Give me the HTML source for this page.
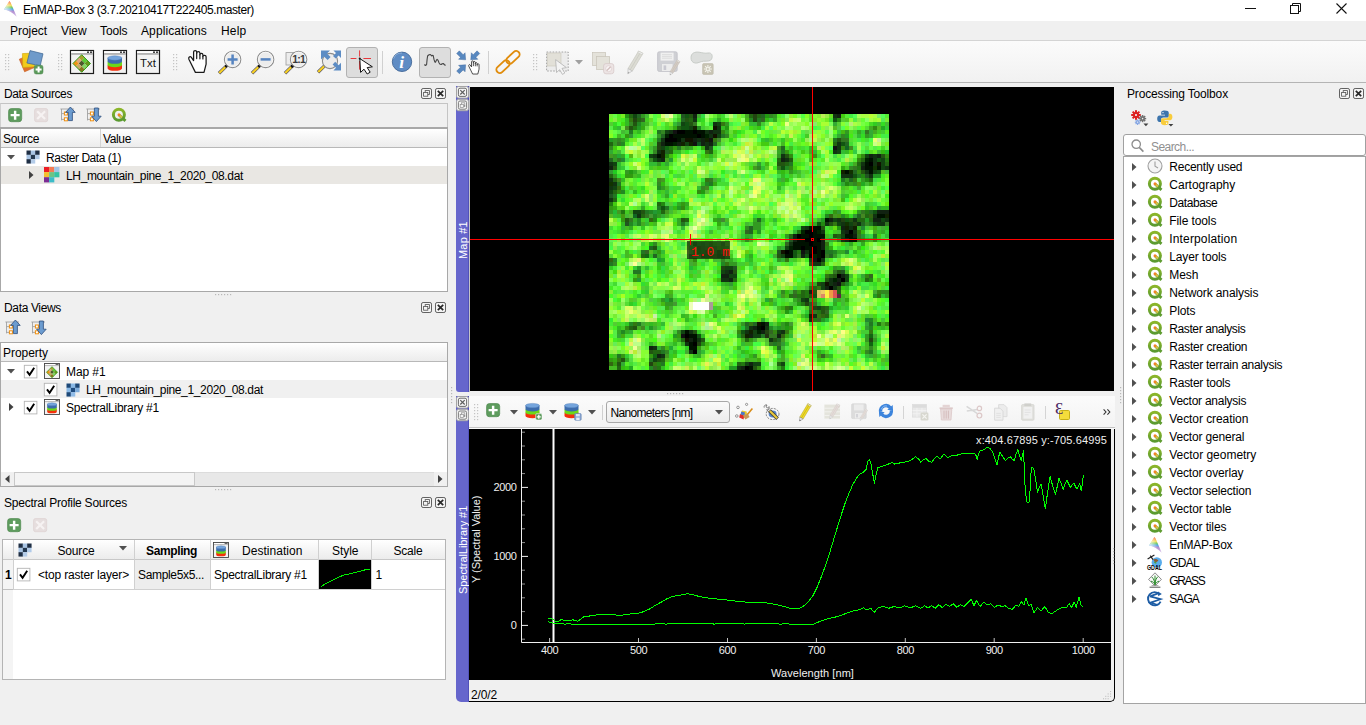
<!DOCTYPE html>
<html lang="en"><head><meta charset="utf-8"><title>EnMAP-Box 3</title><style>
html,body{margin:0;padding:0;}
body{width:1366px;height:725px;overflow:hidden;background:#f0f0f0;position:relative;font-family:"Liberation Sans",sans-serif;font-size:12px;color:#000;}
.t{position:absolute;white-space:nowrap;}
.r{position:absolute;box-sizing:border-box;}
svg{overflow:visible;}
svg text{font-family:"Liberation Sans",sans-serif;}
</style></head>
<body>
<div class="r" style="left:0px;top:0px;width:1366px;height:21px;background:#ffffff;"></div>
<svg class="r" style="left:0;top:0" width="0" height="0"><defs><linearGradient id="lg1" x1="0" y1="0" x2="0" y2="1"><stop offset="0" stop-color="#f02818"/><stop offset="0.16" stop-color="#f89018"/><stop offset="0.28" stop-color="#f4d838"/><stop offset="0.4" stop-color="#68c440"/><stop offset="0.52" stop-color="#48a8e4"/><stop offset="0.66" stop-color="#b08cd0"/><stop offset="1" stop-color="#dcc8ec"/></linearGradient><linearGradient id="lg2" x1="0" y1="0" x2="1" y2="0"><stop offset="0" stop-color="#fff" stop-opacity="0.85"/><stop offset="0.45" stop-color="#fff" stop-opacity="0.35"/><stop offset="0.7" stop-color="#fff" stop-opacity="0"/></linearGradient><linearGradient id="qg" x1="0" y1="0" x2="0" y2="1"><stop offset="0" stop-color="#8cb62a"/><stop offset="1" stop-color="#5a9a30"/></linearGradient></defs></svg>
<svg class="r" style="left:0px;top:0px;" width="18" height="18" viewBox="0 0 18 18"><path d="M9.4 0.9 L4.1 9.4 Q10.4 10.4 16.7 16.7 Q13.6 9.2 10.5 2.4 Z" fill="url(#lg1)"/><path d="M9.4 0.9 L4.1 9.4 Q10.4 10.4 16.7 16.7 Q13.6 9.2 10.5 2.4 Z" fill="url(#lg2)"/></svg>
<div class="t" style="left:23px;top:3.04px;font-size:12px;line-height:14px;letter-spacing:-0.413px;">EnMAP-Box 3 (3.7.20210417T222405.master)</div>
<svg class="r" style="left:1245px;top:8px;" width="12" height="2" viewBox="0 0 12 2"><path d="M0 0.5H11" stroke="#111" stroke-width="1"/></svg>
<svg class="r" style="left:1290px;top:3px;" width="12" height="12" viewBox="0 0 12 12"><rect x="0.5" y="2.5" width="8" height="8" fill="#fff" stroke="#111" stroke-width="1"/><path d="M2.5 2.5V0.5H10.5V8.5H8.5" fill="none" stroke="#111" stroke-width="1"/></svg>
<svg class="r" style="left:1336px;top:3px;" width="12" height="12" viewBox="0 0 12 12"><path d="M0.5 0.5L10.5 10.5M10.5 0.5L0.5 10.5" stroke="#111" stroke-width="1.1"/></svg>
<div class="r" style="left:0px;top:21px;width:1366px;height:20px;background:#f0f0f0;"></div>
<div class="r" style="left:0px;top:40px;width:1366px;height:1px;background:#d4d4d4;"></div>
<div class="t" style="left:10px;top:23.84px;font-size:12px;line-height:14px;letter-spacing:-0.051px;">Project</div>
<div class="t" style="left:61px;top:23.84px;font-size:12px;line-height:14px;letter-spacing:-0.075px;">View</div>
<div class="t" style="left:100px;top:23.84px;font-size:12px;line-height:14px;letter-spacing:-0.105px;">Tools</div>
<div class="t" style="left:141px;top:23.84px;font-size:12px;line-height:14px;letter-spacing:0.106px;">Applications</div>
<div class="t" style="left:221px;top:23.84px;font-size:12px;line-height:14px;letter-spacing:0.203px;">Help</div>
<div class="r" style="left:0px;top:41px;width:1366px;height:41px;background:linear-gradient(#fbfbfb,#f1f1f1);"></div>
<div class="r" style="left:0px;top:82px;width:1366px;height:1px;background:#b4b4b4;"></div>
<svg class="r" style="left:5px;top:54px;" width="5" height="18" viewBox="0 0 5 18"><rect x="0" y="0" width="1.2" height="1.2" fill="#c4c4c4"/><rect x="3" y="0" width="1.2" height="1.2" fill="#c4c4c4"/><rect x="0" y="3" width="1.2" height="1.2" fill="#c4c4c4"/><rect x="3" y="3" width="1.2" height="1.2" fill="#c4c4c4"/><rect x="0" y="6" width="1.2" height="1.2" fill="#c4c4c4"/><rect x="3" y="6" width="1.2" height="1.2" fill="#c4c4c4"/><rect x="0" y="9" width="1.2" height="1.2" fill="#c4c4c4"/><rect x="3" y="9" width="1.2" height="1.2" fill="#c4c4c4"/><rect x="0" y="12" width="1.2" height="1.2" fill="#c4c4c4"/><rect x="3" y="12" width="1.2" height="1.2" fill="#c4c4c4"/><rect x="0" y="15" width="1.2" height="1.2" fill="#c4c4c4"/><rect x="3" y="15" width="1.2" height="1.2" fill="#c4c4c4"/></svg>
<svg class="r" style="left:58px;top:54px;" width="5" height="18" viewBox="0 0 5 18"><rect x="0" y="0" width="1.2" height="1.2" fill="#c4c4c4"/><rect x="3" y="0" width="1.2" height="1.2" fill="#c4c4c4"/><rect x="0" y="3" width="1.2" height="1.2" fill="#c4c4c4"/><rect x="3" y="3" width="1.2" height="1.2" fill="#c4c4c4"/><rect x="0" y="6" width="1.2" height="1.2" fill="#c4c4c4"/><rect x="3" y="6" width="1.2" height="1.2" fill="#c4c4c4"/><rect x="0" y="9" width="1.2" height="1.2" fill="#c4c4c4"/><rect x="3" y="9" width="1.2" height="1.2" fill="#c4c4c4"/><rect x="0" y="12" width="1.2" height="1.2" fill="#c4c4c4"/><rect x="3" y="12" width="1.2" height="1.2" fill="#c4c4c4"/><rect x="0" y="15" width="1.2" height="1.2" fill="#c4c4c4"/><rect x="3" y="15" width="1.2" height="1.2" fill="#c4c4c4"/></svg>
<svg class="r" style="left:173px;top:54px;" width="5" height="18" viewBox="0 0 5 18"><rect x="0" y="0" width="1.2" height="1.2" fill="#c4c4c4"/><rect x="3" y="0" width="1.2" height="1.2" fill="#c4c4c4"/><rect x="0" y="3" width="1.2" height="1.2" fill="#c4c4c4"/><rect x="3" y="3" width="1.2" height="1.2" fill="#c4c4c4"/><rect x="0" y="6" width="1.2" height="1.2" fill="#c4c4c4"/><rect x="3" y="6" width="1.2" height="1.2" fill="#c4c4c4"/><rect x="0" y="9" width="1.2" height="1.2" fill="#c4c4c4"/><rect x="3" y="9" width="1.2" height="1.2" fill="#c4c4c4"/><rect x="0" y="12" width="1.2" height="1.2" fill="#c4c4c4"/><rect x="3" y="12" width="1.2" height="1.2" fill="#c4c4c4"/><rect x="0" y="15" width="1.2" height="1.2" fill="#c4c4c4"/><rect x="3" y="15" width="1.2" height="1.2" fill="#c4c4c4"/></svg>
<svg class="r" style="left:533px;top:54px;" width="5" height="18" viewBox="0 0 5 18"><rect x="0" y="0" width="1.2" height="1.2" fill="#c4c4c4"/><rect x="3" y="0" width="1.2" height="1.2" fill="#c4c4c4"/><rect x="0" y="3" width="1.2" height="1.2" fill="#c4c4c4"/><rect x="3" y="3" width="1.2" height="1.2" fill="#c4c4c4"/><rect x="0" y="6" width="1.2" height="1.2" fill="#c4c4c4"/><rect x="3" y="6" width="1.2" height="1.2" fill="#c4c4c4"/><rect x="0" y="9" width="1.2" height="1.2" fill="#c4c4c4"/><rect x="3" y="9" width="1.2" height="1.2" fill="#c4c4c4"/><rect x="0" y="12" width="1.2" height="1.2" fill="#c4c4c4"/><rect x="3" y="12" width="1.2" height="1.2" fill="#c4c4c4"/><rect x="0" y="15" width="1.2" height="1.2" fill="#c4c4c4"/><rect x="3" y="15" width="1.2" height="1.2" fill="#c4c4c4"/></svg>
<svg class="r" style="left:19px;top:50px;" width="24" height="24" viewBox="0 0 24 24"><polygon points="0.3,9.2 10.5,5 15.2,17.6 5.6,21.8" fill="#e0702c" stroke="#c25a1c" stroke-width="0.6"/><polygon points="3.4,3.6 15.2,3 15.6,16.8 3.8,17.4" fill="#f2cb1c" stroke="#cfa40c" stroke-width="0.6"/><polygon points="11,0.6 24,3.8 21.2,15.8 7.9,13" fill="#6e9aca" stroke="#3c6490" stroke-width="0.7"/><rect x="15.2" y="15.2" width="8.8" height="8.8" rx="2" fill="#5a9a5a" stroke="#478047" stroke-width="0.5"/><path d="M19.6 16.6v6M16.6 19.6h6" stroke="#fff" stroke-width="2"/></svg>
<svg class="r" style="left:70px;top:50px;" width="24" height="24" viewBox="0 0 24 24"><rect x="0.5" y="0.5" width="23" height="23" fill="#f2f2f2" stroke="#1c1c1c" stroke-width="1.2"/><rect x="1.2" y="1.2" width="21.6" height="2" fill="#fff"/><rect x="1.2" y="3.2" width="21.6" height="1.5" fill="#a4a4a4"/><rect x="17" y="1.4" width="2" height="1.6" fill="#444"/><rect x="20" y="1.4" width="2.2" height="1.6" fill="#444"/><g transform="translate(11.7 13.5) rotate(45) translate(-6.2 -6.2)"><rect x="0.00" y="0.00" width="4.2" height="4.2" fill="#a8a030"/><rect x="4.13" y="0.00" width="4.2" height="4.2" fill="#5ccc34"/><rect x="8.26" y="0.00" width="4.2" height="4.2" fill="#64981c"/><rect x="0.00" y="4.13" width="4.2" height="4.2" fill="#dca47c"/><rect x="4.13" y="4.13" width="4.2" height="4.2" fill="#4a5a2a"/><rect x="8.26" y="4.13" width="4.2" height="4.2" fill="#84d464"/><rect x="0.00" y="8.26" width="4.2" height="4.2" fill="#f09414"/><rect x="4.13" y="8.26" width="4.2" height="4.2" fill="#c8a864"/><rect x="8.26" y="8.26" width="4.2" height="4.2" fill="#8c7420"/><rect x="0" y="0" width="12.4" height="12.4" fill="none" stroke="#2c9c10" stroke-width="0.9"/></g></svg>
<svg class="r" style="left:103px;top:50px;" width="24" height="24" viewBox="0 0 24 24"><rect x="0.5" y="0.5" width="23" height="23" fill="#f2f2f2" stroke="#1c1c1c" stroke-width="1.2"/><rect x="1.2" y="1.2" width="21.6" height="2" fill="#fff"/><rect x="1.2" y="3.2" width="21.6" height="1.5" fill="#a4a4a4"/><rect x="17" y="1.4" width="2" height="1.6" fill="#444"/><rect x="20" y="1.4" width="2.2" height="1.6" fill="#444"/><path d="M4.6000000000000005 15.0V18.6A7.2 2.2 0 0 0 19.0 18.6V15.0Z" fill="#f4300c"/><path d="M4.6000000000000005 11.6V15.0A7.2 2.2 0 0 0 19.0 15.0V11.6Z" fill="#6cd818"/><path d="M4.6000000000000005 8.0V11.6A7.2 2.2 0 0 0 19.0 11.6V8.0Z" fill="#3c6cac"/><ellipse cx="11.8" cy="8.0" rx="7.2" ry="2.2" fill="#74a4dc" stroke="#4878b4" stroke-width="0.4"/></svg>
<svg class="r" style="left:136px;top:50px;" width="24" height="24" viewBox="0 0 24 24"><rect x="0.5" y="0.5" width="23" height="23" fill="#f2f2f2" stroke="#1c1c1c" stroke-width="1.2"/><rect x="1.2" y="1.2" width="21.6" height="2" fill="#fff"/><rect x="1.2" y="3.2" width="21.6" height="1.5" fill="#a4a4a4"/><rect x="17" y="1.4" width="2" height="1.6" fill="#444"/><rect x="20" y="1.4" width="2.2" height="1.6" fill="#444"/><text x="12" y="17.2" font-size="11.4" text-anchor="middle" fill="#111">Txt</text></svg>
<svg class="r" style="left:186.5px;top:50px;" width="24" height="24" viewBox="0 0 24 24"><path d="M8.4 22.4 L1.9 9.2 C1.1 7.4 3 5.8 4.2 7.2 L6.6 10.6 V2 C6.6 0 9.7 0 9.7 2 V3 C9.7 1 12.9 1 12.9 3 V4.8 C12.9 2.9 15.9 2.9 15.9 4.9 V6.6 C15.9 4.8 19.1 4.8 19.1 6.8 V14.2 L17 22.4 Z" fill="#fff" stroke="#1a1a1a" stroke-width="1.25" stroke-linejoin="round"/><path d="M9.7 3V8.6M12.9 4.8V8.8M15.9 6.6V9" fill="none" stroke="#1a1a1a" stroke-width="1.2" stroke-linecap="round"/></svg>
<svg class="r" style="left:218px;top:50.5px;" width="24" height="24" viewBox="0 0 24 24"><path d="M1 22.2 L8 15.4" stroke="#50506c" stroke-width="3.4" stroke-linecap="butt"/><path d="M1.2 22 L7.4 16" stroke="#f6cf22" stroke-width="2.3" stroke-linecap="butt"/><circle cx="8.3" cy="14.9" r="1.5" fill="#111"/><circle cx="14.6" cy="8.4" r="8.2" fill="#ececec" stroke="#8c8c8c" stroke-width="1.1"/><circle cx="14.6" cy="8.4" r="7.2" fill="none" stroke="#fafafa" stroke-width="0.8"/><path d="M14.6 3.4v10M9.6 8.4h10" stroke="#5684c0" stroke-width="2.5"/></svg>
<svg class="r" style="left:251px;top:50.5px;" width="24" height="24" viewBox="0 0 24 24"><path d="M1 22.2 L8 15.4" stroke="#50506c" stroke-width="3.4" stroke-linecap="butt"/><path d="M1.2 22 L7.4 16" stroke="#f6cf22" stroke-width="2.3" stroke-linecap="butt"/><circle cx="8.3" cy="14.9" r="1.5" fill="#111"/><circle cx="14.6" cy="8.4" r="8.2" fill="#ececec" stroke="#8c8c8c" stroke-width="1.1"/><circle cx="14.6" cy="8.4" r="7.2" fill="none" stroke="#fafafa" stroke-width="0.8"/><path d="M9.6 8.4h10" stroke="#5684c0" stroke-width="2.5"/></svg>
<svg class="r" style="left:284px;top:50.5px;" width="24" height="24" viewBox="0 0 24 24"><path d="M1 22.2 L8 15.4" stroke="#50506c" stroke-width="3.4" stroke-linecap="butt"/><path d="M1.2 22 L7.4 16" stroke="#f6cf22" stroke-width="2.3" stroke-linecap="butt"/><circle cx="8.3" cy="14.9" r="1.5" fill="#111"/><rect x="2" y="1.6" width="8" height="12.4" fill="#ececec" stroke="#9c9c9c" stroke-width="0.8"/><circle cx="8.3" cy="14.9" r="1.5" fill="#111"/><circle cx="14.6" cy="8.4" r="8.2" fill="#ececec" stroke="#8c8c8c" stroke-width="1.1"/><circle cx="14.6" cy="8.4" r="7.2" fill="none" stroke="#fafafa" stroke-width="0.8"/><text x="14.7" y="12.2" font-size="10.5" font-weight="bold" text-anchor="middle" fill="#3a3a3a" letter-spacing="-0.8">1:1</text></svg>
<svg class="r" style="left:317px;top:50px;" width="24" height="24" viewBox="0 0 24 24"><path d="M1 22.2 L8 15.4" stroke="#50506c" stroke-width="3.4" stroke-linecap="butt"/><path d="M1.2 22 L7.4 16" stroke="#f6cf22" stroke-width="2.3" stroke-linecap="butt"/><circle cx="8.3" cy="14.9" r="1.5" fill="#111"/><circle cx="13" cy="11" r="7.6" fill="#ececec" stroke="#8c8c8c" stroke-width="1.1"/><path d="M4 0.4h9l-3 3 3.6 3.6-3 3L7 6.4l-3 3Z" fill="#5c8cc4"/><path d="M24 0.4h-7.6l2.6 2.6-3 3 2.6 2.6 3-3 2.4 2.4Z" fill="#5c8cc4"/><path d="M24 20.4h-7.6l2.6-2.6-3.4-3.4 2.6-2.6 3.4 3.4 2.4-2.4Z" fill="#5c8cc4"/></svg>
<div class="r" style="left:346px;top:47px;width:32px;height:31px;background:#dddddd;border:1px solid #b2b2b2;border-radius:3px;"></div>
<svg class="r" style="left:350px;top:50px;" width="24" height="24" viewBox="0 0 24 24"><path d="M9.6 0.4V6.6M9.6 11V19.6M0.6 8.5H6.4M13.4 8.5H21" stroke="#e8383c" stroke-width="1"/><path d="M9.8 8.6 L10.6 22.4 L14 19.2 L17.2 24 L20.2 22.2 L17.2 17.6 L22.4 16.8 Z" fill="#fff" stroke="#111" stroke-width="1" stroke-linejoin="round"/><circle cx="9.7" cy="8.6" r="1" fill="#111"/></svg>
<div class="r" style="left:382px;top:51px;width:1px;height:23px;background:#d0d0d0;"></div>
<svg class="r" style="left:390px;top:50px;" width="24" height="24" viewBox="0 0 24 24"><circle cx="12" cy="11.8" r="9.7" fill="#5f8cc4" stroke="#3f6596" stroke-width="0.9"/><path d="M3.6 8.6 A8.6 8.6 0 0 1 12 3" fill="none" stroke="#9cbce0" stroke-width="0.9" opacity="0.8"/><text x="11.6" y="18.2" font-size="17.5" text-anchor="middle" fill="#fff" style="font-family:'Liberation Serif',serif;font-style:italic;font-weight:bold;">i</text></svg>
<div class="r" style="left:419px;top:47px;width:32px;height:31px;background:#dddddd;border:1px solid #b2b2b2;border-radius:3px;"></div>
<svg class="r" style="left:423px;top:50px;" width="24" height="24" viewBox="0 0 24 24"><path d="M1.3 15.3 L2 14.8 L2.8 15.5 L3.6 14.5 L4.1 9.4 L4.6 6 L5.6 5 L7.1 4.5 L7.9 5 L8.7 6 L9.5 5.3 L10.2 5.5 L11 9.4 L11.8 11.9 L12.5 12.2 L13.3 10.4 L14.1 9.4 L15.1 10.4 L16.1 13 L17.2 14.3 L18.2 14.5 L19.2 13.7 L20.2 13.5 L21.3 14.5 L22.5 15.5" fill="none" stroke="#444" stroke-width="1.1" stroke-linejoin="round"/></svg>
<svg class="r" style="left:457px;top:50.5px;" width="24" height="24" viewBox="0 0 24 24"><g transform="translate(1 1.2) rotate(45)"><path d="M0 -1.9H5.4V-4.6L10.8 0L5.4 4.6V1.9H0Z" fill="#5888c0" stroke="#3c6498" stroke-width="0.4"/></g><g transform="translate(21.4 1.2) rotate(135)"><path d="M0 -1.9H5.4V-4.6L10.8 0L5.4 4.6V1.9H0Z" fill="#5888c0" stroke="#3c6498" stroke-width="0.4"/></g><g transform="translate(1 21.4) rotate(-45)"><path d="M0 -1.9H5.4V-4.6L10.8 0L5.4 4.6V1.9H0Z" fill="#5888c0" stroke="#3c6498" stroke-width="0.4"/></g><g transform="translate(10.6 9.6) scale(0.6)"><path d="M8.4 22.4 L1.9 9.2 C1.1 7.4 3 5.8 4.2 7.2 L6.6 10.6 V2 C6.6 0 9.7 0 9.7 2 V3 C9.7 1 12.9 1 12.9 3 V4.8 C12.9 2.9 15.9 2.9 15.9 4.9 V6.6 C15.9 4.8 19.1 4.8 19.1 6.8 V14.2 L17 22.4 Z" fill="#fff" stroke="#1a1a1a" stroke-width="1.25" stroke-linejoin="round"/><path d="M9.7 3V8.6M12.9 4.8V8.8M15.9 6.6V9" fill="none" stroke="#1a1a1a" stroke-width="1.2" stroke-linecap="round"/></g></svg>
<div class="r" style="left:488px;top:51px;width:1px;height:23px;background:#d0d0d0;"></div>
<svg class="r" style="left:496px;top:50px;" width="24" height="24" viewBox="0 0 24 24"><g transform="rotate(-43 12 12)" fill="none" stroke="#e08c0c" stroke-width="1.9"><rect x="-2.6" y="8.6" width="15.6" height="6.8" rx="3.4"/><rect x="11" y="8.6" width="15.6" height="6.8" rx="3.4"/></g></svg>
<svg class="r" style="left:546px;top:50.5px;" width="24" height="24" viewBox="0 0 24 24"><rect x="0.6" y="1" width="21.6" height="19" fill="#ececec" stroke="#9c9c9c" stroke-width="0.9" stroke-dasharray="1.6 1.4"/><rect x="1.6" y="2" width="13.4" height="13" fill="#e2e0d8" stroke="#ccc8bc" stroke-width="0.6"/><path d="M9.6 8.6 L10.6 21.6 L13.6 18.6 L16.4 23.4 L18.8 22 L16 17.4 L20.4 16.6 Z" fill="#f4f4f4" stroke="#b8b8b8" stroke-width="0.9" stroke-linejoin="round"/></svg>
<svg class="r" style="left:575px;top:60px;" width="8" height="5" viewBox="0 0 8 5"><path d="M0 0 H8 L4 4.5Z" fill="#a0a0a0"/></svg>
<svg class="r" style="left:592px;top:52px;" width="24" height="24" viewBox="0 0 24 24"><rect x="0.6" y="0.6" width="13" height="13" fill="#e4e2da" stroke="#c8c4b8" stroke-width="0.7"/><rect x="4.6" y="4.6" width="13" height="13" fill="#e4e2da" stroke="#c8c4b8" stroke-width="0.7"/><rect x="11.6" y="11.6" width="10.2" height="10.2" rx="2.4" fill="#ece4e4" stroke="#d4c4c4" stroke-width="0.7"/><circle cx="16.7" cy="16.7" r="3" fill="#f8f4f4" stroke="#d8c8c8" stroke-width="0.6"/><path d="M14.8 18.6L18.6 14.8" stroke="#d0bcbc" stroke-width="1.3"/></svg>
<svg class="r" style="left:627px;top:50px;" width="24" height="24" viewBox="0 0 24 24"><path d="M11.6 1 L16 3.4 L5.4 21 L1 18.6 Z" fill="#dcdcd4" stroke="#c4c4bc" stroke-width="0.6"/><path d="M13.6 2.2 L3.2 19.8" stroke="#c4c4bc" stroke-width="0.6"/><path d="M1 18.6 L5.4 21 L0.8 23.8 Z" fill="#ececec" stroke="#b8b8b8" stroke-width="0.6"/><path d="M0.8 23.8 L1 21.8 L2.4 22.8Z" fill="#a0a0a0"/><path d="M11.6 1 L16 3.4 L15.2 4.8 L10.8 2.4Z" fill="#f0f0f0" stroke="#c4c4bc" stroke-width="0.5"/></svg>
<svg class="r" style="left:657px;top:51px;" width="24" height="24" viewBox="0 0 24 24"><rect x="0.6" y="0.8" width="19.6" height="19.6" rx="1.6" fill="#cfd0d4" stroke="#c0c0c6" stroke-width="0.8"/><rect x="3.6" y="1.6" width="13" height="8" fill="#f0f0f0"/><path d="M5 3.6h10M5 5.4h10M5 7.2h10" stroke="#d8d8d8" stroke-width="0.8"/><rect x="5" y="13" width="10.6" height="7" fill="#ececec"/><rect x="6.6" y="14.4" width="2.6" height="4.6" fill="#c8c8d0"/><g transform="translate(12.4 8.4) scale(0.66)"><path d="M11.6 1 L16 3.4 L5.4 21 L1 18.6 Z" fill="#d4ccc4" stroke="#bcb4ac" stroke-width="0.6"/><path d="M13.6 2.2 L3.2 19.8" stroke="#bcb4ac" stroke-width="0.6"/><path d="M1 18.6 L5.4 21 L0.8 23.8 Z" fill="#ececec" stroke="#b8b8b8" stroke-width="0.6"/><path d="M0.8 23.8 L1 21.8 L2.4 22.8Z" fill="#a0a0a0"/><path d="M11.6 1 L16 3.4 L15.2 4.8 L10.8 2.4Z" fill="#f0f0f0" stroke="#bcb4ac" stroke-width="0.5"/></g></svg>
<svg class="r" style="left:690px;top:51px;" width="24" height="24" viewBox="0 0 24 24"><path d="M1 6.6 C1 2 5 0.6 9 1.2 C13 1.8 15 2.6 18 2 C22 1.4 23 5 21.6 8 C20.4 10.6 17 10 13.6 10.2 C10 10.4 8 12.6 5 12 C2 11.4 1 9.4 1 6.6Z" fill="#dcdedc" stroke="#c4c8c4" stroke-width="0.9"/><rect x="12.6" y="12.6" width="10.6" height="10.8" rx="1.2" fill="#c8c4b4" stroke="#bcb8a8" stroke-width="0.6"/><path d="M17.9 14v8M13.9 18h8M15.1 15.2l5.6 5.6M20.7 15.2l-5.6 5.6" stroke="#f4f4ec" stroke-width="1.1"/><circle cx="17.9" cy="18" r="1.5" fill="#c8c4b4" stroke="#f4f4ec" stroke-width="0.8"/></svg>
<div class="t" style="left:4px;top:86.84px;font-size:12px;line-height:14px;letter-spacing:-0.393px;">Data Sources</div>
<svg class="r" style="left:421px;top:88px;" width="11" height="11" viewBox="0 0 11 11"><rect x="0.5" y="0.5" width="10" height="10" rx="1.6" fill="#f4f4f4" stroke="#505050" stroke-width="0.9"/><rect x="4.2" y="2.6" width="4.2" height="3.8" fill="#f4f4f4" stroke="#505050" stroke-width="0.8"/><rect x="2.6" y="4.4" width="4.2" height="3.8" fill="#f4f4f4" stroke="#505050" stroke-width="0.8"/></svg>
<svg class="r" style="left:435px;top:88px;" width="11" height="11" viewBox="0 0 11 11"><rect x="0.5" y="0.5" width="10" height="10" rx="1.6" fill="#f4f4f4" stroke="#505050" stroke-width="0.9"/><path d="M2.8 2.8l5.4 5.4M8.2 2.8l-5.4 5.4" stroke="#282828" stroke-width="1.7"/></svg>
<div class="r" style="left:0px;top:103px;width:448px;height:189px;background:#f0f0f0;border:1px solid #c4c4c4;border-left:1px solid #d0d0d0;"></div>
<svg class="r" style="left:8px;top:108px;" width="15" height="15" viewBox="0 0 16 16"><rect x="0.6" y="0.6" width="14" height="14" rx="3" fill="#5e9c5e" stroke="#4c864c" stroke-width="0.7"/><path d="M7.6 2.8v9.6M2.8 7.6h9.6" stroke="#fff" stroke-width="2.6"/></svg>
<svg class="r" style="left:34px;top:108px;" width="15" height="15" viewBox="0 0 16 16"><rect x="0.6" y="0.6" width="14" height="14" rx="2" fill="#e6dede" stroke="#dcd0d0" stroke-width="0.7"/><path d="M3.4 3.4l8.4 8.4M11.8 3.4l-8.4 8.4" stroke="#f6f2f2" stroke-width="2.4"/></svg>
<svg class="r" style="left:60px;top:107px;" width="16" height="16" viewBox="0 0 16 16"><path d="M0.4 2h13.6M1.5 2v11.4M1.5 6.6h3M1.5 12.4h3" stroke="#a0a0a0" stroke-width="0.9" fill="none"/><rect x="4.4" y="5" width="3" height="3" fill="#fff" stroke="#f09010" stroke-width="1"/><rect x="4.4" y="10.8" width="3" height="3" fill="#fff" stroke="#f09010" stroke-width="1"/><path d="M10.4 0 L15.2 5.4 H12.4 V13.6 H8.4 V5.4 H5.6Z" fill="#6c9cd0" stroke="#2c4c7c" stroke-width="0.8" stroke-linejoin="round"/></svg>
<svg class="r" style="left:86px;top:107px;" width="16" height="16" viewBox="0 0 16 16"><path d="M0.4 2h13.6M1.5 2v11.4M1.5 6.6h3M1.5 12.4h3" stroke="#a0a0a0" stroke-width="0.9" fill="none"/><rect x="4.4" y="5" width="3" height="3" fill="#fff" stroke="#f09010" stroke-width="1"/><rect x="4.4" y="10.8" width="3" height="3" fill="#fff" stroke="#f09010" stroke-width="1"/><path d="M10.4 14.6 L15.2 9.2 H12.4 V1 H8.4 V9.2 H5.6Z" fill="#6c9cd0" stroke="#2c4c7c" stroke-width="0.8" stroke-linejoin="round"/></svg>
<svg class="r" style="left:111px;top:107px;" width="16" height="16" viewBox="0 0 16 16"><circle cx="7.9" cy="7.7" r="5.5" fill="none" stroke="url(#qg)" stroke-width="3"/><path d="M9.4 9.2 L13.4 12.9" stroke="#5e9c30" stroke-width="2.9" stroke-linecap="square"/><path d="M8.4 8.2 L11 10.6" stroke="#d8c048" stroke-width="2.2"/><circle cx="8" cy="7.8" r="1.5" fill="#f08424"/></svg>
<div class="r" style="left:0px;top:127px;width:448px;height:165px;background:#ffffff;border:1px solid #a8a8a8;border-top:2px solid #a8a8a8;"></div>
<div class="r" style="left:1px;top:129px;width:446px;height:18px;background:linear-gradient(#ffffff 0%,#f6f6f6 45%,#ececec 100%);"></div>
<div class="r" style="left:1px;top:147px;width:446px;height:1px;background:#b8b8b8;"></div>
<div class="r" style="left:100px;top:129px;width:1px;height:18px;background:#d4d4d4;"></div>
<div class="t" style="left:3px;top:131.84px;font-size:12px;line-height:14px;letter-spacing:-0.338px;">Source</div>
<div class="t" style="left:103px;top:131.84px;font-size:12px;line-height:14px;letter-spacing:-0.362px;">Value</div>
<div class="r" style="left:1px;top:166px;width:446px;height:18px;background:#e9e7e3;"></div>
<svg class="r" style="left:7px;top:155px;" width="8" height="5" viewBox="0 0 8 5"><path d="M0 0 H8 L4 4.5Z" fill="#505050"/></svg>
<svg class="r" style="left:26px;top:150.3px;" width="14" height="14" viewBox="0 0 14 14"><rect x="0.50" y="0.50" width="4.4" height="4.4" fill="#1e2e44"/><rect x="4.84" y="0.50" width="4.4" height="4.4" fill="#a8c4e4"/><rect x="9.18" y="0.50" width="4.4" height="4.4" fill="#1e2e44"/><rect x="0.50" y="4.84" width="4.4" height="4.4" fill="#a8c4e4"/><rect x="4.84" y="4.84" width="4.4" height="4.4" fill="#24384f"/><rect x="9.18" y="4.84" width="4.4" height="4.4" fill="#b0cae8"/><rect x="0.50" y="9.18" width="4.4" height="4.4" fill="#1e2e44"/><rect x="4.84" y="9.18" width="4.4" height="4.4" fill="#b4cce8"/><rect x="9.18" y="9.18" width="4.4" height="4.4" fill="none"/></svg>
<div class="t" style="left:46px;top:151.24px;font-size:12px;line-height:14px;letter-spacing:-0.470px;">Raster Data (1)</div>
<svg class="r" style="left:29px;top:171px;" width="5" height="8" viewBox="0 0 5 8"><path d="M0 0 L4.5 4 L0 8Z" fill="#404040"/></svg>
<svg class="r" style="left:44px;top:167px;" width="16" height="16" viewBox="0 0 16 16"><rect x="0.00" y="0.00" width="5.2" height="5.2" fill="#ec1c24"/><rect x="5.10" y="0.00" width="5.2" height="5.2" fill="#f47c54"/><rect x="10.20" y="0.00" width="5.2" height="5.2" fill="#a4c4e4"/><rect x="0.00" y="5.10" width="5.2" height="5.2" fill="#f4c030"/><rect x="5.10" y="5.10" width="5.2" height="5.2" fill="#6cc484"/><rect x="10.20" y="5.10" width="5.2" height="5.2" fill="#34c4a4"/><rect x="0.00" y="10.20" width="5.2" height="5.2" fill="#7c2c94"/><rect x="5.10" y="10.20" width="5.2" height="5.2" fill="#3cbcc8"/><rect x="10.20" y="10.20" width="5.2" height="5.2" fill="none"/></svg>
<div class="t" style="left:66px;top:169.24px;font-size:12px;line-height:14px;letter-spacing:-0.352px;">LH_mountain_pine_1_2020_08.dat</div>
<svg class="r" style="left:215px;top:294px;" width="18" height="2" viewBox="0 0 18 2"><rect x="0" y="0" width="1.2" height="1.2" fill="#b8b8b8"/><rect x="3" y="0" width="1.2" height="1.2" fill="#b8b8b8"/><rect x="6" y="0" width="1.2" height="1.2" fill="#b8b8b8"/><rect x="9" y="0" width="1.2" height="1.2" fill="#b8b8b8"/><rect x="12" y="0" width="1.2" height="1.2" fill="#b8b8b8"/><rect x="15" y="0" width="1.2" height="1.2" fill="#b8b8b8"/></svg>
<div class="t" style="left:4px;top:300.84px;font-size:12px;line-height:14px;letter-spacing:-0.349px;">Data Views</div>
<svg class="r" style="left:421px;top:302px;" width="11" height="11" viewBox="0 0 11 11"><rect x="0.5" y="0.5" width="10" height="10" rx="1.6" fill="#f4f4f4" stroke="#505050" stroke-width="0.9"/><rect x="4.2" y="2.6" width="4.2" height="3.8" fill="#f4f4f4" stroke="#505050" stroke-width="0.8"/><rect x="2.6" y="4.4" width="4.2" height="3.8" fill="#f4f4f4" stroke="#505050" stroke-width="0.8"/></svg>
<svg class="r" style="left:435px;top:302px;" width="11" height="11" viewBox="0 0 11 11"><rect x="0.5" y="0.5" width="10" height="10" rx="1.6" fill="#f4f4f4" stroke="#505050" stroke-width="0.9"/><path d="M2.8 2.8l5.4 5.4M8.2 2.8l-5.4 5.4" stroke="#282828" stroke-width="1.7"/></svg>
<svg class="r" style="left:5px;top:320px;" width="16" height="16" viewBox="0 0 16 16"><path d="M0.4 2h13.6M1.5 2v11.4M1.5 6.6h3M1.5 12.4h3" stroke="#a0a0a0" stroke-width="0.9" fill="none"/><rect x="4.4" y="5" width="3" height="3" fill="#fff" stroke="#f09010" stroke-width="1"/><rect x="4.4" y="10.8" width="3" height="3" fill="#fff" stroke="#f09010" stroke-width="1"/><path d="M10.4 0 L15.2 5.4 H12.4 V13.6 H8.4 V5.4 H5.6Z" fill="#6c9cd0" stroke="#2c4c7c" stroke-width="0.8" stroke-linejoin="round"/></svg>
<svg class="r" style="left:31px;top:320px;" width="16" height="16" viewBox="0 0 16 16"><path d="M0.4 2h13.6M1.5 2v11.4M1.5 6.6h3M1.5 12.4h3" stroke="#a0a0a0" stroke-width="0.9" fill="none"/><rect x="4.4" y="5" width="3" height="3" fill="#fff" stroke="#f09010" stroke-width="1"/><rect x="4.4" y="10.8" width="3" height="3" fill="#fff" stroke="#f09010" stroke-width="1"/><path d="M10.4 14.6 L15.2 9.2 H12.4 V1 H8.4 V9.2 H5.6Z" fill="#6c9cd0" stroke="#2c4c7c" stroke-width="0.8" stroke-linejoin="round"/></svg>
<div class="r" style="left:0px;top:342px;width:448px;height:145px;background:#ffffff;border:1px solid #a8a8a8;"></div>
<div class="r" style="left:1px;top:343px;width:446px;height:18px;background:linear-gradient(#ffffff 0%,#f6f6f6 45%,#ececec 100%);"></div>
<div class="r" style="left:1px;top:361px;width:446px;height:1px;background:#b8b8b8;"></div>
<div class="t" style="left:3px;top:345.84px;font-size:12px;line-height:14px;letter-spacing:-0.045px;">Property</div>
<div class="r" style="left:1px;top:380px;width:446px;height:18px;background:#f0f0f0;"></div>
<svg class="r" style="left:7px;top:369px;" width="8" height="5" viewBox="0 0 8 5"><path d="M0 0 H8 L4 4.5Z" fill="#505050"/></svg>
<svg class="r" style="left:24px;top:364.5px;" width="13" height="13" viewBox="0 0 13 13"><rect x="0.3" y="0.3" width="12.6" height="12.6" fill="#fff" stroke="#b4b4b4" stroke-width="0.9"/><path d="M3 6.4 L5.6 9.8 L10.2 2.8" fill="none" stroke="#000" stroke-width="1.9"/></svg>
<svg class="r" style="left:44px;top:363px;" width="16" height="16" viewBox="0 0 16 16"><rect x="0.5" y="0.5" width="15" height="15" fill="#f4f4f4" stroke="#444" stroke-width="0.9"/><rect x="1" y="1" width="14" height="1.2" fill="#fff"/><rect x="1" y="2.2" width="14" height="0.9" fill="#b0b0b0"/><rect x="11.6" y="1" width="3" height="1" fill="#666"/><g transform="translate(8 9.2) rotate(45) translate(-3.9 -3.9)"><rect x="0.00" y="0.00" width="2.7" height="2.7" fill="#a8a030"/><rect x="2.60" y="0.00" width="2.7" height="2.7" fill="#5ccc34"/><rect x="5.20" y="0.00" width="2.7" height="2.7" fill="#64981c"/><rect x="0.00" y="2.60" width="2.7" height="2.7" fill="#dca47c"/><rect x="2.60" y="2.60" width="2.7" height="2.7" fill="#4a5a2a"/><rect x="5.20" y="2.60" width="2.7" height="2.7" fill="#84d464"/><rect x="0.00" y="5.20" width="2.7" height="2.7" fill="#f09414"/><rect x="2.60" y="5.20" width="2.7" height="2.7" fill="#c8a864"/><rect x="5.20" y="5.20" width="2.7" height="2.7" fill="#8c7420"/><rect x="0" y="0" width="7.8" height="7.8" fill="none" stroke="#2c9c10" stroke-width="0.7"/></g></svg>
<div class="t" style="left:66px;top:365.24px;font-size:12px;line-height:14px;letter-spacing:-0.089px;">Map #1</div>
<svg class="r" style="left:44px;top:382.5px;" width="13" height="13" viewBox="0 0 13 13"><rect x="0.3" y="0.3" width="12.6" height="12.6" fill="#fff" stroke="#b4b4b4" stroke-width="0.9"/><path d="M3 6.4 L5.6 9.8 L10.2 2.8" fill="none" stroke="#000" stroke-width="1.9"/></svg>
<svg class="r" style="left:66px;top:382.5px;" width="14" height="14" viewBox="0 0 14 14"><rect x="0.50" y="0.50" width="4.4" height="4.4" fill="#1c4878"/><rect x="4.84" y="0.50" width="4.4" height="4.4" fill="#88b8e6"/><rect x="9.18" y="0.50" width="4.4" height="4.4" fill="#1c4878"/><rect x="0.50" y="4.84" width="4.4" height="4.4" fill="#88b8e6"/><rect x="4.84" y="4.84" width="4.4" height="4.4" fill="#1e4c80"/><rect x="9.18" y="4.84" width="4.4" height="4.4" fill="#7cacdc"/><rect x="0.50" y="9.18" width="4.4" height="4.4" fill="#1c4878"/><rect x="4.84" y="9.18" width="4.4" height="4.4" fill="#90bce8"/><rect x="9.18" y="9.18" width="4.4" height="4.4" fill="none"/></svg>
<div class="t" style="left:86px;top:383.24px;font-size:12px;line-height:14px;letter-spacing:-0.352px;">LH_mountain_pine_1_2020_08.dat</div>
<svg class="r" style="left:9px;top:403px;" width="5" height="8" viewBox="0 0 5 8"><path d="M0 0 L4.5 4 L0 8Z" fill="#404040"/></svg>
<svg class="r" style="left:24px;top:400.5px;" width="13" height="13" viewBox="0 0 13 13"><rect x="0.3" y="0.3" width="12.6" height="12.6" fill="#fff" stroke="#b4b4b4" stroke-width="0.9"/><path d="M3 6.4 L5.6 9.8 L10.2 2.8" fill="none" stroke="#000" stroke-width="1.9"/></svg>
<svg class="r" style="left:44px;top:399px;" width="16" height="16" viewBox="0 0 16 16"><rect x="0.5" y="0.5" width="15" height="15" fill="#f4f4f4" stroke="#444" stroke-width="0.9"/><rect x="1" y="1" width="14" height="1.2" fill="#fff"/><rect x="1" y="2.2" width="14" height="0.9" fill="#b0b0b0"/><rect x="11.6" y="1" width="3" height="1" fill="#666"/><path d="M3.2 10.3V12.700000000000001A4.8 1.5 0 0 0 12.8 12.700000000000001V10.3Z" fill="#f4300c"/><path d="M3.2 7.9V10.3A4.8 1.5 0 0 0 12.8 10.3V7.9Z" fill="#6cd818"/><path d="M3.2 5.3V7.9A4.8 1.5 0 0 0 12.8 7.9V5.3Z" fill="#3c6cac"/><ellipse cx="8" cy="5.3" rx="4.8" ry="1.5" fill="#74a4dc" stroke="#4878b4" stroke-width="0.4"/></svg>
<div class="t" style="left:66px;top:401.24px;font-size:12px;line-height:14px;letter-spacing:-0.245px;">SpectralLibrary #1</div>
<div class="r" style="left:1px;top:472px;width:446px;height:14px;background:#e8e8e8;border-top:1px solid #dcdcdc;"></div>
<div class="r" style="left:14px;top:472px;width:181px;height:14px;background:#f4f4f4;border:1px solid #c8c8c8;"></div>
<div class="r" style="left:1px;top:472px;width:13px;height:14px;background:#f0f0f0;"></div>
<div class="r" style="left:434px;top:472px;width:13px;height:14px;background:#f0f0f0;"></div>
<svg class="r" style="left:5px;top:475px;" width="5" height="8" viewBox="0 0 5 8"><path d="M4.5 0 L0 4 L4.5 8Z" fill="#404040"/></svg>
<svg class="r" style="left:437.5px;top:475px;" width="5" height="8" viewBox="0 0 5 8"><path d="M0 0 L4.5 4 L0 8Z" fill="#404040"/></svg>
<svg class="r" style="left:215px;top:489px;" width="18" height="2" viewBox="0 0 18 2"><rect x="0" y="0" width="1.2" height="1.2" fill="#b8b8b8"/><rect x="3" y="0" width="1.2" height="1.2" fill="#b8b8b8"/><rect x="6" y="0" width="1.2" height="1.2" fill="#b8b8b8"/><rect x="9" y="0" width="1.2" height="1.2" fill="#b8b8b8"/><rect x="12" y="0" width="1.2" height="1.2" fill="#b8b8b8"/><rect x="15" y="0" width="1.2" height="1.2" fill="#b8b8b8"/></svg>
<div class="t" style="left:4px;top:495.84px;font-size:12px;line-height:14px;letter-spacing:-0.240px;">Spectral Profile Sources</div>
<svg class="r" style="left:421px;top:497px;" width="11" height="11" viewBox="0 0 11 11"><rect x="0.5" y="0.5" width="10" height="10" rx="1.6" fill="#f4f4f4" stroke="#505050" stroke-width="0.9"/><rect x="4.2" y="2.6" width="4.2" height="3.8" fill="#f4f4f4" stroke="#505050" stroke-width="0.8"/><rect x="2.6" y="4.4" width="4.2" height="3.8" fill="#f4f4f4" stroke="#505050" stroke-width="0.8"/></svg>
<svg class="r" style="left:435px;top:497px;" width="11" height="11" viewBox="0 0 11 11"><rect x="0.5" y="0.5" width="10" height="10" rx="1.6" fill="#f4f4f4" stroke="#505050" stroke-width="0.9"/><path d="M2.8 2.8l5.4 5.4M8.2 2.8l-5.4 5.4" stroke="#282828" stroke-width="1.7"/></svg>
<svg class="r" style="left:7px;top:518px;" width="15" height="15" viewBox="0 0 16 16"><rect x="0.6" y="0.6" width="14" height="14" rx="3" fill="#5e9c5e" stroke="#4c864c" stroke-width="0.7"/><path d="M7.6 2.8v9.6M2.8 7.6h9.6" stroke="#fff" stroke-width="2.6"/></svg>
<svg class="r" style="left:33px;top:518px;" width="15" height="15" viewBox="0 0 16 16"><rect x="0.6" y="0.6" width="14" height="14" rx="2" fill="#e6dede" stroke="#dcd0d0" stroke-width="0.7"/><path d="M3.4 3.4l8.4 8.4M11.8 3.4l-8.4 8.4" stroke="#f6f2f2" stroke-width="2.4"/></svg>
<div class="r" style="left:2px;top:539px;width:444px;height:141px;background:#ffffff;border:1px solid #b4b4b4;"></div>
<div class="r" style="left:3px;top:540px;width:442px;height:19px;background:linear-gradient(#ffffff 0%,#f6f6f6 45%,#ececec 100%);"></div>
<div class="r" style="left:3px;top:559px;width:442px;height:1px;background:#c8c8c8;"></div>
<div class="r" style="left:3px;top:560px;width:10px;height:119px;background:#f4f4f4;"></div>
<div class="r" style="left:13px;top:540px;width:1px;height:49px;background:#d0d0d0;"></div>
<div class="r" style="left:134px;top:540px;width:1px;height:49px;background:#d0d0d0;"></div>
<div class="r" style="left:210px;top:540px;width:1px;height:49px;background:#d0d0d0;"></div>
<div class="r" style="left:318px;top:540px;width:1px;height:49px;background:#d0d0d0;"></div>
<div class="r" style="left:371px;top:540px;width:1px;height:49px;background:#d0d0d0;"></div>
<div class="r" style="left:13px;top:589px;width:432px;height:1px;background:#d0d0d0;"></div>
<div class="r" style="left:3px;top:589px;width:10px;height:1px;background:#c0c0c0;"></div>
<div class="r" style="left:135px;top:560px;width:75px;height:29px;background:#ededed;"></div>
<svg class="r" style="left:18px;top:543px;" width="13" height="13" viewBox="0 0 13 13"><rect x="0.50" y="0.50" width="4.4" height="4.4" fill="#1e2e44"/><rect x="4.84" y="0.50" width="4.4" height="4.4" fill="#a8c4e4"/><rect x="9.18" y="0.50" width="4.4" height="4.4" fill="#1e2e44"/><rect x="0.50" y="4.84" width="4.4" height="4.4" fill="#a8c4e4"/><rect x="4.84" y="4.84" width="4.4" height="4.4" fill="#24384f"/><rect x="9.18" y="4.84" width="4.4" height="4.4" fill="#b0cae8"/><rect x="0.50" y="9.18" width="4.4" height="4.4" fill="#1e2e44"/><rect x="4.84" y="9.18" width="4.4" height="4.4" fill="#b4cce8"/><rect x="9.18" y="9.18" width="4.4" height="4.4" fill="none"/></svg>
<div class="t" style="left:57.5px;top:543.84px;font-size:12px;line-height:14px;letter-spacing:-0.171px;">Source</div>
<svg class="r" style="left:119px;top:546px;" width="8" height="5" viewBox="0 0 8 5"><path d="M0 0 H8 L4 4.5Z" fill="#505050"/></svg>
<div class="t" style="left:146px;top:543.84px;font-size:12px;line-height:14px;letter-spacing:-0.377px;font-weight:bold;">Sampling</div>
<svg class="r" style="left:213px;top:542px;" width="16" height="16" viewBox="0 0 16 16"><rect x="0.5" y="0.5" width="15" height="15" fill="#f4f4f4" stroke="#444" stroke-width="0.9"/><rect x="1" y="1" width="14" height="1.2" fill="#fff"/><rect x="1" y="2.2" width="14" height="0.9" fill="#b0b0b0"/><rect x="11.6" y="1" width="3" height="1" fill="#666"/><path d="M3.2 10.3V12.700000000000001A4.8 1.5 0 0 0 12.8 12.700000000000001V10.3Z" fill="#f4300c"/><path d="M3.2 7.9V10.3A4.8 1.5 0 0 0 12.8 10.3V7.9Z" fill="#6cd818"/><path d="M3.2 5.3V7.9A4.8 1.5 0 0 0 12.8 7.9V5.3Z" fill="#3c6cac"/><ellipse cx="8" cy="5.3" rx="4.8" ry="1.5" fill="#74a4dc" stroke="#4878b4" stroke-width="0.4"/></svg>
<div class="t" style="left:242px;top:543.84px;font-size:12px;line-height:14px;letter-spacing:0.040px;">Destination</div>
<div class="t" style="left:332px;top:543.84px;font-size:12px;line-height:14px;letter-spacing:-0.037px;">Style</div>
<div class="t" style="left:393.5px;top:543.84px;font-size:12px;line-height:14px;letter-spacing:-0.205px;">Scale</div>
<div class="t" style="left:5px;top:567.84px;font-size:12px;line-height:14px;font-weight:bold;">1</div>
<svg class="r" style="left:17px;top:567.5px;" width="13" height="13" viewBox="0 0 13 13"><rect x="0.3" y="0.3" width="12.6" height="12.6" fill="#fff" stroke="#b4b4b4" stroke-width="0.9"/><path d="M3 6.4 L5.6 9.8 L10.2 2.8" fill="none" stroke="#000" stroke-width="1.9"/></svg>
<div class="t" style="left:38px;top:567.84px;font-size:12px;line-height:14px;letter-spacing:-0.171px;">&lt;top raster layer&gt;</div>
<div class="t" style="left:138px;top:567.84px;font-size:12px;line-height:14px;letter-spacing:-0.338px;">Sample5x5...</div>
<div class="t" style="left:214px;top:567.84px;font-size:12px;line-height:14px;letter-spacing:-0.245px;">SpectralLibrary #1</div>
<div class="r" style="left:319px;top:560px;width:52px;height:29px;background:#000000;"></div>
<svg class="r" style="left:319px;top:560px;" width="52" height="29" viewBox="0 0 52 29"><path d="M2 26.5 L8 23 L14 20 L20 17 L26 14.6 L30 14 L36 12.4 L42 11 L47 9.6 L51 9.4" fill="none" stroke="#00f000" stroke-width="1" shape-rendering="crispEdges"/></svg>
<div class="t" style="left:375.5px;top:567.84px;font-size:12px;line-height:14px;">1</div>
<div class="r" style="left:456px;top:86px;width:13px;height:306px;background:#6666cc;border-radius:0 0 0 3px;"></div>
<div class="r" style="left:468px;top:86px;width:1px;height:306px;background:#5252ba;"></div>
<div class="r" style="left:469px;top:86px;width:1px;height:306px;background:#c4c4c8;"></div>
<div class="r" style="left:470px;top:87px;width:644px;height:304px;background:#000000;"></div>
<svg class="r" style="left:456px;top:86px;" width="13" height="25" viewBox="0 0 13 25"><rect x="0.5" y="0.5" width="12" height="11.6" rx="2" fill="#f2f2f2" stroke="#a4a4a4" stroke-width="1"/><rect x="2.4" y="2.2" width="8.2" height="8.2" rx="1.6" fill="#f4f4f4" stroke="#5c5c5c" stroke-width="0.9"/><path d="M4.3 4.1l4.4 4.4M8.7 4.1l-4.4 4.4" stroke="#5c5c5c" stroke-width="1.2"/><rect x="0.5" y="13.3" width="12" height="11.4" rx="2" fill="#f2f2f2" stroke="#a4a4a4" stroke-width="1"/><rect x="2.4" y="15" width="8.2" height="8.2" rx="1.6" fill="#f4f4f4" stroke="#707070" stroke-width="0.9"/><rect x="5.4" y="16.8" width="3.4" height="3.2" fill="#f4f4f4" stroke="#909090" stroke-width="0.7"/><rect x="4.2" y="18.4" width="3.4" height="3.2" fill="#f4f4f4" stroke="#909090" stroke-width="0.7"/><path d="M8 18.6v2.6l1.6-1.3Z" fill="#909090"/></svg>
<div class="t" style="left:457px;top:259px;width:13px;height:0;font-size:11px;color:#fff;"><div style="position:absolute;left:0;top:0;transform-origin:0 0;transform:rotate(-90deg);white-space:nowrap;line-height:13px;letter-spacing:0.2px;">Map #1</div></div>
<div class="r" style="left:609px;top:114px;width:280px;height:256px;background:#58d030;"></div>
<svg class="r" style="left:609px;top:114px" width="280" height="256" viewBox="0 0 70 64" shape-rendering="crispEdges"><path fill="#7e3" d="M0 0h1v1h-1zM69 1h1v1h-1zM53 6h1v1h-1zM29 10h1v1h-1zM48 10h1v1h-1zM21 13h1v1h-1zM34 13h1v1h-1zM21 14h1v1h-1zM9 15h1v1h-1zM12 15h1v1h-1zM4 16h1v1h-1zM54 16h1v1h-1zM19 18h1v1h-1zM28 19h1v1h-1zM63 20h1v1h-1zM56 21h1v1h-1zM65 21h1v1h-1zM19 24h1v1h-1zM13 27h1v1h-1zM10 28h1v1h-1zM23 29h1v1h-1zM18 31h1v1h-1zM35 32h1v1h-1zM15 34h1v1h-1zM57 36h1v1h-1zM57 37h1v1h-1zM26 42h1v1h-1zM37 42h1v1h-1zM1 47h1v1h-1zM10 48h1v1h-1zM28 48h2v1h-2zM1 50h1v1h-1zM22 50h1v1h-1zM46 50h1v1h-1zM58 50h1v1h-1zM46 52h1v1h-1zM63 56h1v1h-1zM2 57h1v1h-1zM28 57h1v1h-1zM45 57h1v1h-1z"/><path fill="#6f4" d="M1 0h1v1h-1zM1 4h1v1h-1zM5 7h1v1h-1zM9 7h1v1h-1zM65 8h1v1h-1zM55 11h1v1h-1zM16 12h1v1h-1zM17 13h1v1h-1zM26 14h1v1h-1zM19 15h1v1h-1zM11 16h1v1h-1zM22 16h1v1h-1zM41 16h1v1h-1zM55 16h1v1h-1zM18 19h1v1h-1zM23 21h1v1h-1zM30 22h1v1h-1zM50 23h1v1h-1zM1 31h1v1h-1zM41 31h1v1h-1zM36 32h1v1h-1zM41 32h1v1h-1zM3 34h1v1h-1zM67 34h1v1h-1zM23 40h1v1h-1zM36 40h1v1h-1zM68 41h1v1h-1zM25 42h1v1h-1zM1 43h1v1h-1zM28 47h1v1h-1zM18 48h1v1h-1zM38 48h1v1h-1zM36 49h1v1h-1zM67 49h1v1h-1zM25 50h1v1h-1zM15 51h1v1h-1zM30 52h1v1h-1zM54 52h1v1h-1zM26 54h1v1h-1zM14 55h1v1h-1zM31 55h1v1h-1zM28 58h1v1h-1zM56 59h1v1h-1zM45 63h1v1h-1z"/><path fill="#5e2" d="M2 0h1v1h-1zM42 0h1v1h-1zM2 1h1v1h-1zM25 1h1v1h-1zM50 1h1v1h-1zM11 3h1v1h-1zM69 4h1v1h-1zM40 5h1v1h-1zM67 5h1v1h-1zM41 6h1v1h-1zM45 6h1v1h-1zM4 7h1v1h-1zM52 9h1v1h-1zM51 11h1v1h-1zM53 11h1v1h-1zM9 12h1v1h-1zM22 12h1v1h-1zM58 12h1v1h-1zM18 14h1v1h-1zM37 14h1v1h-1zM26 15h1v1h-1zM68 16h1v1h-1zM44 17h1v1h-1zM60 18h1v1h-1zM61 19h1v1h-1zM18 20h1v1h-1zM48 21h2v1h-2zM4 22h1v1h-1zM49 22h1v1h-1zM9 23h1v1h-1zM26 23h1v1h-1zM29 23h1v1h-1zM66 23h1v1h-1zM32 24h1v1h-1zM58 24h1v1h-1zM50 25h1v1h-1zM39 26h1v1h-1zM33 27h1v1h-1zM16 28h1v1h-1zM44 28h1v1h-1zM26 29h1v1h-1zM24 30h1v1h-1zM30 30h1v1h-1zM3 31h1v1h-1zM24 31h1v1h-1zM8 33h1v1h-1zM1 34h1v1h-1zM14 35h1v1h-1zM64 35h1v1h-1zM4 36h1v1h-1zM37 36h1v1h-1zM55 36h1v1h-1zM3 37h1v1h-1zM43 37h1v1h-1zM19 38h1v1h-1zM23 38h1v1h-1zM65 39h1v1h-1zM12 40h1v1h-1zM35 40h1v1h-1zM8 41h1v1h-1zM66 41h1v1h-1zM47 42h2v1h-2zM67 42h1v1h-1zM10 45h1v1h-1zM10 47h1v1h-1zM30 48h1v1h-1zM29 49h1v1h-1zM24 50h1v1h-1zM27 50h1v1h-1zM36 50h1v1h-1zM48 51h1v1h-1zM62 51h1v1h-1zM67 51h1v1h-1zM69 51h1v1h-1zM52 52h1v1h-1zM63 53h1v1h-1zM7 54h1v1h-1zM10 56h1v1h-1zM27 56h1v1h-1zM32 56h1v1h-1zM32 57h1v1h-1zM55 58h1v1h-1zM37 59h1v1h-1zM44 60h1v1h-1zM68 60h1v1h-1zM18 61h1v1h-1zM67 61h1v1h-1zM4 62h1v1h-1z"/><path fill="#7e2" d="M3 0h1v1h-1zM43 1h1v1h-1zM54 1h1v1h-1zM15 2h1v1h-1zM34 2h1v1h-1zM33 5h1v1h-1zM6 6h1v1h-1zM49 7h1v1h-1zM69 7h1v1h-1zM28 11h1v1h-1zM33 12h1v1h-1zM29 15h1v1h-1zM50 15h1v1h-1zM34 18h1v1h-1zM51 22h1v1h-1zM18 24h1v1h-1zM27 24h1v1h-1zM49 24h1v1h-1zM31 25h1v1h-1zM1 26h1v1h-1zM44 29h1v1h-1zM3 30h1v1h-1zM18 30h1v1h-1zM43 31h1v1h-1zM13 32h1v1h-1zM40 36h1v1h-1zM26 37h1v1h-1zM64 38h1v1h-1zM38 39h1v1h-1zM0 40h1v1h-1zM29 45h1v1h-1zM39 45h1v1h-1zM28 46h1v1h-1zM30 46h1v1h-1zM26 47h1v1h-1zM19 48h1v1h-1zM30 49h1v1h-1zM18 51h1v1h-1zM50 58h1v1h-1zM25 59h1v1h-1zM17 61h1v1h-1zM23 61h1v1h-1zM61 62h1v1h-1zM28 63h1v1h-1z"/><path fill="#291" d="M4 0h1v1h-1zM39 0h1v1h-1zM29 3h1v1h-1zM5 14h1v1h-1zM23 19h1v1h-1zM57 28h1v1h-1zM47 47h1v1h-1zM44 49h1v1h-1zM44 53h1v1h-1z"/><path fill="#261" d="M5 0h1v1h-1zM35 0h1v1h-1zM37 0h1v1h-1zM7 1h1v1h-1zM20 1h1v1h-1zM17 3h1v1h-1zM0 7h1v1h-1zM56 7h1v1h-1zM15 9h1v1h-1zM25 9h1v1h-1zM42 11h1v1h-1zM63 11h1v1h-1zM44 12h1v1h-1zM62 12h1v1h-1zM69 12h1v1h-1zM0 15h1v1h-1zM1 16h1v1h-1zM65 16h1v1h-1zM1 19h1v1h-1zM1 21h1v1h-1zM12 22h1v1h-1zM13 24h1v1h-1zM8 25h1v1h-1zM64 25h1v1h-1zM19 26h1v1h-1zM62 26h2v1h-2zM65 26h1v1h-1zM45 30h1v1h-1zM57 30h1v1h-1zM8 35h1v1h-1zM53 37h1v1h-1zM55 40h1v1h-1zM31 41h1v1h-1zM64 41h1v1h-1zM58 42h1v1h-1zM51 43h1v1h-1zM48 44h1v1h-1zM57 44h1v1h-1zM48 45h1v1h-1zM54 48h1v1h-1zM50 49h1v1h-1zM54 50h1v1h-1zM5 53h1v1h-1zM33 55h1v1h-1zM18 56h1v1h-1zM34 56h1v1h-1zM11 59h2v1h-2zM13 61h1v1h-1zM32 62h1v1h-1zM42 62h1v1h-1zM2 63h1v1h-1z"/><path fill="#141" d="M6 0h1v1h-1zM18 2h1v1h-1zM27 2h1v1h-1zM20 3h1v1h-1zM14 4h1v1h-1zM27 5h1v1h-1zM19 7h1v1h-1zM13 8h1v1h-1zM57 9h1v1h-1zM10 10h1v1h-1zM64 10h1v1h-1zM68 11h1v1h-1zM1 12h1v1h-1zM68 12h1v1h-1zM68 13h1v1h-1zM66 14h1v1h-1zM1 18h1v1h-1zM0 19h1v1h-1zM6 24h2v1h-2zM56 26h1v1h-1zM68 26h1v1h-1zM57 27h1v1h-1zM60 27h1v1h-1zM66 27h1v1h-1zM48 28h1v1h-1zM58 30h1v1h-1zM44 33h1v1h-1zM43 35h1v1h-1zM50 36h1v1h-1zM29 38h2v1h-2zM28 39h1v1h-1zM30 40h2v1h-2zM59 40h1v1h-1zM59 41h1v1h-1zM53 42h1v1h-1zM53 43h1v1h-1zM48 46h1v1h-1zM52 48h1v1h-1zM18 54h1v1h-1zM36 54h1v1h-1zM42 54h1v1h-1zM36 55h2v1h-2zM11 61h1v1h-1zM34 62h1v1h-1zM36 62h2v1h-2zM43 62h1v1h-1z"/><path fill="#262" d="M7 0h1v1h-1zM38 0h1v1h-1zM18 1h1v1h-1zM13 5h1v1h-1zM26 7h1v1h-1zM59 7h1v1h-1zM43 8h1v1h-1zM14 9h1v1h-1zM0 11h1v1h-1zM61 14h1v1h-1zM60 16h1v1h-1zM65 24h1v1h-1zM62 25h1v1h-1zM37 26h1v1h-1zM63 27h1v1h-1zM35 28h1v1h-1zM35 29h1v1h-1zM10 33h1v1h-1zM11 35h1v1h-1zM55 35h1v1h-1zM50 47h1v1h-1zM34 52h1v1h-1zM36 52h1v1h-1zM42 56h1v1h-1zM42 58h1v1h-1z"/><path fill="#392" d="M8 0h1v1h-1zM41 0h1v1h-1zM29 2h1v1h-1zM59 4h1v1h-1zM12 5h1v1h-1zM64 5h1v1h-1zM1 6h1v1h-1zM3 6h1v1h-1zM1 7h1v1h-1zM11 8h1v1h-1zM19 8h1v1h-1zM1 10h1v1h-1zM42 10h1v1h-1zM1 11h1v1h-1zM12 12h1v1h-1zM4 14h1v1h-1zM45 14h1v1h-1zM1 15h1v1h-1zM59 16h1v1h-1zM63 16h1v1h-1zM60 17h1v1h-1zM13 18h1v1h-1zM0 24h1v1h-1zM62 24h1v1h-1zM12 25h1v1h-1zM27 26h1v1h-1zM36 27h2v1h-2zM36 28h2v1h-2zM44 30h1v1h-1zM42 33h1v1h-1zM25 35h1v1h-1zM56 35h1v1h-1zM42 36h1v1h-1zM30 37h2v1h-2zM56 38h1v1h-1zM69 45h1v1h-1zM13 46h1v1h-1zM50 46h1v1h-1zM14 47h2v1h-2zM33 52h1v1h-1zM43 52h1v1h-1zM43 53h1v1h-1zM64 55h1v1h-1zM64 56h1v1h-1zM66 56h1v1h-1zM36 60h1v1h-1z"/><path fill="#4b3" d="M9 0h1v1h-1zM67 2h1v1h-1zM69 2h1v1h-1zM3 4h1v1h-1zM10 8h1v1h-1zM2 9h1v1h-1zM67 9h1v1h-1zM47 14h1v1h-1zM69 14h1v1h-1zM64 17h1v1h-1zM58 20h1v1h-1zM15 24h1v1h-1zM4 25h1v1h-1zM34 27h1v1h-1zM67 28h1v1h-1zM25 29h1v1h-1zM57 29h1v1h-1zM28 32h1v1h-1zM24 33h1v1h-1zM26 33h1v1h-1zM29 35h1v1h-1zM26 36h2v1h-2zM13 37h1v1h-1zM60 40h1v1h-1zM30 43h1v1h-1zM49 43h1v1h-1zM45 44h1v1h-1zM16 46h1v1h-1zM58 46h1v1h-1zM46 47h1v1h-1zM58 47h1v1h-1zM43 58h1v1h-1zM66 59h1v1h-1zM69 61h1v1h-1z"/><path fill="#8f4" d="M10 0h1v1h-1zM25 0h1v1h-1zM12 1h1v1h-1zM49 1h1v1h-1zM41 2h1v1h-1zM10 3h1v1h-1zM46 3h2v1h-2zM51 4h1v1h-1zM53 4h1v1h-1zM20 12h2v1h-2zM26 12h1v1h-1zM57 13h1v1h-1zM49 16h1v1h-1zM10 17h1v1h-1zM32 17h1v1h-1zM55 17h1v1h-1zM11 18h1v1h-1zM20 18h1v1h-1zM41 18h1v1h-1zM19 19h1v1h-1zM46 19h1v1h-1zM64 19h1v1h-1zM33 20h1v1h-1zM40 20h1v1h-1zM56 22h3v1h-3zM52 24h1v1h-1zM34 25h1v1h-1zM48 25h1v1h-1zM19 28h1v1h-1zM15 32h1v1h-1zM36 33h1v1h-1zM47 37h1v1h-1zM64 37h1v1h-1zM2 41h1v1h-1zM34 41h1v1h-1zM20 42h1v1h-1zM12 43h2v1h-2zM37 44h1v1h-1zM31 46h1v1h-1zM36 47h1v1h-1zM66 47h1v1h-1zM37 49h1v1h-1zM0 50h1v1h-1zM17 50h1v1h-1zM61 50h1v1h-1zM30 53h1v1h-1zM50 53h1v1h-1zM59 53h1v1h-1zM68 56h1v1h-1zM29 57h1v1h-1zM49 57h1v1h-1zM27 58h1v1h-1zM9 60h1v1h-1zM6 61h1v1h-1zM63 61h1v1h-1zM62 63h1v1h-1z"/><path fill="#5f4" d="M11 0h1v1h-1zM48 0h1v1h-1zM11 1h1v1h-1zM13 2h1v1h-1zM31 2h1v1h-1zM52 3h1v1h-1zM62 3h1v1h-1zM54 4h1v1h-1zM63 8h1v1h-1zM20 9h1v1h-1zM41 11h1v1h-1zM36 14h1v1h-1zM38 15h1v1h-1zM56 15h1v1h-1zM29 16h1v1h-1zM15 17h1v1h-1zM69 18h1v1h-1zM65 19h1v1h-1zM17 21h1v1h-1zM25 21h1v1h-1zM26 22h1v1h-1zM52 22h1v1h-1zM67 22h1v1h-1zM49 23h1v1h-1zM24 28h1v1h-1zM1 30h1v1h-1zM5 31h1v1h-1zM33 36h1v1h-1zM39 36h1v1h-1zM46 39h1v1h-1zM52 39h1v1h-1zM11 40h1v1h-1zM41 41h1v1h-1zM7 44h1v1h-1zM31 44h1v1h-1zM13 45h1v1h-1zM35 50h1v1h-1zM21 53h1v1h-1zM30 55h1v1h-1zM25 58h1v1h-1zM29 59h1v1h-1z"/><path fill="#6f3" d="M12 0h1v1h-1zM63 1h1v1h-1zM42 2h1v1h-1zM64 2h1v1h-1zM11 4h1v1h-1zM47 5h1v1h-1zM29 7h1v1h-1zM65 7h1v1h-1zM39 8h1v1h-1zM6 11h1v1h-1zM40 12h1v1h-1zM3 14h1v1h-1zM45 17h1v1h-1zM18 18h1v1h-1zM21 19h1v1h-1zM32 20h1v1h-1zM5 21h1v1h-1zM27 21h1v1h-1zM54 21h1v1h-1zM68 21h1v1h-1zM41 22h1v1h-1zM27 23h1v1h-1zM20 25h1v1h-1zM33 26h1v1h-1zM48 27h1v1h-1zM39 28h1v1h-1zM7 29h1v1h-1zM22 31h1v1h-1zM16 34h1v1h-1zM67 36h1v1h-1zM11 38h1v1h-1zM49 38h1v1h-1zM66 38h1v1h-1zM11 39h1v1h-1zM37 39h1v1h-1zM48 39h1v1h-1zM19 41h1v1h-1zM32 42h1v1h-1zM4 44h1v1h-1zM4 45h1v1h-1zM68 49h1v1h-1zM13 50h1v1h-1zM62 52h1v1h-1zM54 53h1v1h-1zM58 53h1v1h-1zM25 54h1v1h-1zM11 55h1v1h-1zM46 59h1v1h-1zM57 60h1v1h-1zM64 62h1v1h-1zM7 63h1v1h-1z"/><path fill="#df7" d="M13 0h1v1h-1zM18 11h1v1h-1zM30 18h1v1h-1zM55 18h1v1h-1zM9 20h1v1h-1zM33 21h1v1h-1zM45 23h1v1h-1zM46 25h1v1h-1zM13 30h1v1h-1zM14 31h1v1h-1zM32 35h1v1h-1zM62 38h1v1h-1zM44 40h1v1h-1zM35 44h1v1h-1zM59 50h1v1h-1zM58 55h1v1h-1zM49 62h1v1h-1z"/><path fill="#cfa" d="M14 0h1v1h-1z"/><path fill="#ef9" d="M15 0h1v1h-1zM53 19h1v1h-1zM37 32h1v1h-1zM23 46h1v1h-1zM52 55h1v1h-1zM6 58h1v1h-1z"/><path fill="#7f5" d="M16 0h1v1h-1zM55 2h1v1h-1zM59 2h1v1h-1zM10 5h1v1h-1zM68 6h1v1h-1zM7 7h1v1h-1zM52 7h1v1h-1zM54 8h1v1h-1zM55 10h1v1h-1zM61 10h1v1h-1zM49 11h1v1h-1zM58 11h1v1h-1zM53 12h1v1h-1zM16 13h1v1h-1zM39 14h1v1h-1zM30 15h1v1h-1zM18 16h1v1h-1zM33 16h2v1h-2zM31 17h1v1h-1zM52 18h1v1h-1zM11 19h1v1h-1zM8 21h1v1h-1zM22 21h1v1h-1zM66 21h1v1h-1zM11 22h1v1h-1zM36 22h1v1h-1zM40 24h1v1h-1zM14 26h1v1h-1zM31 26h2v1h-2zM47 27h1v1h-1zM31 30h1v1h-1zM39 30h1v1h-1zM26 31h1v1h-1zM32 32h1v1h-1zM40 33h1v1h-1zM31 35h1v1h-1zM38 35h1v1h-1zM10 37h1v1h-1zM2 38h1v1h-1zM24 38h1v1h-1zM34 38h1v1h-1zM51 39h1v1h-1zM22 41h1v1h-1zM21 43h1v1h-1zM40 43h1v1h-1zM64 46h1v1h-1zM35 48h1v1h-1zM60 48h1v1h-1zM17 49h1v1h-1zM60 49h1v1h-1zM23 50h1v1h-1zM68 54h1v1h-1zM13 56h1v1h-1zM60 56h1v1h-1zM47 57h1v1h-1zM30 58h1v1h-1zM54 58h1v1h-1zM56 58h1v1h-1zM47 59h1v1h-1zM47 60h1v1h-1z"/><path fill="#5d3" d="M17 0h1v1h-1zM24 3h1v1h-1zM64 3h1v1h-1zM42 6h1v1h-1zM60 6h1v1h-1zM64 8h1v1h-1zM18 9h1v1h-1zM49 9h1v1h-1zM24 11h1v1h-1zM46 11h1v1h-1zM3 12h1v1h-1zM15 12h1v1h-1zM48 14h1v1h-1zM18 15h1v1h-1zM14 17h1v1h-1zM6 18h1v1h-1zM8 19h1v1h-1zM15 19h1v1h-1zM42 19h1v1h-1zM59 19h1v1h-1zM3 20h1v1h-1zM7 23h1v1h-1zM17 24h1v1h-1zM19 25h1v1h-1zM26 25h1v1h-1zM37 30h1v1h-1zM32 31h1v1h-1zM69 31h1v1h-1zM7 34h1v1h-1zM30 34h1v1h-1zM0 35h1v1h-1zM59 35h1v1h-1zM14 37h1v1h-1zM36 37h1v1h-1zM44 37h1v1h-1zM8 38h1v1h-1zM14 39h1v1h-1zM32 39h1v1h-1zM48 43h1v1h-1zM68 43h1v1h-1zM4 47h1v1h-1zM13 49h1v1h-1zM21 51h1v1h-1zM9 54h1v1h-1zM67 55h1v1h-1zM44 56h1v1h-1zM17 57h1v1h-1zM33 58h1v1h-1zM32 61h1v1h-1z"/><path fill="#252" d="M18 0h1v1h-1zM25 8h1v1h-1zM64 15h1v1h-1zM0 20h1v1h-1zM4 27h1v1h-1zM45 31h1v1h-1zM42 34h1v1h-1zM31 38h1v1h-1zM58 39h1v1h-1z"/><path fill="#151" d="M19 0h1v1h-1zM56 1h1v1h-1zM19 2h1v1h-1zM18 3h2v1h-2zM58 7h1v1h-1zM11 11h1v1h-1zM67 11h1v1h-1zM43 13h1v1h-1zM67 14h1v1h-1zM61 15h1v1h-1zM13 23h1v1h-1zM66 24h1v1h-1zM59 26h1v1h-1zM52 27h1v1h-1zM46 34h1v1h-1zM46 35h1v1h-1zM49 35h1v1h-1zM51 45h1v1h-1zM33 54h1v1h-1zM22 55h1v1h-1z"/><path fill="#251" d="M20 0h1v1h-1zM19 1h1v1h-1zM6 2h1v1h-1zM20 2h1v1h-1zM5 3h1v1h-1zM57 6h1v1h-1zM44 10h1v1h-1zM68 10h1v1h-1zM45 11h1v1h-1zM42 12h2v1h-2zM1 13h1v1h-1zM63 14h1v1h-1zM8 24h1v1h-1zM4 26h1v1h-1zM18 26h1v1h-1zM60 26h1v1h-1zM55 27h1v1h-1zM53 28h1v1h-1zM56 30h1v1h-1zM11 33h1v1h-1zM42 35h1v1h-1zM50 37h1v1h-1zM31 39h1v1h-1zM57 39h1v1h-1zM56 40h1v1h-1zM54 41h1v1h-1zM57 43h1v1h-1zM51 44h1v1h-1zM50 45h1v1h-1zM53 48h1v1h-1zM53 49h1v1h-1zM6 53h1v1h-1zM21 54h1v1h-1zM23 56h1v1h-1zM41 56h1v1h-1zM10 59h1v1h-1zM3 61h1v1h-1zM12 61h1v1h-1zM2 62h1v1h-1zM36 63h1v1h-1z"/><path fill="#121" d="M21 0h1v1h-1zM57 0h1v1h-1zM25 4h1v1h-1zM21 6h1v1h-1zM23 6h1v1h-1zM13 7h1v1h-1zM17 7h1v1h-1zM23 7h1v1h-1zM25 7h1v1h-1zM65 10h1v1h-1zM67 10h1v1h-1zM13 11h1v1h-1zM43 11h1v1h-1zM0 13h1v1h-1zM63 13h1v1h-1zM67 24h3v1h-3zM55 26h1v1h-1zM66 26h2v1h-2zM58 28h1v1h-1zM59 29h1v1h-1zM46 30h1v1h-1zM61 30h1v1h-1zM46 31h1v1h-1zM53 31h1v1h-1zM59 31h1v1h-1zM53 32h1v1h-1zM53 33h1v1h-1zM48 35h1v1h-1zM30 39h1v1h-1zM28 40h2v1h-2zM58 40h1v1h-1zM30 41h1v1h-1zM57 41h1v1h-1zM56 42h1v1h-1zM54 43h1v1h-1zM50 44h1v1h-1zM39 52h1v1h-1zM36 53h1v1h-1zM38 54h1v1h-1zM35 55h1v1h-1zM42 55h1v1h-1zM20 56h1v1h-1zM10 58h1v1h-1zM12 60h1v1h-1zM35 62h1v1h-1zM33 63h1v1h-1z"/><path fill="#4a3" d="M22 0h1v1h-1zM26 16h1v1h-1zM43 16h1v1h-1zM62 18h1v1h-1zM52 26h1v1h-1zM68 28h1v1h-1zM54 31h1v1h-1zM23 33h1v1h-1zM28 34h1v1h-1zM41 35h1v1h-1zM29 36h1v1h-1zM20 37h1v1h-1zM66 44h1v1h-1zM15 48h1v1h-1zM8 52h1v1h-1zM11 53h1v1h-1zM66 55h1v1h-1zM36 56h1v1h-1zM19 59h1v1h-1z"/><path fill="#3d4" d="M23 0h1v1h-1zM64 9h1v1h-1zM65 30h1v1h-1zM18 32h1v1h-1zM13 38h1v1h-1zM63 55h1v1h-1zM33 60h1v1h-1z"/><path fill="#af7" d="M24 0h1v1h-1zM44 3h1v1h-1zM34 6h1v1h-1zM24 27h1v1h-1zM14 29h1v1h-1zM66 33h1v1h-1zM37 45h1v1h-1zM25 46h1v1h-1zM37 47h1v1h-1zM62 49h1v1h-1zM16 52h1v1h-1zM23 53h1v1h-1z"/><path fill="#6e3" d="M26 0h1v1h-1zM33 0h1v1h-1zM42 1h1v1h-1zM40 4h1v1h-1zM8 5h1v1h-1zM44 5h1v1h-1zM29 6h1v1h-1zM47 6h1v1h-1zM46 7h1v1h-1zM57 10h1v1h-1zM52 13h1v1h-1zM49 15h1v1h-1zM10 16h1v1h-1zM56 16h1v1h-1zM4 20h1v1h-1zM48 20h1v1h-1zM67 20h1v1h-1zM69 21h1v1h-1zM3 22h1v1h-1zM28 25h1v1h-1zM40 28h1v1h-1zM32 29h1v1h-1zM25 30h1v1h-1zM20 32h1v1h-1zM68 32h1v1h-1zM13 33h1v1h-1zM61 33h1v1h-1zM61 35h1v1h-1zM14 36h1v1h-1zM62 36h1v1h-1zM65 36h1v1h-1zM66 37h1v1h-1zM39 38h1v1h-1zM0 39h1v1h-1zM19 39h1v1h-1zM35 39h1v1h-1zM48 40h1v1h-1zM51 41h1v1h-1zM41 42h1v1h-1zM22 45h2v1h-2zM7 46h1v1h-1zM9 46h1v1h-1zM19 46h1v1h-1zM29 46h1v1h-1zM2 47h1v1h-1zM9 47h1v1h-1zM15 50h1v1h-1zM25 51h1v1h-1zM45 51h1v1h-1zM19 52h1v1h-1zM0 53h1v1h-1zM6 54h1v1h-1zM67 54h1v1h-1zM14 56h1v1h-1zM45 58h1v1h-1zM2 59h1v1h-1zM24 59h1v1h-1zM7 62h1v1h-1z"/><path fill="#4c2" d="M27 0h1v1h-1zM9 1h1v1h-1zM17 1h1v1h-1zM36 3h1v1h-1zM6 4h1v1h-1zM67 4h1v1h-1zM49 5h1v1h-1zM11 6h1v1h-1zM40 6h1v1h-1zM1 9h1v1h-1zM26 9h1v1h-1zM10 13h1v1h-1zM13 13h2v1h-2zM59 13h1v1h-1zM44 14h1v1h-1zM45 15h1v1h-1zM47 15h1v1h-1zM58 18h1v1h-1zM13 19h1v1h-1zM4 24h1v1h-1zM8 26h1v1h-1zM27 28h1v1h-1zM55 28h1v1h-1zM56 29h1v1h-1zM21 34h1v1h-1zM13 35h1v1h-1zM30 35h1v1h-1zM24 36h1v1h-1zM46 36h1v1h-1zM27 39h1v1h-1zM40 39h1v1h-1zM6 40h1v1h-1zM62 41h1v1h-1zM29 43h1v1h-1zM39 43h1v1h-1zM42 44h1v1h-1zM12 46h1v1h-1zM18 46h1v1h-1zM59 47h1v1h-1zM55 50h1v1h-1zM12 52h1v1h-1zM32 52h1v1h-1zM3 53h1v1h-1zM69 53h1v1h-1zM15 61h1v1h-1zM53 61h1v1h-1zM66 61h1v1h-1z"/><path fill="#4d3" d="M28 0h1v1h-1zM26 1h1v1h-1zM55 1h1v1h-1zM61 4h1v1h-1zM3 5h1v1h-1zM6 5h1v1h-1zM56 5h1v1h-1zM64 6h1v1h-1zM60 7h1v1h-1zM48 8h1v1h-1zM52 10h1v1h-1zM35 12h1v1h-1zM38 12h1v1h-1zM17 15h1v1h-1zM27 17h3v1h-3zM16 18h2v1h-2zM61 18h1v1h-1zM8 22h1v1h-1zM65 22h1v1h-1zM38 25h1v1h-1zM53 25h1v1h-1zM16 26h1v1h-1zM41 27h1v1h-1zM0 28h1v1h-1zM38 28h1v1h-1zM54 28h1v1h-1zM2 29h1v1h-1zM17 29h1v1h-1zM8 32h1v1h-1zM55 32h1v1h-1zM20 33h1v1h-1zM29 33h1v1h-1zM57 33h1v1h-1zM22 35h1v1h-1zM62 35h1v1h-1zM67 39h1v1h-1zM38 40h1v1h-1zM62 40h1v1h-1zM21 41h1v1h-1zM1 42h1v1h-1zM65 42h1v1h-1zM66 43h1v1h-1zM28 44h1v1h-1zM11 46h1v1h-1zM43 46h1v1h-1zM11 47h1v1h-1zM17 47h2v1h-2zM27 49h1v1h-1zM14 50h1v1h-1zM3 52h1v1h-1zM19 53h1v1h-1zM66 54h1v1h-1zM4 55h2v1h-2zM3 56h1v1h-1zM32 59h1v1h-1zM5 62h1v1h-1zM44 62h1v1h-1z"/><path fill="#8f6" d="M29 0h1v1h-1zM44 0h1v1h-1zM64 1h1v1h-1zM32 6h1v1h-1zM62 9h1v1h-1zM59 10h1v1h-1zM29 13h1v1h-1zM38 16h1v1h-1zM64 18h1v1h-1zM26 20h1v1h-1zM31 21h1v1h-1zM52 21h1v1h-1zM21 25h1v1h-1zM5 30h1v1h-1zM23 30h1v1h-1zM2 32h1v1h-1zM40 32h1v1h-1zM66 32h1v1h-1zM69 32h1v1h-1zM16 39h2v1h-2zM69 39h1v1h-1zM43 41h1v1h-1zM60 44h1v1h-1zM11 45h1v1h-1zM37 46h1v1h-1zM31 47h1v1h-1zM5 51h1v1h-1zM16 53h1v1h-1zM48 55h1v1h-1zM68 55h1v1h-1zM62 56h1v1h-1zM31 57h1v1h-1zM69 57h1v1h-1zM57 58h1v1h-1zM25 61h1v1h-1zM17 62h1v1h-1zM40 63h1v1h-1z"/><path fill="#bf6" d="M30 0h1v1h-1zM8 7h1v1h-1zM36 11h1v1h-1zM19 12h1v1h-1zM53 17h1v1h-1zM38 18h1v1h-1zM56 18h1v1h-1zM10 22h1v1h-1zM59 23h1v1h-1zM21 26h1v1h-1zM24 26h1v1h-1zM14 28h1v1h-1zM22 28h1v1h-1zM6 30h1v1h-1zM20 30h1v1h-1zM69 34h1v1h-1zM61 36h1v1h-1zM58 37h1v1h-1zM45 39h1v1h-1zM14 42h1v1h-1zM34 42h1v1h-1zM4 43h1v1h-1zM34 43h1v1h-1zM25 44h1v1h-1zM32 46h1v1h-1zM7 48h1v1h-1zM7 49h1v1h-1zM8 50h1v1h-1zM29 51h1v1h-1zM17 52h1v1h-1zM26 55h1v1h-1zM52 56h1v1h-1zM56 57h1v1h-1zM58 57h1v1h-1zM68 57h1v1h-1zM21 63h1v1h-1z"/><path fill="#7f6" d="M31 0h1v1h-1zM27 18h1v1h-1zM21 21h1v1h-1zM25 26h1v1h-1zM22 29h1v1h-1zM2 42h2v1h-2zM30 54h1v1h-1zM13 55h1v1h-1zM4 56h1v1h-1zM19 61h1v1h-1z"/><path fill="#8e3" d="M32 0h1v1h-1zM52 0h1v1h-1zM51 1h1v1h-1zM33 2h1v1h-1zM55 6h1v1h-1zM7 10h1v1h-1zM51 12h1v1h-1zM6 13h1v1h-1zM39 15h1v1h-1zM32 19h1v1h-1zM69 19h1v1h-1zM57 21h1v1h-1zM41 24h1v1h-1zM32 27h1v1h-1zM48 36h1v1h-1zM56 37h1v1h-1zM16 38h1v1h-1zM24 40h1v1h-1zM46 40h1v1h-1zM6 42h1v1h-1zM46 42h1v1h-1zM0 44h1v1h-1zM10 44h1v1h-1zM27 44h1v1h-1zM30 50h1v1h-1zM55 52h1v1h-1zM58 52h1v1h-1zM27 55h1v1h-1zM0 57h1v1h-1zM13 57h1v1h-1zM20 63h1v1h-1z"/><path fill="#4a2" d="M34 0h1v1h-1zM65 3h1v1h-1zM66 4h1v1h-1zM18 8h1v1h-1zM50 9h1v1h-1zM14 11h1v1h-1zM61 12h1v1h-1zM5 24h1v1h-1zM8 27h1v1h-1zM66 29h1v1h-1zM35 31h1v1h-1zM56 31h1v1h-1zM65 31h1v1h-1zM20 36h1v1h-1zM21 37h1v1h-1zM15 45h1v1h-1zM57 46h1v1h-1zM26 50h1v1h-1zM68 52h1v1h-1zM7 53h1v1h-1zM33 56h1v1h-1zM43 60h1v1h-1zM54 60h1v1h-1zM66 60h1v1h-1zM34 61h1v1h-1zM43 61h1v1h-1z"/><path fill="#241" d="M36 0h1v1h-1zM6 1h1v1h-1zM36 1h1v1h-1zM12 7h1v1h-1zM12 8h1v1h-1zM58 26h1v1h-1zM61 27h1v1h-1zM28 38h1v1h-1zM52 42h1v1h-1zM49 47h1v1h-1zM51 48h1v1h-1zM39 54h1v1h-1zM65 56h1v1h-1zM22 57h1v1h-1zM10 62h1v1h-1z"/><path fill="#382" d="M40 0h1v1h-1zM5 2h1v1h-1zM37 2h1v1h-1zM13 4h1v1h-1zM29 5h1v1h-1zM58 5h1v1h-1zM2 6h1v1h-1zM0 8h1v1h-1zM11 9h1v1h-1zM10 11h1v1h-1zM37 13h1v1h-1zM60 13h1v1h-1zM12 17h1v1h-1zM61 17h1v1h-1zM23 18h1v1h-1zM64 27h1v1h-1zM34 28h1v1h-1zM34 31h1v1h-1zM11 32h1v1h-1zM27 34h1v1h-1zM23 35h1v1h-1zM28 36h1v1h-1zM1 37h1v1h-1zM43 44h1v1h-1zM68 44h2v1h-2zM47 46h1v1h-1zM17 54h1v1h-1zM13 58h1v1h-1zM65 58h1v1h-1zM14 59h1v1h-1zM64 59h1v1h-1z"/><path fill="#5e4" d="M43 0h1v1h-1zM16 1h1v1h-1zM61 1h1v1h-1zM0 3h1v1h-1zM34 3h1v1h-1zM2 4h1v1h-1zM48 4h1v1h-1zM37 5h1v1h-1zM66 8h1v1h-1zM3 9h1v1h-1zM63 9h1v1h-1zM17 10h1v1h-1zM29 14h1v1h-1zM21 16h1v1h-1zM66 17h1v1h-1zM46 18h1v1h-1zM5 19h1v1h-1zM56 23h1v1h-1zM49 25h1v1h-1zM2 26h1v1h-1zM11 28h1v1h-1zM26 28h1v1h-1zM28 28h1v1h-1zM16 29h1v1h-1zM18 29h1v1h-1zM27 29h1v1h-1zM0 30h1v1h-1zM4 30h1v1h-1zM0 32h1v1h-1zM17 32h1v1h-1zM33 32h1v1h-1zM2 33h1v1h-1zM11 36h1v1h-1zM68 36h1v1h-1zM24 37h1v1h-1zM41 37h2v1h-2zM52 38h2v1h-2zM33 39h1v1h-1zM5 41h1v1h-1zM33 41h1v1h-1zM49 41h2v1h-2zM0 42h1v1h-1zM60 43h1v1h-1zM2 44h2v1h-2zM5 44h1v1h-1zM39 44h1v1h-1zM16 45h1v1h-1zM12 48h1v1h-1zM47 48h1v1h-1zM68 48h2v1h-2zM28 49h1v1h-1zM48 49h1v1h-1zM68 50h1v1h-1zM55 51h1v1h-1zM20 52h1v1h-1zM63 52h1v1h-1zM1 54h1v1h-1zM10 54h1v1h-1zM1 55h1v1h-1zM26 58h1v1h-1zM44 58h1v1h-1zM5 60h1v1h-1zM30 60h1v1h-1zM6 62h1v1h-1zM38 62h1v1h-1zM8 63h1v1h-1zM67 63h1v1h-1z"/><path fill="#9e3" d="M45 0h1v1h-1zM32 3h1v1h-1zM7 9h1v1h-1zM50 12h1v1h-1zM24 14h1v1h-1zM53 16h1v1h-1zM21 17h1v1h-1zM50 19h1v1h-1zM35 21h1v1h-1zM12 31h1v1h-1zM62 37h1v1h-1zM18 41h1v1h-1zM40 42h1v1h-1zM61 45h1v1h-1zM54 46h1v1h-1zM39 48h1v1h-1zM10 49h1v1h-1zM41 51h1v1h-1z"/><path fill="#7f2" d="M46 0h1v1h-1zM59 3h1v1h-1zM38 4h1v1h-1zM35 5h1v1h-1zM37 11h1v1h-1zM16 17h1v1h-1zM9 18h1v1h-1zM60 21h1v1h-1zM63 23h1v1h-1zM36 24h1v1h-1zM35 25h1v1h-1zM45 28h1v1h-1zM10 29h1v1h-1zM2 30h1v1h-1zM31 31h1v1h-1zM56 32h1v1h-1zM25 36h1v1h-1zM65 38h1v1h-1zM4 39h1v1h-1zM10 40h1v1h-1zM61 40h1v1h-1zM1 41h1v1h-1zM7 42h1v1h-1zM19 42h1v1h-1zM2 45h1v1h-1zM30 45h1v1h-1zM41 45h1v1h-1zM46 49h1v1h-1zM65 49h1v1h-1zM12 57h1v1h-1zM3 58h1v1h-1zM45 60h1v1h-1zM49 60h1v1h-1zM59 61h1v1h-1zM52 62h1v1h-1z"/><path fill="#8f5" d="M47 0h1v1h-1zM24 1h1v1h-1zM42 3h1v1h-1zM60 3h1v1h-1zM43 5h1v1h-1zM53 7h1v1h-1zM29 8h1v1h-1zM37 9h1v1h-1zM40 11h1v1h-1zM54 12h1v1h-1zM34 14h1v1h-1zM32 16h1v1h-1zM52 17h1v1h-1zM44 18h1v1h-1zM50 18h1v1h-1zM65 18h1v1h-1zM45 19h1v1h-1zM68 20h1v1h-1zM55 21h1v1h-1zM28 22h1v1h-1zM54 22h1v1h-1zM63 22h1v1h-1zM41 23h1v1h-1zM44 27h1v1h-1zM23 28h1v1h-1zM31 28h1v1h-1zM42 29h1v1h-1zM28 30h1v1h-1zM37 31h2v1h-2zM5 33h1v1h-1zM38 34h1v1h-1zM19 35h1v1h-1zM25 39h1v1h-1zM0 41h1v1h-1zM14 43h1v1h-1zM25 45h1v1h-1zM61 46h1v1h-1zM38 49h1v1h-1zM2 50h1v1h-1zM44 50h1v1h-1zM57 51h1v1h-1zM29 53h1v1h-1zM31 53h1v1h-1zM60 53h1v1h-1zM14 54h1v1h-1zM69 54h1v1h-1zM28 55h2v1h-2zM2 58h1v1h-1zM58 59h1v1h-1zM69 59h1v1h-1zM21 62h1v1h-1zM56 62h1v1h-1z"/><path fill="#8f2" d="M49 0h1v1h-1zM12 2h1v1h-1zM43 2h1v1h-1zM49 2h1v1h-1zM41 3h1v1h-1zM0 5h1v1h-1zM36 5h1v1h-1zM53 5h1v1h-1zM55 7h1v1h-1zM8 11h1v1h-1zM39 11h1v1h-1zM8 12h1v1h-1zM28 13h1v1h-1zM40 14h2v1h-2zM29 22h1v1h-1zM30 23h1v1h-1zM58 23h1v1h-1zM51 24h1v1h-1zM19 29h1v1h-1zM5 32h1v1h-1zM6 35h1v1h-1zM5 38h1v1h-1zM7 43h1v1h-1zM62 43h1v1h-1zM60 45h1v1h-1zM66 49h1v1h-1zM29 52h1v1h-1zM0 56h1v1h-1zM4 59h1v1h-1zM58 61h1v1h-1z"/><path fill="#6d3" d="M50 0h1v1h-1zM8 4h1v1h-1zM30 4h1v1h-1zM28 6h1v1h-1zM34 12h1v1h-1zM59 12h1v1h-1zM32 30h1v1h-1zM38 46h1v1h-1zM37 56h2v1h-2zM23 60h1v1h-1z"/><path fill="#8f3" d="M51 0h1v1h-1zM53 1h1v1h-1zM58 2h1v1h-1zM50 3h1v1h-1zM53 3h1v1h-1zM46 5h1v1h-1zM36 7h1v1h-1zM28 10h1v1h-1zM40 10h1v1h-1zM19 13h1v1h-1zM24 13h1v1h-1zM27 13h1v1h-1zM9 16h1v1h-1zM20 17h1v1h-1zM40 17h1v1h-1zM51 17h1v1h-1zM10 18h1v1h-1zM57 19h1v1h-1zM31 20h1v1h-1zM47 21h1v1h-1zM37 22h1v1h-1zM54 23h1v1h-1zM29 24h1v1h-1zM38 24h1v1h-1zM30 27h1v1h-1zM43 27h1v1h-1zM46 27h1v1h-1zM15 30h1v1h-1zM19 30h1v1h-1zM20 31h1v1h-1zM65 32h1v1h-1zM4 33h1v1h-1zM16 33h1v1h-1zM36 34h1v1h-1zM39 34h1v1h-1zM1 35h1v1h-1zM69 35h1v1h-1zM46 38h2v1h-2zM43 39h1v1h-1zM24 41h1v1h-1zM37 41h1v1h-1zM36 42h1v1h-1zM44 43h1v1h-1zM26 44h1v1h-1zM65 44h1v1h-1zM65 45h1v1h-1zM36 48h1v1h-1zM9 49h1v1h-1zM41 49h1v1h-1zM58 51h1v1h-1zM14 52h1v1h-1zM22 52h1v1h-1zM60 52h1v1h-1zM50 54h1v1h-1zM24 55h1v1h-1zM30 56h1v1h-1zM46 58h1v1h-1zM8 59h2v1h-2zM28 59h1v1h-1zM8 60h1v1h-1zM30 61h1v1h-1zM66 63h1v1h-1z"/><path fill="#be5" d="M53 0h1v1h-1zM28 9h1v1h-1zM59 37h1v1h-1zM23 52h1v1h-1zM49 52h1v1h-1zM25 60h1v1h-1z"/><path fill="#9e4" d="M54 0h1v1h-1zM30 1h1v1h-1zM52 6h1v1h-1zM38 10h1v1h-1zM31 11h1v1h-1zM56 13h1v1h-1zM10 15h1v1h-1zM52 15h1v1h-1zM16 16h1v1h-1zM40 21h1v1h-1zM24 22h1v1h-1zM62 22h1v1h-1zM37 23h1v1h-1zM49 26h1v1h-1zM0 27h1v1h-1zM2 31h1v1h-1zM18 37h1v1h-1zM61 53h1v1h-1zM1 59h1v1h-1z"/><path fill="#6d2" d="M55 0h1v1h-1zM10 1h1v1h-1zM44 6h1v1h-1zM47 11h1v1h-1zM47 36h1v1h-1zM39 40h1v1h-1zM68 42h1v1h-1zM58 44h1v1h-1zM63 50h1v1h-1zM63 51h1v1h-1zM62 54h1v1h-1zM37 60h1v1h-1zM60 60h1v1h-1z"/><path fill="#131" d="M56 0h1v1h-1zM21 1h1v1h-1zM26 2h1v1h-1zM27 3h1v1h-1zM15 4h1v1h-1zM24 4h1v1h-1zM26 4h2v1h-2zM25 5h1v1h-1zM13 6h1v1h-1zM18 6h1v1h-1zM22 6h1v1h-1zM24 7h1v1h-1zM57 7h1v1h-1zM24 8h1v1h-1zM57 8h1v1h-1zM12 9h1v1h-1zM56 9h1v1h-1zM11 10h1v1h-1zM43 10h1v1h-1zM66 10h1v1h-1zM12 11h1v1h-1zM44 11h1v1h-1zM66 11h1v1h-1zM0 12h1v1h-1zM63 12h1v1h-1zM66 12h1v1h-1zM69 13h1v1h-1zM64 14h1v1h-1zM58 15h3v1h-3zM65 15h1v1h-1zM0 16h1v1h-1zM1 17h1v1h-1zM0 18h1v1h-1zM0 21h1v1h-1zM7 25h1v1h-1zM66 25h1v1h-1zM57 26h1v1h-1zM61 26h1v1h-1zM69 26h1v1h-1zM54 27h1v1h-1zM58 27h1v1h-1zM62 27h1v1h-1zM67 27h2v1h-2zM49 28h1v1h-1zM60 28h1v1h-1zM53 29h1v1h-1zM58 29h1v1h-1zM61 29h1v1h-1zM58 31h1v1h-1zM45 32h1v1h-1zM49 34h1v1h-1zM53 36h1v1h-1zM51 37h2v1h-2zM29 39h1v1h-1zM28 41h2v1h-2zM55 41h1v1h-1zM55 42h1v1h-1zM56 43h1v1h-1zM49 46h1v1h-1zM51 50h1v1h-1zM50 51h1v1h-1zM35 53h1v1h-1zM39 53h1v1h-1zM20 54h1v1h-1zM34 54h1v1h-1zM43 54h1v1h-1zM22 56h1v1h-1zM40 56h1v1h-1zM19 57h1v1h-1zM11 58h1v1h-1zM20 59h1v1h-1zM13 60h1v1h-1zM32 63h1v1h-1z"/><path fill="#4c1" d="M58 0h1v1h-1zM31 4h1v1h-1zM38 7h2v1h-2zM1 8h1v1h-1zM48 9h1v1h-1zM50 10h1v1h-1zM12 13h1v1h-1zM46 13h1v1h-1zM42 17h1v1h-1zM1 22h1v1h-1zM10 27h1v1h-1zM50 27h1v1h-1zM36 29h1v1h-1zM40 30h1v1h-1zM67 30h1v1h-1zM20 40h1v1h-1zM39 42h1v1h-1zM69 42h1v1h-1zM38 47h1v1h-1zM66 53h1v1h-1zM41 58h1v1h-1zM63 59h1v1h-1zM16 60h1v1h-1z"/><path fill="#5e3" d="M59 0h1v1h-1zM69 0h1v1h-1zM13 3h1v1h-1zM25 3h1v1h-1zM61 6h1v1h-1zM3 8h1v1h-1zM47 9h1v1h-1zM47 10h1v1h-1zM5 11h1v1h-1zM22 11h1v1h-1zM61 11h1v1h-1zM51 13h1v1h-1zM2 14h1v1h-1zM6 16h1v1h-1zM20 16h1v1h-1zM6 17h1v1h-1zM19 17h1v1h-1zM63 18h1v1h-1zM43 19h1v1h-1zM17 20h1v1h-1zM49 20h1v1h-1zM2 21h1v1h-1zM13 21h1v1h-1zM51 21h1v1h-1zM30 25h1v1h-1zM40 25h1v1h-1zM0 29h1v1h-1zM28 29h1v1h-1zM36 30h1v1h-1zM42 31h1v1h-1zM27 32h1v1h-1zM42 32h1v1h-1zM17 33h1v1h-1zM64 33h1v1h-1zM2 34h1v1h-1zM19 36h1v1h-1zM36 36h1v1h-1zM38 36h1v1h-1zM10 38h1v1h-1zM38 38h1v1h-1zM49 39h1v1h-1zM32 40h1v1h-1zM50 40h1v1h-1zM65 43h1v1h-1zM18 44h3v1h-3zM19 47h1v1h-1zM34 47h1v1h-1zM68 47h1v1h-1zM2 48h1v1h-1zM16 48h1v1h-1zM66 48h1v1h-1zM16 49h1v1h-1zM56 49h1v1h-1zM59 49h1v1h-1zM28 50h1v1h-1zM42 50h1v1h-1zM39 51h1v1h-1zM21 52h1v1h-1zM9 56h1v1h-1zM15 56h1v1h-1zM28 56h1v1h-1zM9 57h1v1h-1zM18 58h1v1h-1zM61 58h1v1h-1zM45 59h1v1h-1zM65 61h1v1h-1zM29 63h1v1h-1z"/><path fill="#4e4" d="M60 0h1v1h-1zM30 2h1v1h-1zM38 3h1v1h-1zM36 4h1v1h-1zM48 5h1v1h-1zM68 5h2v1h-2zM10 6h1v1h-1zM62 6h1v1h-1zM45 7h1v1h-1zM46 10h1v1h-1zM57 11h1v1h-1zM31 14h1v1h-1zM50 14h1v1h-1zM14 15h1v1h-1zM57 15h1v1h-1zM4 18h1v1h-1zM62 19h1v1h-1zM31 24h1v1h-1zM53 24h1v1h-1zM49 27h1v1h-1zM25 28h1v1h-1zM29 28h1v1h-1zM5 29h1v1h-1zM41 33h1v1h-1zM6 34h1v1h-1zM60 34h1v1h-1zM41 36h1v1h-1zM35 38h1v1h-1zM54 38h1v1h-1zM8 39h1v1h-1zM41 39h1v1h-1zM50 39h1v1h-1zM13 40h1v1h-1zM63 42h2v1h-2zM69 43h1v1h-1zM55 47h1v1h-1zM53 52h1v1h-1zM13 53h1v1h-1zM31 59h1v1h-1zM67 59h1v1h-1zM15 62h1v1h-1z"/><path fill="#5f5" d="M61 0h1v1h-1zM68 0h1v1h-1zM32 2h1v1h-1zM40 3h1v1h-1zM58 3h1v1h-1zM37 6h1v1h-1zM8 8h1v1h-1zM55 8h1v1h-1zM53 10h1v1h-1zM52 12h1v1h-1zM13 14h1v1h-1zM41 15h1v1h-1zM7 20h1v1h-1zM51 23h1v1h-1zM32 28h1v1h-1zM41 28h1v1h-1zM38 30h1v1h-1zM47 41h1v1h-1zM67 48h1v1h-1zM17 60h1v1h-1z"/><path fill="#af5" d="M62 0h1v1h-1zM62 8h1v1h-1zM6 9h1v1h-1zM8 9h1v1h-1zM29 9h1v1h-1zM39 9h1v1h-1zM19 11h1v1h-1zM30 13h1v1h-1zM31 16h1v1h-1zM18 17h1v1h-1zM31 18h1v1h-1zM51 20h1v1h-1zM20 22h1v1h-1zM43 24h1v1h-1zM44 26h1v1h-1zM13 28h1v1h-1zM69 33h1v1h-1zM5 36h1v1h-1zM66 36h1v1h-1zM17 38h1v1h-1zM69 38h1v1h-1zM18 39h1v1h-1zM13 42h1v1h-1zM5 43h1v1h-1zM24 43h1v1h-1zM63 49h1v1h-1zM5 50h1v1h-1zM30 51h1v1h-1zM47 52h1v1h-1zM59 56h1v1h-1zM48 58h1v1h-1zM40 59h1v1h-1zM41 60h1v1h-1zM51 62h1v1h-1zM18 63h1v1h-1zM55 63h1v1h-1z"/><path fill="#af4" d="M63 0h2v1h-2zM66 0h1v1h-1zM65 1h1v1h-1zM61 2h1v1h-1zM6 7h1v1h-1zM30 9h1v1h-1zM32 12h1v1h-1zM40 13h1v1h-1zM8 20h1v1h-1zM38 21h1v1h-1zM21 22h1v1h-1zM25 22h1v1h-1zM9 30h1v1h-1zM12 30h1v1h-1zM9 31h1v1h-1zM16 37h1v1h-1zM48 37h1v1h-1zM17 40h1v1h-1zM41 40h1v1h-1zM35 41h1v1h-1zM24 42h1v1h-1zM36 43h1v1h-1zM20 46h1v1h-1zM3 49h1v1h-1zM32 49h1v1h-1zM39 50h1v1h-1zM26 53h1v1h-1zM53 55h1v1h-1zM60 55h1v1h-1zM47 61h1v1h-1z"/><path fill="#bf3" d="M65 0h1v1h-1zM43 4h1v1h-1zM45 4h1v1h-1zM51 5h1v1h-1zM37 10h1v1h-1zM9 17h1v1h-1zM48 17h1v1h-1zM39 20h1v1h-1zM31 32h1v1h-1zM69 37h1v1h-1zM21 42h1v1h-1zM63 46h1v1h-1zM61 49h1v1h-1zM28 54h1v1h-1zM51 56h1v1h-1zM39 60h1v1h-1zM24 63h1v1h-1z"/><path fill="#7e6" d="M67 0h1v1h-1zM4 37h1v1h-1zM29 50h1v1h-1zM61 55h1v1h-1z"/><path fill="#6f2" d="M0 1h1v1h-1zM63 3h1v1h-1zM56 4h1v1h-1zM41 5h1v1h-1zM48 7h1v1h-1zM2 8h1v1h-1zM21 9h1v1h-1zM49 10h1v1h-1zM15 13h1v1h-1zM48 13h1v1h-1zM15 15h1v1h-1zM17 16h1v1h-1zM67 18h1v1h-1zM20 19h1v1h-1zM41 19h1v1h-1zM6 20h1v1h-1zM16 21h1v1h-1zM39 24h1v1h-1zM52 25h1v1h-1zM20 26h1v1h-1zM34 26h1v1h-1zM2 27h1v1h-1zM8 29h1v1h-1zM30 29h1v1h-1zM23 31h1v1h-1zM64 34h1v1h-1zM3 36h1v1h-1zM2 37h1v1h-1zM25 37h1v1h-1zM25 38h1v1h-1zM47 39h1v1h-1zM66 40h1v1h-1zM13 41h1v1h-1zM18 42h1v1h-1zM5 45h1v1h-1zM67 46h1v1h-1zM26 51h1v1h-1zM43 51h1v1h-1zM62 55h1v1h-1zM25 56h1v1h-1zM27 57h1v1h-1zM56 60h1v1h-1zM31 61h1v1h-1zM53 62h1v1h-1z"/><path fill="#8e4" d="M1 1h1v1h-1zM62 1h1v1h-1zM34 5h1v1h-1zM60 11h1v1h-1zM48 16h1v1h-1zM4 17h1v1h-1zM46 26h1v1h-1zM1 27h1v1h-1zM1 33h1v1h-1zM19 33h1v1h-1zM11 37h1v1h-1zM68 39h1v1h-1zM40 40h1v1h-1zM33 42h1v1h-1zM8 49h1v1h-1zM24 49h1v1h-1zM61 51h1v1h-1zM29 54h1v1h-1zM52 54h1v1h-1zM8 56h1v1h-1zM0 59h1v1h-1zM27 59h1v1h-1zM19 60h1v1h-1zM39 61h1v1h-1zM57 61h1v1h-1zM19 62h1v1h-1zM25 63h1v1h-1zM53 63h1v1h-1z"/><path fill="#4e2" d="M3 1h1v1h-1zM29 1h1v1h-1zM33 4h1v1h-1zM7 5h1v1h-1zM48 6h1v1h-1zM63 6h1v1h-1zM41 7h1v1h-1zM55 9h1v1h-1zM48 12h1v1h-1zM41 13h1v1h-1zM8 14h1v1h-1zM57 14h1v1h-1zM3 15h1v1h-1zM68 15h1v1h-1zM14 16h1v1h-1zM57 16h1v1h-1zM7 18h1v1h-1zM7 19h1v1h-1zM12 20h1v1h-1zM69 20h1v1h-1zM12 26h1v1h-1zM2 28h1v1h-1zM30 28h1v1h-1zM33 28h1v1h-1zM43 28h1v1h-1zM40 29h1v1h-1zM55 29h1v1h-1zM43 30h1v1h-1zM26 32h1v1h-1zM5 34h1v1h-1zM32 36h1v1h-1zM49 36h1v1h-1zM51 40h1v1h-1zM68 40h1v1h-1zM12 41h1v1h-1zM0 43h1v1h-1zM6 44h1v1h-1zM6 45h1v1h-1zM19 45h1v1h-1zM2 46h1v1h-1zM12 51h1v1h-1zM42 51h1v1h-1zM1 53h1v1h-1zM52 53h1v1h-1zM1 56h1v1h-1zM67 57h1v1h-1zM44 59h1v1h-1zM61 60h1v1h-1zM67 62h1v1h-1zM14 63h1v1h-1z"/><path fill="#3b2" d="M4 1h1v1h-1zM4 2h1v1h-1zM28 3h1v1h-1zM7 4h1v1h-1zM50 8h1v1h-1zM16 9h2v1h-2zM59 9h1v1h-1zM25 10h1v1h-1zM42 14h1v1h-1zM46 14h1v1h-1zM7 15h1v1h-1zM43 15h1v1h-1zM3 16h1v1h-1zM23 17h1v1h-1zM42 18h1v1h-1zM6 19h1v1h-1zM19 23h1v1h-1zM68 23h2v1h-2zM2 25h1v1h-1zM38 26h1v1h-1zM3 27h1v1h-1zM69 28h1v1h-1zM67 29h1v1h-1zM29 34h1v1h-1zM61 34h1v1h-1zM10 35h1v1h-1zM35 36h1v1h-1zM63 41h1v1h-1zM28 42h1v1h-1zM60 42h1v1h-1zM59 43h1v1h-1zM18 50h1v1h-1zM19 51h1v1h-1zM10 52h1v1h-1zM2 53h1v1h-1zM68 53h1v1h-1zM23 55h1v1h-1zM10 57h1v1h-1zM16 57h1v1h-1zM66 57h1v1h-1zM32 58h1v1h-1zM16 59h1v1h-1zM33 59h1v1h-1zM21 60h1v1h-1zM55 60h1v1h-1zM13 63h1v1h-1z"/><path fill="#371" d="M5 1h1v1h-1zM28 2h1v1h-1zM26 6h1v1h-1zM24 9h1v1h-1zM24 16h1v1h-1zM61 16h1v1h-1zM56 27h1v1h-1zM62 29h1v1h-1zM62 31h1v1h-1zM54 32h1v1h-1zM44 36h1v1h-1zM29 37h1v1h-1zM54 40h1v1h-1zM52 43h1v1h-1zM67 45h1v1h-1zM44 48h1v1h-1zM52 50h1v1h-1zM6 52h1v1h-1zM35 52h1v1h-1zM44 54h1v1h-1zM65 54h1v1h-1zM2 61h1v1h-1zM11 62h1v1h-1z"/><path fill="#362" d="M8 1h1v1h-1zM38 1h1v1h-1zM34 29h1v1h-1zM44 32h1v1h-1zM9 34h1v1h-1zM65 40h1v1h-1zM46 45h1v1h-1zM54 49h1v1h-1zM52 51h1v1h-1zM40 54h1v1h-1zM53 60h1v1h-1zM11 63h1v1h-1z"/><path fill="#ae4" d="M13 1h1v1h-1zM37 20h1v1h-1zM61 52h1v1h-1zM59 62h1v1h-1z"/><path fill="#cf6" d="M14 1h1v1h-1zM46 1h1v1h-1zM8 6h1v1h-1zM67 7h1v1h-1zM7 8h1v1h-1zM21 10h1v1h-1zM27 11h1v1h-1zM56 14h1v1h-1zM38 17h1v1h-1zM53 20h1v1h-1zM9 21h1v1h-1zM44 21h2v1h-2zM5 22h1v1h-1zM32 22h1v1h-1zM60 23h1v1h-1zM22 24h1v1h-1zM7 30h1v1h-1zM10 31h1v1h-1zM32 34h1v1h-1zM6 36h1v1h-1zM43 40h1v1h-1zM17 43h1v1h-1zM34 45h1v1h-1zM4 50h1v1h-1zM26 52h1v1h-1zM50 57h1v1h-1zM54 62h1v1h-1zM17 63h1v1h-1zM54 63h1v1h-1z"/><path fill="#9f5" d="M15 1h1v1h-1zM45 2h1v1h-1zM9 5h1v1h-1zM36 6h1v1h-1zM46 6h1v1h-1zM62 7h1v1h-1zM31 8h1v1h-1zM6 10h1v1h-1zM35 11h1v1h-1zM56 12h1v1h-1zM23 13h1v1h-1zM25 13h1v1h-1zM32 13h1v1h-1zM39 16h1v1h-1zM47 16h1v1h-1zM54 17h1v1h-1zM32 18h1v1h-1zM39 18h1v1h-1zM47 18h1v1h-1zM51 18h1v1h-1zM55 20h1v1h-1zM62 20h1v1h-1zM34 21h1v1h-1zM39 21h1v1h-1zM59 22h1v1h-1zM4 23h1v1h-1zM25 23h1v1h-1zM52 23h1v1h-1zM20 24h1v1h-1zM30 26h1v1h-1zM12 27h1v1h-1zM25 27h1v1h-1zM8 30h1v1h-1zM4 32h1v1h-1zM31 33h1v1h-1zM67 35h1v1h-1zM45 38h1v1h-1zM63 39h1v1h-1zM3 40h1v1h-1zM18 40h1v1h-1zM42 40h1v1h-1zM10 42h1v1h-1zM30 44h1v1h-1zM62 44h1v1h-1zM0 46h1v1h-1zM27 46h1v1h-1zM0 49h1v1h-1zM19 49h1v1h-1zM40 51h1v1h-1zM18 52h1v1h-1zM12 54h1v1h-1zM49 55h1v1h-1zM31 56h1v1h-1zM48 56h3v1h-3zM5 58h1v1h-1zM48 59h1v1h-1zM38 60h1v1h-1z"/><path fill="#3c2" d="M22 1h1v1h-1zM66 2h1v1h-1zM1 3h1v1h-1zM4 6h1v1h-1zM38 6h1v1h-1zM43 6h1v1h-1zM45 9h1v1h-1zM13 12h1v1h-1zM27 16h1v1h-1zM43 17h1v1h-1zM12 19h1v1h-1zM59 20h1v1h-1zM64 23h1v1h-1zM54 24h1v1h-1zM27 25h1v1h-1zM8 28h1v1h-1zM3 29h1v1h-1zM67 31h1v1h-1zM34 35h1v1h-1zM12 37h1v1h-1zM0 38h1v1h-1zM21 38h1v1h-1zM53 41h1v1h-1zM5 47h1v1h-1zM57 48h1v1h-1zM4 52h1v1h-1zM67 53h1v1h-1zM22 54h1v1h-1zM44 57h1v1h-1zM19 58h1v1h-1zM53 59h1v1h-1zM15 60h1v1h-1zM67 60h1v1h-1z"/><path fill="#3d2" d="M23 1h1v1h-1zM1 2h1v1h-1zM68 2h1v1h-1zM32 4h1v1h-1zM63 5h1v1h-1zM8 18h1v1h-1zM60 25h1v1h-1zM41 30h1v1h-1zM66 42h1v1h-1zM8 44h1v1h-1zM17 46h1v1h-1zM52 46h1v1h-1zM57 47h1v1h-1z"/><path fill="#3a2" d="M27 1h1v1h-1zM41 1h1v1h-1zM8 2h1v1h-1zM29 4h1v1h-1zM62 4h1v1h-1zM20 8h1v1h-1zM42 9h1v1h-1zM3 10h1v1h-1zM6 14h1v1h-1zM14 20h1v1h-1zM17 22h1v1h-1zM19 22h1v1h-1zM8 23h1v1h-1zM6 26h1v1h-1zM17 26h1v1h-1zM36 26h1v1h-1zM17 27h1v1h-1zM51 27h1v1h-1zM5 28h1v1h-1zM62 28h1v1h-1zM68 29h1v1h-1zM34 30h1v1h-1zM64 31h1v1h-1zM60 32h1v1h-1zM63 32h1v1h-1zM11 34h1v1h-1zM57 34h2v1h-2zM12 35h1v1h-1zM35 35h1v1h-1zM30 36h1v1h-1zM57 38h1v1h-1zM29 42h1v1h-1zM50 42h2v1h-2zM14 45h1v1h-1zM46 46h1v1h-1zM56 47h1v1h-1zM2 54h1v1h-1zM4 54h1v1h-1zM17 56h1v1h-1zM18 57h1v1h-1zM52 59h1v1h-1zM22 60h1v1h-1zM4 61h1v1h-1zM42 63h1v1h-1z"/><path fill="#4d2" d="M28 1h1v1h-1zM23 2h1v1h-1zM65 2h1v1h-1zM14 3h1v1h-1zM44 8h1v1h-1zM47 8h1v1h-1zM51 8h1v1h-1zM68 8h1v1h-1zM23 11h1v1h-1zM47 12h1v1h-1zM38 14h1v1h-1zM4 19h1v1h-1zM16 19h1v1h-1zM14 21h1v1h-1zM18 25h1v1h-1zM37 25h1v1h-1zM40 26h1v1h-1zM51 26h1v1h-1zM4 29h1v1h-1zM54 29h1v1h-1zM43 32h1v1h-1zM35 34h1v1h-1zM62 34h1v1h-1zM63 35h1v1h-1zM14 38h1v1h-1zM12 39h1v1h-1zM22 40h1v1h-1zM38 41h2v1h-2zM60 41h1v1h-1zM9 42h1v1h-1zM49 42h1v1h-1zM29 44h1v1h-1zM53 46h1v1h-1zM43 47h1v1h-1zM46 48h1v1h-1zM14 49h1v1h-1zM42 49h1v1h-1zM20 51h1v1h-1zM2 52h1v1h-1zM2 56h1v1h-1zM14 57h1v1h-1zM35 59h1v1h-1zM55 61h1v1h-1z"/><path fill="#7f4" d="M31 1h1v1h-1zM63 2h1v1h-1zM43 3h1v1h-1zM27 10h1v1h-1zM4 12h1v1h-1zM41 12h1v1h-1zM9 13h1v1h-1zM20 13h1v1h-1zM53 13h1v1h-1zM51 15h1v1h-1zM50 16h1v1h-1zM8 17h1v1h-1zM40 18h1v1h-1zM38 19h1v1h-1zM43 21h1v1h-1zM64 21h1v1h-1zM22 23h1v1h-1zM62 23h1v1h-1zM33 24h1v1h-1zM48 24h1v1h-1zM50 24h1v1h-1zM39 25h1v1h-1zM20 27h1v1h-1zM31 27h1v1h-1zM9 28h1v1h-1zM65 29h1v1h-1zM7 31h1v1h-1zM3 32h1v1h-1zM7 33h1v1h-1zM34 33h1v1h-1zM31 34h1v1h-1zM9 36h1v1h-1zM49 37h1v1h-1zM55 37h1v1h-1zM67 38h1v1h-1zM3 39h1v1h-1zM8 40h1v1h-1zM34 40h1v1h-1zM4 41h1v1h-1zM23 41h1v1h-1zM15 42h1v1h-1zM26 43h1v1h-1zM42 43h1v1h-1zM23 44h1v1h-1zM17 45h1v1h-1zM65 46h1v1h-1zM8 48h1v1h-1zM40 48h1v1h-1zM11 49h1v1h-1zM39 49h1v1h-1zM45 50h1v1h-1zM6 51h1v1h-1zM14 51h1v1h-1zM46 51h1v1h-1zM22 53h1v1h-1zM46 53h1v1h-1zM69 56h1v1h-1zM60 57h1v1h-1zM8 58h1v1h-1zM40 58h1v1h-1zM67 58h1v1h-1zM30 59h1v1h-1zM62 60h1v1h-1zM29 62h1v1h-1zM6 63h1v1h-1zM39 63h1v1h-1zM61 63h1v1h-1z"/><path fill="#7f3" d="M32 1h1v1h-1zM48 1h1v1h-1zM52 2h1v1h-1zM31 3h1v1h-1zM0 4h1v1h-1zM9 4h1v1h-1zM34 4h2v1h-2zM38 5h1v1h-1zM30 8h1v1h-1zM9 11h1v1h-1zM5 13h1v1h-1zM27 14h1v1h-1zM5 16h1v1h-1zM19 16h1v1h-1zM51 16h2v1h-2zM69 16h1v1h-1zM7 17h1v1h-1zM41 17h1v1h-1zM69 17h1v1h-1zM17 19h1v1h-1zM26 19h1v1h-1zM19 20h1v1h-1zM24 20h1v1h-1zM38 20h1v1h-1zM65 20h1v1h-1zM24 21h1v1h-1zM29 21h1v1h-1zM38 22h1v1h-1zM48 22h1v1h-1zM68 22h1v1h-1zM34 24h1v1h-1zM60 24h1v1h-1zM42 27h1v1h-1zM45 27h1v1h-1zM4 31h1v1h-1zM16 32h1v1h-1zM29 32h1v1h-1zM67 32h1v1h-1zM14 33h1v1h-1zM17 34h1v1h-1zM9 37h1v1h-1zM39 37h1v1h-1zM67 37h1v1h-1zM18 38h1v1h-1zM16 40h1v1h-1zM33 40h1v1h-1zM11 41h1v1h-1zM25 41h1v1h-1zM18 43h1v1h-1zM32 43h1v1h-1zM31 45h1v1h-1zM60 47h2v1h-2zM1 48h1v1h-1zM34 48h1v1h-1zM16 50h1v1h-1zM1 51h1v1h-1zM32 51h1v1h-1zM28 52h1v1h-1zM9 55h1v1h-1zM38 57h1v1h-1zM46 57h1v1h-1zM59 57h1v1h-1zM29 58h1v1h-1zM60 59h1v1h-1zM29 60h1v1h-1zM59 60h1v1h-1zM9 61h1v1h-1zM50 61h1v1h-1zM8 62h1v1h-1zM16 62h1v1h-1zM22 62h1v1h-1zM58 62h1v1h-1z"/><path fill="#9f6" d="M33 1h1v1h-1zM50 2h1v1h-1zM55 5h1v1h-1zM7 6h1v1h-1zM54 6h1v1h-1zM18 13h1v1h-1zM17 17h1v1h-1zM53 18h1v1h-1zM49 19h1v1h-1zM41 20h2v1h-2zM46 20h1v1h-1zM32 23h2v1h-2zM38 23h1v1h-1zM13 31h1v1h-1zM6 32h1v1h-1zM63 37h1v1h-1zM25 43h1v1h-1zM26 45h1v1h-1zM3 46h1v1h-1zM62 46h1v1h-1zM8 47h1v1h-1zM3 48h1v1h-1zM31 49h1v1h-1zM8 51h1v1h-1zM28 51h1v1h-1zM49 54h1v1h-1zM63 62h1v1h-1zM23 63h1v1h-1z"/><path fill="#4b1" d="M34 1h1v1h-1zM58 4h1v1h-1zM15 10h1v1h-1zM24 10h1v1h-1zM62 10h1v1h-1zM39 12h1v1h-1zM58 21h1v1h-1zM40 38h1v1h-1zM27 41h1v1h-1zM31 43h1v1h-1zM15 44h1v1h-1zM44 45h1v1h-1zM13 47h1v1h-1zM40 47h1v1h-1zM32 53h1v1h-1zM16 56h1v1h-1zM24 57h1v1h-1zM14 58h1v1h-1z"/><path fill="#282" d="M35 1h1v1h-1zM7 2h1v1h-1zM22 3h1v1h-1zM3 7h1v1h-1zM44 13h1v1h-1zM24 17h1v1h-1zM12 18h1v1h-1zM3 19h1v1h-1zM10 24h1v1h-1zM11 25h1v1h-1zM54 25h1v1h-1zM58 25h1v1h-1zM7 26h1v1h-1zM5 27h1v1h-1zM7 27h1v1h-1zM57 31h1v1h-1zM56 34h1v1h-1zM27 35h2v1h-2zM1 36h1v1h-1zM28 37h1v1h-1zM59 42h1v1h-1zM15 46h1v1h-1zM65 51h1v1h-1zM5 52h1v1h-1zM40 53h1v1h-1zM65 53h1v1h-1zM3 54h1v1h-1zM10 63h1v1h-1z"/><path fill="#272" d="M37 1h1v1h-1zM5 4h1v1h-1zM12 4h1v1h-1zM28 5h1v1h-1zM12 6h1v1h-1zM56 6h1v1h-1zM17 8h1v1h-1zM43 9h1v1h-1zM45 12h1v1h-1zM62 15h1v1h-1zM58 16h1v1h-1zM2 17h1v1h-1zM25 17h1v1h-1zM1 20h1v1h-1zM12 23h1v1h-1zM14 23h1v1h-1zM9 24h1v1h-1zM18 27h1v1h-1zM65 27h1v1h-1zM66 30h1v1h-1zM8 34h1v1h-1zM54 34h2v1h-2zM0 37h1v1h-1zM6 39h2v1h-2zM50 48h1v1h-1zM7 52h1v1h-1zM65 52h1v1h-1zM34 53h1v1h-1zM38 55h1v1h-1zM41 57h1v1h-1zM13 59h1v1h-1zM65 59h1v1h-1zM2 60h1v1h-1zM10 61h1v1h-1zM13 62h1v1h-1z"/><path fill="#3b1" d="M39 1h1v1h-1zM68 9h1v1h-1zM43 14h1v1h-1zM44 16h1v1h-1zM13 17h1v1h-1zM3 18h1v1h-1zM16 23h1v1h-1zM63 29h1v1h-1zM44 44h1v1h-1zM42 52h1v1h-1zM35 60h1v1h-1zM3 63h1v1h-1z"/><path fill="#3c3" d="M40 1h1v1h-1zM69 3h1v1h-1zM57 4h1v1h-1zM63 4h1v1h-1zM60 12h1v1h-1zM3 13h1v1h-1zM55 24h1v1h-1zM9 26h1v1h-1zM47 28h1v1h-1zM69 29h1v1h-1zM33 30h1v1h-1zM55 30h1v1h-1zM22 32h1v1h-1zM59 32h1v1h-1zM34 36h1v1h-1zM35 37h1v1h-1zM6 38h1v1h-1zM9 44h1v1h-1zM7 45h1v1h-1zM29 47h1v1h-1zM56 48h1v1h-1zM59 48h1v1h-1zM49 49h1v1h-1zM40 52h1v1h-1zM9 53h1v1h-1zM15 59h1v1h-1zM4 60h1v1h-1z"/><path fill="#8e5" d="M44 1h1v1h-1zM54 3h1v1h-1zM41 10h1v1h-1zM17 11h1v1h-1zM13 15h1v1h-1zM66 18h1v1h-1zM24 24h1v1h-1zM31 29h1v1h-1zM33 33h1v1h-1zM65 33h1v1h-1zM18 35h1v1h-1zM23 39h1v1h-1zM16 41h1v1h-1zM33 43h1v1h-1zM34 46h1v1h-1zM55 46h1v1h-1zM3 47h1v1h-1zM47 49h1v1h-1zM60 50h1v1h-1zM23 51h1v1h-1zM15 54h1v1h-1zM25 55h1v1h-1zM12 56h1v1h-1zM26 56h1v1h-1zM46 61h1v1h-1zM65 63h1v1h-1z"/><path fill="#cf4" d="M45 1h1v1h-1zM41 8h1v1h-1zM31 12h1v1h-1zM54 19h1v1h-1zM47 20h1v1h-1zM14 27h1v1h-1zM17 41h1v1h-1zM56 52h1v1h-1z"/><path fill="#cf7" d="M47 1h1v1h-1zM4 8h1v1h-1zM32 10h1v1h-1zM6 12h1v1h-1zM7 13h1v1h-1zM53 15h1v1h-1zM36 17h1v1h-1zM62 21h1v1h-1zM43 22h1v1h-1zM11 30h1v1h-1zM44 39h1v1h-1zM23 43h1v1h-1zM36 45h1v1h-1zM4 49h1v1h-1zM9 51h1v1h-1zM16 63h1v1h-1zM50 63h1v1h-1z"/><path fill="#9f3" d="M52 1h1v1h-1zM60 1h1v1h-1zM66 1h1v1h-1zM39 3h1v1h-1zM44 4h1v1h-1zM47 4h1v1h-1zM52 4h1v1h-1zM42 5h1v1h-1zM50 7h1v1h-1zM54 7h1v1h-1zM32 8h1v1h-1zM37 8h1v1h-1zM38 9h1v1h-1zM54 10h1v1h-1zM60 10h1v1h-1zM27 12h1v1h-1zM8 13h1v1h-1zM26 13h1v1h-1zM33 13h1v1h-1zM22 15h1v1h-1zM36 15h1v1h-1zM35 16h1v1h-1zM49 17h1v1h-1zM21 18h1v1h-1zM29 19h1v1h-1zM39 19h1v1h-1zM43 20h1v1h-1zM52 20h1v1h-1zM11 21h1v1h-1zM36 21h1v1h-1zM42 21h1v1h-1zM2 22h1v1h-1zM35 22h1v1h-1zM39 22h1v1h-1zM16 36h1v1h-1zM3 41h1v1h-1zM15 41h1v1h-1zM27 43h1v1h-1zM8 46h1v1h-1zM0 48h1v1h-1zM69 49h1v1h-1zM56 50h1v1h-1zM56 51h1v1h-1zM14 53h1v1h-1zM28 53h1v1h-1zM56 53h1v1h-1zM0 54h1v1h-1zM46 54h1v1h-1zM7 55h1v1h-1zM50 55h1v1h-1zM56 55h1v1h-1zM30 57h1v1h-1zM62 57h1v1h-1zM24 60h1v1h-1zM7 61h1v1h-1zM55 62h1v1h-1z"/><path fill="#281" d="M57 1h1v1h-1zM14 10h1v1h-1zM63 15h1v1h-1zM64 16h1v1h-1zM59 17h1v1h-1zM13 22h1v1h-1zM11 26h1v1h-1zM53 27h1v1h-1zM54 33h1v1h-1zM65 41h1v1h-1zM44 52h1v1h-1zM23 57h1v1h-1zM12 62h1v1h-1z"/><path fill="#5c3" d="M58 1h1v1h-1zM0 2h1v1h-1zM57 2h1v1h-1zM36 12h1v1h-1zM7 14h1v1h-1zM58 19h1v1h-1zM15 22h1v1h-1zM68 31h1v1h-1zM60 33h1v1h-1zM41 38h1v1h-1zM22 39h1v1h-1zM21 40h1v1h-1zM8 43h1v1h-1zM28 43h1v1h-1zM9 45h1v1h-1zM6 46h1v1h-1zM12 47h1v1h-1zM15 49h1v1h-1zM65 50h1v1h-1zM1 52h1v1h-1zM41 52h1v1h-1zM11 57h1v1h-1zM25 57h1v1h-1zM39 57h1v1h-1zM23 58h1v1h-1zM63 58h1v1h-1z"/><path fill="#5c2" d="M59 1h1v1h-1zM15 3h1v1h-1zM10 7h1v1h-1zM26 10h1v1h-1zM11 13h1v1h-1zM39 13h1v1h-1zM5 18h1v1h-1zM59 18h1v1h-1zM65 23h1v1h-1zM16 24h1v1h-1zM65 28h1v1h-1zM12 32h1v1h-1zM28 33h1v1h-1zM40 34h1v1h-1zM34 37h1v1h-1zM32 38h1v1h-1zM36 38h1v1h-1zM55 39h1v1h-1zM14 44h1v1h-1zM59 45h1v1h-1zM5 46h1v1h-1zM27 48h1v1h-1zM49 48h1v1h-1zM43 49h1v1h-1zM49 51h1v1h-1zM30 62h1v1h-1z"/><path fill="#af3" d="M67 1h1v1h-1zM53 2h2v1h-2zM53 8h1v1h-1zM54 9h1v1h-1zM31 13h1v1h-1zM53 14h1v1h-1zM37 15h1v1h-1zM55 15h1v1h-1zM30 16h1v1h-1zM66 19h1v1h-1zM56 20h1v1h-1zM30 21h1v1h-1zM37 21h1v1h-1zM24 25h1v1h-1zM32 33h1v1h-1zM38 33h2v1h-2zM33 34h1v1h-1zM58 36h1v1h-1zM38 37h1v1h-1zM4 42h1v1h-1zM22 42h1v1h-1zM19 43h1v1h-1zM22 43h1v1h-1zM37 43h1v1h-1zM24 44h1v1h-1zM62 47h1v1h-1zM2 49h1v1h-1zM40 49h1v1h-1zM10 50h1v1h-1zM3 51h1v1h-1zM47 51h1v1h-1zM51 53h1v1h-1zM4 58h1v1h-1zM59 59h1v1h-1zM27 60h1v1h-1zM62 62h1v1h-1z"/><path fill="#5e5" d="M68 1h1v1h-1zM64 7h1v1h-1zM27 8h1v1h-1zM58 10h1v1h-1zM21 15h1v1h-1zM33 15h1v1h-1zM35 15h1v1h-1zM29 25h1v1h-1zM13 26h1v1h-1zM18 33h1v1h-1zM63 36h1v1h-1zM65 37h1v1h-1zM37 40h1v1h-1zM9 41h1v1h-1zM13 48h1v1h-1zM62 50h1v1h-1zM31 52h1v1h-1zM28 60h1v1h-1z"/><path fill="#4f3" d="M2 2h1v1h-1zM50 13h1v1h-1zM7 16h1v1h-1zM15 36h1v1h-1zM64 39h1v1h-1zM19 40h1v1h-1zM1 46h1v1h-1zM69 46h1v1h-1zM67 50h1v1h-1zM61 59h1v1h-1z"/><path fill="#4d1" d="M3 2h1v1h-1zM35 3h1v1h-1zM23 10h1v1h-1zM46 12h1v1h-1zM35 13h1v1h-1zM15 14h1v1h-1zM26 24h1v1h-1zM27 38h1v1h-1zM33 38h1v1h-1zM1 39h1v1h-1zM59 44h1v1h-1zM39 47h1v1h-1zM66 50h1v1h-1zM69 62h1v1h-1z"/><path fill="#4b2" d="M9 2h1v1h-1zM2 5h1v1h-1zM27 7h1v1h-1zM43 7h1v1h-1zM45 8h1v1h-1zM50 11h1v1h-1zM6 15h1v1h-1zM14 18h1v1h-1zM14 25h1v1h-1zM29 26h1v1h-1zM11 27h1v1h-1zM4 28h1v1h-1zM54 30h1v1h-1zM33 31h1v1h-1zM25 32h1v1h-1zM25 33h1v1h-1zM62 33h1v1h-1zM4 34h1v1h-1zM4 35h1v1h-1zM59 39h1v1h-1zM58 45h1v1h-1zM42 48h1v1h-1zM19 50h1v1h-1zM48 50h1v1h-1zM66 51h1v1h-1zM9 52h1v1h-1zM11 52h1v1h-1zM45 54h1v1h-1zM34 57h2v1h-2zM64 57h1v1h-1zM64 58h1v1h-1zM66 58h1v1h-1zM1 60h1v1h-1zM35 61h2v1h-2zM42 61h1v1h-1zM0 63h2v1h-2z"/><path fill="#6d4" d="M10 2h1v1h-1zM9 3h1v1h-1zM49 4h1v1h-1zM20 34h1v1h-1zM26 39h1v1h-1zM23 54h1v1h-1zM69 63h1v1h-1z"/><path fill="#4e3" d="M11 2h1v1h-1zM31 7h1v1h-1zM22 8h1v1h-1zM26 8h1v1h-1zM46 8h1v1h-1zM49 8h1v1h-1zM23 9h1v1h-1zM9 14h1v1h-1zM31 15h1v1h-1zM45 16h1v1h-1zM67 16h1v1h-1zM68 18h1v1h-1zM22 20h1v1h-1zM12 21h1v1h-1zM30 24h1v1h-1zM1 29h1v1h-1zM24 29h1v1h-1zM60 35h1v1h-1zM22 36h1v1h-1zM64 36h1v1h-1zM15 37h1v1h-1zM1 38h1v1h-1zM4 38h1v1h-1zM22 38h1v1h-1zM26 38h1v1h-1zM66 39h1v1h-1zM5 40h1v1h-1zM67 40h1v1h-1zM20 41h1v1h-1zM69 41h1v1h-1zM27 42h1v1h-1zM61 43h1v1h-1zM1 44h1v1h-1zM42 46h1v1h-1zM30 47h1v1h-1zM42 47h1v1h-1zM12 49h1v1h-1zM43 50h1v1h-1zM69 50h1v1h-1zM0 52h1v1h-1zM63 57h1v1h-1zM36 59h1v1h-1zM21 61h1v1h-1zM29 61h1v1h-1zM61 61h1v1h-1zM31 62h1v1h-1zM38 63h1v1h-1z"/><path fill="#5d2" d="M14 2h1v1h-1zM60 4h1v1h-1zM30 5h1v1h-1zM66 5h1v1h-1zM21 8h1v1h-1zM65 9h1v1h-1zM49 14h1v1h-1zM3 17h1v1h-1zM25 19h1v1h-1zM60 19h1v1h-1zM2 23h1v1h-1zM15 25h1v1h-1zM41 29h1v1h-1zM61 32h1v1h-1zM21 33h1v1h-1zM27 33h1v1h-1zM41 34h1v1h-1zM7 35h1v1h-1zM22 37h1v1h-1zM40 37h1v1h-1zM9 39h1v1h-1zM14 40h1v1h-1zM32 41h1v1h-1zM48 41h1v1h-1zM38 42h1v1h-1zM47 43h1v1h-1zM44 47h1v1h-1zM53 47h1v1h-1zM25 49h1v1h-1zM20 53h1v1h-1zM10 55h1v1h-1zM26 57h1v1h-1zM51 59h1v1h-1zM54 59h1v1h-1zM20 60h1v1h-1zM33 61h1v1h-1z"/><path fill="#3b3" d="M16 2h1v1h-1zM35 2h2v1h-2zM2 3h1v1h-1zM62 5h1v1h-1zM39 6h1v1h-1zM51 9h1v1h-1zM58 9h1v1h-1zM2 12h1v1h-1zM10 12h2v1h-2zM2 13h1v1h-1zM38 13h1v1h-1zM42 16h1v1h-1zM22 18h1v1h-1zM14 19h1v1h-1zM15 23h1v1h-1zM1 25h1v1h-1zM41 26h1v1h-1zM9 27h1v1h-1zM29 27h1v1h-1zM3 28h1v1h-1zM18 28h1v1h-1zM46 29h1v1h-1zM69 30h1v1h-1zM44 31h1v1h-1zM23 32h1v1h-1zM12 33h1v1h-1zM13 34h1v1h-1zM23 34h1v1h-1zM26 34h1v1h-1zM9 38h1v1h-1zM42 45h1v1h-1zM68 45h1v1h-1zM41 47h1v1h-1zM52 47h1v1h-1zM45 49h1v1h-1zM13 52h1v1h-1zM66 52h1v1h-1zM45 55h1v1h-1zM33 57h1v1h-1zM62 58h1v1h-1zM23 59h1v1h-1zM64 60h1v1h-1z"/><path fill="#393" d="M17 2h1v1h-1zM5 5h1v1h-1zM37 12h1v1h-1zM0 14h1v1h-1zM57 24h1v1h-1zM61 25h1v1h-1zM58 38h1v1h-1zM30 42h1v1h-1zM64 53h1v1h-1zM43 57h1v1h-1zM22 59h1v1h-1z"/><path fill="#372" d="M21 2h1v1h-1zM64 4h1v1h-1zM58 6h2v1h-2zM2 7h1v1h-1zM2 11h1v1h-1zM42 13h1v1h-1zM61 13h1v1h-1zM25 16h1v1h-1zM63 24h1v1h-1zM9 25h1v1h-1zM5 26h1v1h-1zM69 27h1v1h-1zM62 30h1v1h-1zM47 35h1v1h-1zM54 35h1v1h-1zM56 39h1v1h-1zM46 44h1v1h-1zM51 47h1v1h-1zM51 49h1v1h-1zM40 55h2v1h-2zM40 57h1v1h-1zM42 57h1v1h-1z"/><path fill="#6e4" d="M22 2h1v1h-1zM39 2h1v1h-1zM12 3h1v1h-1zM41 4h1v1h-1zM30 7h1v1h-1zM42 7h1v1h-1zM61 7h1v1h-1zM63 7h1v1h-1zM69 8h1v1h-1zM22 9h1v1h-1zM27 9h1v1h-1zM38 11h1v1h-1zM56 11h1v1h-1zM49 12h1v1h-1zM11 14h1v1h-1zM17 14h1v1h-1zM30 14h1v1h-1zM8 15h1v1h-1zM11 15h1v1h-1zM11 17h1v1h-1zM49 18h1v1h-1zM57 20h1v1h-1zM61 20h1v1h-1zM9 22h1v1h-1zM11 23h1v1h-1zM55 23h1v1h-1zM40 27h1v1h-1zM7 28h1v1h-1zM17 28h1v1h-1zM38 29h1v1h-1zM45 29h1v1h-1zM42 30h1v1h-1zM21 31h1v1h-1zM27 31h1v1h-1zM19 32h1v1h-1zM65 34h1v1h-1zM58 35h1v1h-1zM2 36h1v1h-1zM18 36h1v1h-1zM46 37h1v1h-1zM5 39h1v1h-1zM15 40h1v1h-1zM25 40h1v1h-1zM12 44h2v1h-2zM16 44h2v1h-2zM41 44h1v1h-1zM1 45h1v1h-1zM4 46h1v1h-1zM45 46h1v1h-1zM9 48h1v1h-1zM17 48h1v1h-1zM31 48h1v1h-1zM48 48h1v1h-1zM57 49h2v1h-2zM20 50h1v1h-1zM34 50h1v1h-1zM22 51h1v1h-1zM24 51h1v1h-1zM59 51h1v1h-1zM18 53h1v1h-1zM8 54h1v1h-1zM11 54h1v1h-1zM24 56h1v1h-1zM45 56h1v1h-1zM9 58h1v1h-1zM53 58h1v1h-1zM58 60h1v1h-1zM56 61h1v1h-1zM41 63h1v1h-1z"/><path fill="#6f5" d="M24 2h1v1h-1zM9 6h1v1h-1zM32 7h1v1h-1zM7 11h1v1h-1zM23 12h1v1h-1zM35 14h1v1h-1zM68 17h1v1h-1zM28 18h1v1h-1zM34 19h1v1h-1zM21 23h1v1h-1zM6 29h1v1h-1zM17 35h1v1h-1zM56 36h1v1h-1zM17 37h1v1h-1zM37 37h1v1h-1zM68 38h1v1h-1zM11 44h1v1h-1zM12 45h1v1h-1zM21 45h1v1h-1zM69 47h1v1h-1zM12 50h1v1h-1zM33 51h1v1h-1zM61 57h1v1h-1zM46 60h1v1h-1zM18 62h1v1h-1z"/><path fill="#3d3" d="M25 2h1v1h-1zM2 15h1v1h-1zM44 15h1v1h-1zM23 16h1v1h-1zM57 17h1v1h-1zM25 18h1v1h-1zM23 20h1v1h-1zM3 21h1v1h-1zM16 22h1v1h-1zM36 25h1v1h-1zM46 28h1v1h-1zM40 31h1v1h-1zM23 37h1v1h-1zM27 37h1v1h-1zM59 38h1v1h-1zM13 39h1v1h-1zM21 39h1v1h-1zM53 40h1v1h-1zM8 42h1v1h-1zM62 42h1v1h-1zM6 47h1v1h-1zM67 56h1v1h-1zM64 61h1v1h-1z"/><path fill="#4c3" d="M38 2h1v1h-1zM23 3h1v1h-1zM4 4h1v1h-1zM68 4h1v1h-1zM31 5h1v1h-1zM11 7h1v1h-1zM10 9h1v1h-1zM25 11h1v1h-1zM62 16h1v1h-1zM13 20h1v1h-1zM64 22h1v1h-1zM28 27h1v1h-1zM35 27h1v1h-1zM38 27h1v1h-1zM64 28h1v1h-1zM33 29h1v1h-1zM24 32h1v1h-1zM59 33h1v1h-1zM21 35h1v1h-1zM57 35h1v1h-1zM31 36h1v1h-1zM45 36h1v1h-1zM54 36h1v1h-1zM32 37h2v1h-2zM51 38h1v1h-1zM20 39h1v1h-1zM9 43h1v1h-1zM41 46h1v1h-1zM45 47h1v1h-1zM26 48h1v1h-1zM58 48h1v1h-1zM26 49h1v1h-1zM64 50h1v1h-1zM68 51h1v1h-1zM12 53h1v1h-1zM16 54h1v1h-1zM63 54h2v1h-2zM15 57h1v1h-1zM32 60h1v1h-1zM34 60h1v1h-1zM69 60h1v1h-1zM68 62h1v1h-1z"/><path fill="#bf4" d="M40 2h1v1h-1zM35 8h1v1h-1zM40 8h1v1h-1zM27 20h1v1h-1zM61 21h1v1h-1zM31 22h1v1h-1zM47 22h1v1h-1zM44 38h1v1h-1zM2 40h1v1h-1zM36 46h1v1h-1zM34 49h1v1h-1zM31 51h1v1h-1zM47 53h1v1h-1zM51 54h1v1h-1zM69 55h1v1h-1zM5 56h1v1h-1zM39 58h1v1h-1zM23 62h1v1h-1zM65 62h1v1h-1z"/><path fill="#ef8" d="M44 2h1v1h-1zM33 11h1v1h-1zM36 20h1v1h-1zM22 27h1v1h-1zM35 43h1v1h-1zM35 45h1v1h-1zM25 52h1v1h-1zM48 62h1v1h-1z"/><path fill="#af6" d="M46 2h1v1h-1zM45 3h1v1h-1zM49 3h1v1h-1zM55 3h1v1h-1zM37 4h1v1h-1zM53 9h1v1h-1zM20 10h1v1h-1zM54 11h1v1h-1zM28 12h1v1h-1zM32 14h1v1h-1zM33 17h1v1h-1zM35 19h1v1h-1zM40 19h1v1h-1zM6 21h1v1h-1zM41 21h1v1h-1zM46 21h1v1h-1zM61 23h1v1h-1zM47 24h1v1h-1zM23 25h1v1h-1zM33 25h1v1h-1zM21 27h1v1h-1zM15 28h1v1h-1zM15 31h1v1h-1zM19 31h1v1h-1zM7 32h1v1h-1zM30 32h1v1h-1zM6 33h1v1h-1zM66 35h1v1h-1zM61 37h1v1h-1zM34 39h1v1h-1zM5 42h1v1h-1zM35 42h1v1h-1zM3 43h1v1h-1zM64 47h1v1h-1zM1 49h1v1h-1zM64 49h1v1h-1zM6 50h1v1h-1zM41 50h1v1h-1zM7 51h1v1h-1zM16 51h1v1h-1zM27 54h1v1h-1zM47 54h1v1h-1zM54 54h1v1h-1zM47 58h1v1h-1zM69 58h1v1h-1zM6 60h1v1h-1zM40 61h1v1h-1zM57 62h1v1h-1zM27 63h1v1h-1zM48 63h1v1h-1zM52 63h1v1h-1zM64 63h1v1h-1z"/><path fill="#9f4" d="M47 2h2v1h-2zM62 2h1v1h-1zM52 5h1v1h-1zM33 7h1v1h-1zM9 9h1v1h-1zM30 10h1v1h-1zM36 10h1v1h-1zM17 12h1v1h-1zM55 12h1v1h-1zM57 12h1v1h-1zM40 16h1v1h-1zM39 17h1v1h-1zM50 17h1v1h-1zM11 20h1v1h-1zM29 20h1v1h-1zM50 21h1v1h-1zM67 21h1v1h-1zM7 22h1v1h-1zM27 22h1v1h-1zM33 22h1v1h-1zM61 22h1v1h-1zM28 23h1v1h-1zM15 26h1v1h-1zM12 28h1v1h-1zM16 30h1v1h-1zM11 31h1v1h-1zM28 31h1v1h-1zM1 32h1v1h-1zM68 33h1v1h-1zM0 34h1v1h-1zM18 34h1v1h-1zM3 38h1v1h-1zM63 38h1v1h-1zM60 39h1v1h-1zM36 41h1v1h-1zM42 42h1v1h-1zM11 43h1v1h-1zM15 43h1v1h-1zM20 43h1v1h-1zM41 43h1v1h-1zM64 44h1v1h-1zM40 45h1v1h-1zM66 46h1v1h-1zM33 47h1v1h-1zM64 48h1v1h-1zM3 50h1v1h-1zM57 53h1v1h-1zM60 54h1v1h-1zM0 58h1v1h-1zM37 58h1v1h-1zM49 59h1v1h-1zM16 61h1v1h-1zM24 61h1v1h-1z"/><path fill="#8e6" d="M51 2h1v1h-1zM52 14h1v1h-1zM10 20h1v1h-1zM10 21h1v1h-1zM45 26h1v1h-1zM6 31h1v1h-1zM15 35h1v1h-1zM68 37h1v1h-1zM17 53h1v1h-1zM62 61h1v1h-1z"/><path fill="#3a3" d="M56 2h1v1h-1zM65 4h1v1h-1zM57 5h1v1h-1zM65 5h1v1h-1zM0 9h1v1h-1zM14 12h1v1h-1zM58 17h1v1h-1zM67 23h1v1h-1zM13 25h1v1h-1zM6 27h1v1h-1zM19 27h1v1h-1zM35 30h1v1h-1zM55 31h1v1h-1zM43 33h1v1h-1zM20 35h1v1h-1zM43 36h1v1h-1zM63 40h1v1h-1zM56 46h1v1h-1zM38 51h1v1h-1zM64 52h1v1h-1zM41 53h1v1h-1zM5 54h1v1h-1zM2 55h1v1h-1zM12 58h1v1h-1zM65 60h1v1h-1zM3 62h1v1h-1z"/><path fill="#be7" d="M60 2h1v1h-1zM45 25h1v1h-1zM45 42h1v1h-1zM21 46h1v1h-1zM7 59h1v1h-1z"/><path fill="#7e4" d="M3 3h1v1h-1zM30 3h1v1h-1zM61 3h1v1h-1zM42 4h1v1h-1zM54 5h1v1h-1zM51 7h1v1h-1zM68 7h1v1h-1zM38 8h1v1h-1zM46 9h1v1h-1zM24 12h1v1h-1zM54 13h1v1h-1zM12 14h1v1h-1zM24 15h1v1h-1zM27 15h1v1h-1zM32 15h1v1h-1zM8 16h1v1h-1zM22 17h1v1h-1zM67 17h1v1h-1zM67 19h1v1h-1zM20 20h2v1h-2zM40 23h1v1h-1zM25 25h1v1h-1zM42 25h1v1h-1zM11 29h2v1h-2zM29 29h1v1h-1zM43 29h1v1h-1zM17 36h1v1h-1zM15 38h1v1h-1zM48 38h1v1h-1zM60 38h1v1h-1zM16 42h1v1h-1zM61 42h1v1h-1zM10 43h1v1h-1zM28 45h1v1h-1zM60 46h1v1h-1zM51 52h1v1h-1zM55 53h1v1h-1zM53 54h1v1h-1zM3 59h1v1h-1zM28 61h1v1h-1zM51 61h1v1h-1zM20 62h1v1h-1zM15 63h1v1h-1z"/><path fill="#482" d="M4 3h1v1h-1zM60 8h1v1h-1zM2 16h1v1h-1zM12 16h1v1h-1zM24 18h1v1h-1zM63 25h1v1h-1zM8 53h1v1h-1z"/><path fill="#271" d="M6 3h1v1h-1zM15 8h1v1h-1zM69 11h1v1h-1zM62 13h1v1h-1zM0 22h1v1h-1zM3 24h1v1h-1zM64 24h1v1h-1zM47 29h1v1h-1zM47 34h1v1h-1zM50 43h1v1h-1zM49 44h1v1h-1zM45 45h1v1h-1zM47 45h1v1h-1zM49 45h1v1h-1zM48 47h1v1h-1zM45 48h1v1h-1zM52 49h1v1h-1zM51 51h1v1h-1zM67 52h1v1h-1zM33 62h1v1h-1zM12 63h1v1h-1zM43 63h1v1h-1z"/><path fill="#292" d="M7 3h1v1h-1zM59 5h1v1h-1zM0 6h1v1h-1zM66 15h2v1h-2zM17 23h1v1h-1zM12 24h1v1h-1zM53 26h1v1h-1zM64 26h1v1h-1zM37 29h1v1h-1zM7 38h1v1h-1zM66 45h1v1h-1zM53 51h1v1h-1zM10 53h1v1h-1zM42 53h1v1h-1zM16 55h1v1h-1zM32 55h1v1h-1zM30 63h2v1h-2z"/><path fill="#3a1" d="M8 3h1v1h-1zM16 3h1v1h-1zM23 8h1v1h-1zM58 13h1v1h-1zM26 17h1v1h-1zM65 17h1v1h-1zM1 23h1v1h-1zM59 25h1v1h-1zM26 26h1v1h-1zM27 27h1v1h-1zM55 33h1v1h-1zM25 34h1v1h-1zM59 46h1v1h-1zM14 48h1v1h-1zM43 48h1v1h-1zM44 55h1v1h-1zM43 59h1v1h-1zM1 61h1v1h-1z"/><path fill="#120" d="M21 3h1v1h-1zM24 6h1v1h-1zM18 7h1v1h-1zM20 7h1v1h-1zM13 9h1v1h-1zM13 10h1v1h-1zM58 14h1v1h-1zM69 25h1v1h-1zM59 28h1v1h-1zM61 28h1v1h-1zM50 50h1v1h-1zM35 54h1v1h-1zM34 55h1v1h-1z"/><path fill="#110" d="M26 3h1v1h-1zM26 5h1v1h-1zM19 6h2v1h-2zM67 12h1v1h-1zM43 34h1v1h-1zM54 42h1v1h-1zM37 52h1v1h-1zM19 56h1v1h-1z"/><path fill="#6e2" d="M33 3h1v1h-1zM5 6h1v1h-1zM31 6h1v1h-1zM37 7h1v1h-1zM47 7h1v1h-1zM9 8h1v1h-1zM66 9h1v1h-1zM16 11h1v1h-1zM48 11h1v1h-1zM20 15h1v1h-1zM69 15h1v1h-1zM5 17h1v1h-1zM29 18h1v1h-1zM63 19h1v1h-1zM15 21h1v1h-1zM53 22h1v1h-1zM6 23h1v1h-1zM20 23h1v1h-1zM31 23h1v1h-1zM48 23h1v1h-1zM57 23h1v1h-1zM25 24h1v1h-1zM28 24h1v1h-1zM16 25h2v1h-2zM35 26h1v1h-1zM6 28h1v1h-1zM39 29h1v1h-1zM17 30h1v1h-1zM26 30h2v1h-2zM16 31h1v1h-1zM25 31h1v1h-1zM36 31h1v1h-1zM9 32h1v1h-1zM57 32h1v1h-1zM64 32h1v1h-1zM35 33h1v1h-1zM2 35h1v1h-1zM50 38h1v1h-1zM47 40h1v1h-1zM49 40h1v1h-1zM61 41h1v1h-1zM67 43h1v1h-1zM7 47h1v1h-1zM54 47h1v1h-1zM11 48h1v1h-1zM37 50h2v1h-2zM47 50h1v1h-1zM44 51h1v1h-1zM27 52h1v1h-1zM24 54h1v1h-1zM29 56h1v1h-1zM31 58h1v1h-1zM52 58h1v1h-1zM50 59h1v1h-1zM8 61h1v1h-1zM9 62h1v1h-1z"/><path fill="#3c1" d="M37 3h1v1h-1zM12 38h1v1h-1zM31 42h1v1h-1zM58 43h1v1h-1zM34 59h1v1h-1zM0 60h1v1h-1zM52 61h1v1h-1zM4 63h1v1h-1z"/><path fill="#bf7" d="M48 3h1v1h-1zM33 6h1v1h-1zM44 23h1v1h-1zM42 24h1v1h-1zM47 25h1v1h-1zM39 32h1v1h-1zM62 45h1v1h-1zM63 47h1v1h-1zM57 54h1v1h-1zM53 56h1v1h-1zM7 60h1v1h-1z"/><path fill="#4f4" d="M51 3h1v1h-1zM65 6h1v1h-1zM4 10h1v1h-1zM9 10h1v1h-1zM20 14h1v1h-1zM28 15h1v1h-1zM59 21h1v1h-1zM0 33h1v1h-1zM65 35h1v1h-1zM39 39h1v1h-1zM35 51h1v1h-1zM36 57h2v1h-2zM55 59h1v1h-1zM63 60h1v1h-1z"/><path fill="#5b2" d="M56 3h1v1h-1zM67 3h1v1h-1zM68 14h1v1h-1zM0 25h1v1h-1zM10 34h1v1h-1zM5 35h1v1h-1zM67 41h1v1h-1zM14 61h1v1h-1zM68 61h1v1h-1z"/><path fill="#5c4" d="M57 3h1v1h-1zM10 46h1v1h-1zM44 61h1v1h-1z"/><path fill="#381" d="M66 3h1v1h-1zM28 4h1v1h-1zM58 8h1v1h-1zM45 10h1v1h-1zM63 10h1v1h-1zM69 10h1v1h-1zM62 11h1v1h-1zM45 13h1v1h-1zM62 14h1v1h-1zM2 19h1v1h-1zM22 19h1v1h-1zM18 23h1v1h-1zM63 31h1v1h-1zM66 31h1v1h-1zM21 36h1v1h-1zM64 40h1v1h-1zM67 44h1v1h-1zM69 52h1v1h-1zM4 53h1v1h-1zM32 54h1v1h-1zM41 54h1v1h-1zM37 63h1v1h-1z"/><path fill="#2a2" d="M68 3h1v1h-1zM63 17h1v1h-1zM21 32h1v1h-1zM24 35h1v1h-1zM13 36h1v1h-1zM55 48h1v1h-1zM49 50h1v1h-1zM42 59h1v1h-1zM5 63h1v1h-1z"/><path fill="#ae5" d="M10 4h1v1h-1zM10 19h1v1h-1zM33 19h1v1h-1zM52 19h1v1h-1zM32 25h1v1h-1zM16 35h1v1h-1zM44 42h1v1h-1zM43 43h1v1h-1zM15 53h1v1h-1zM46 55h1v1h-1zM50 62h1v1h-1z"/><path fill="#111" d="M16 4h1v1h-1zM25 6h1v1h-1zM21 7h1v1h-1zM56 8h1v1h-1zM48 34h1v1h-1zM51 36h1v1h-1zM57 42h1v1h-1zM18 55h1v1h-1z"/><path fill="#000" d="M17 4h2v1h-2zM21 4h1v1h-1zM15 5h1v1h-1zM22 5h1v1h-1zM14 6h3v1h-3zM65 12h1v1h-1zM49 29h2v1h-2zM60 29h1v1h-1zM47 30h1v1h-1zM50 30h1v1h-1zM49 31h2v1h-2zM52 31h1v1h-1zM50 32h1v1h-1zM48 33h1v1h-1zM51 33h1v1h-1zM44 34h1v1h-1zM51 34h1v1h-1zM53 34h1v1h-1zM50 35h1v1h-1zM53 35h1v1h-1zM52 36h1v1h-1zM57 40h1v1h-1zM58 41h1v1h-1zM55 43h1v1h-1zM38 53h1v1h-1zM19 55h1v1h-1zM21 57h1v1h-1zM21 59h1v1h-1zM34 63h1v1h-1z"/><path fill="#010" d="M19 4h2v1h-2zM22 4h2v1h-2zM16 5h6v1h-6zM23 5h1v1h-1zM17 6h1v1h-1zM14 7h2v1h-2zM12 10h1v1h-1zM65 11h1v1h-1zM64 12h1v1h-1zM64 13h2v1h-2zM67 13h1v1h-1zM59 14h1v1h-1zM65 14h1v1h-1zM67 25h2v1h-2zM54 26h1v1h-1zM50 28h3v1h-3zM51 29h1v1h-1zM48 30h2v1h-2zM51 30h3v1h-3zM59 30h2v1h-2zM47 31h2v1h-2zM51 31h1v1h-1zM60 31h2v1h-2zM46 32h4v1h-4zM51 32h2v1h-2zM46 33h2v1h-2zM49 33h2v1h-2zM52 33h1v1h-1zM45 34h1v1h-1zM50 34h1v1h-1zM52 34h1v1h-1zM44 35h2v1h-2zM52 35h1v1h-1zM38 52h1v1h-1zM37 53h1v1h-1zM19 54h1v1h-1zM20 55h2v1h-2zM21 56h1v1h-1zM20 57h1v1h-1zM20 58h2v1h-2zM35 63h1v1h-1z"/><path fill="#5f3" d="M39 4h1v1h-1zM1 5h1v1h-1zM39 5h1v1h-1zM67 8h1v1h-1zM52 11h1v1h-1zM46 17h1v1h-1zM56 17h1v1h-1zM5 23h1v1h-1zM43 26h1v1h-1zM26 27h1v1h-1zM1 28h1v1h-1zM34 32h1v1h-1zM3 33h1v1h-1zM56 33h1v1h-1zM68 34h1v1h-1zM39 35h1v1h-1zM53 39h1v1h-1zM10 41h1v1h-1zM14 41h1v1h-1zM2 43h1v1h-1zM22 44h1v1h-1zM35 49h1v1h-1zM8 55h1v1h-1zM18 60h1v1h-1zM51 60h1v1h-1zM38 61h1v1h-1zM41 61h1v1h-1zM28 62h1v1h-1zM39 62h1v1h-1zM45 62h1v1h-1z"/><path fill="#ae3" d="M46 4h1v1h-1zM26 21h1v1h-1zM2 39h1v1h-1zM35 47h1v1h-1z"/><path fill="#7e5" d="M50 4h1v1h-1zM69 6h1v1h-1zM18 12h1v1h-1zM19 14h1v1h-1zM26 18h1v1h-1zM45 18h1v1h-1zM53 21h1v1h-1zM21 24h1v1h-1zM51 25h1v1h-1zM37 35h1v1h-1zM42 39h1v1h-1zM69 40h1v1h-1zM11 42h1v1h-1zM63 44h1v1h-1zM27 47h1v1h-1zM2 51h1v1h-1zM13 51h1v1h-1zM31 54h1v1h-1zM46 56h1v1h-1zM8 57h1v1h-1zM36 58h1v1h-1zM41 62h1v1h-1zM66 62h1v1h-1z"/><path fill="#9f7" d="M55 4h1v1h-1zM50 6h1v1h-1zM25 12h1v1h-1zM46 16h1v1h-1zM30 17h1v1h-1zM24 23h1v1h-1zM62 39h1v1h-1zM63 45h1v1h-1zM63 48h1v1h-1zM58 56h1v1h-1zM26 60h1v1h-1zM46 63h1v1h-1zM59 63h1v1h-1z"/><path fill="#391" d="M4 5h1v1h-1zM16 8h1v1h-1zM44 9h1v1h-1zM51 10h1v1h-1zM4 15h2v1h-2zM18 22h1v1h-1zM0 23h1v1h-1zM56 24h1v1h-1zM3 26h1v1h-1zM12 34h1v1h-1zM6 41h1v1h-1zM47 44h1v1h-1zM51 46h1v1h-1zM45 53h1v1h-1zM17 55h1v1h-1zM35 56h1v1h-1zM22 58h1v1h-1zM3 60h1v1h-1zM10 60h1v1h-1zM0 61h1v1h-1zM1 62h1v1h-1z"/><path fill="#6e5" d="M11 5h1v1h-1zM26 11h1v1h-1zM49 13h1v1h-1zM14 14h1v1h-1zM25 14h1v1h-1zM40 15h1v1h-1zM35 18h1v1h-1zM25 20h1v1h-1zM64 29h1v1h-1zM0 31h1v1h-1zM17 31h1v1h-1zM14 32h1v1h-1zM15 33h1v1h-1zM37 34h1v1h-1zM69 36h1v1h-1zM1 40h1v1h-1zM18 45h1v1h-1zM38 45h1v1h-1zM41 48h1v1h-1zM18 49h1v1h-1zM60 51h1v1h-1zM1 57h1v1h-1zM49 58h1v1h-1zM51 58h1v1h-1zM60 61h1v1h-1z"/><path fill="#020" d="M14 5h1v1h-1zM24 5h1v1h-1zM16 7h1v1h-1zM64 11h1v1h-1zM48 29h1v1h-1zM52 29h1v1h-1zM45 33h1v1h-1zM51 35h1v1h-1zM56 41h1v1h-1zM37 54h1v1h-1z"/><path fill="#4f2" d="M32 5h1v1h-1zM9 33h1v1h-1zM36 35h1v1h-1zM10 36h1v1h-1zM0 45h1v1h-1zM26 59h1v1h-1zM31 60h1v1h-1zM20 61h1v1h-1z"/><path fill="#ce5" d="M45 5h1v1h-1zM35 7h1v1h-1zM42 22h1v1h-1zM42 41h1v1h-1zM33 48h1v1h-1zM9 50h1v1h-1zM19 63h1v1h-1z"/><path fill="#ae6" d="M50 5h1v1h-1zM48 18h1v1h-1zM48 19h1v1h-1zM34 23h1v1h-1zM29 30h1v1h-1zM37 48h1v1h-1zM7 58h1v1h-1zM59 58h1v1h-1zM68 59h1v1h-1z"/><path fill="#4e1" d="M60 5h1v1h-1zM16 10h1v1h-1zM37 24h1v1h-1zM9 40h1v1h-1zM52 40h1v1h-1z"/><path fill="#5d4" d="M61 5h1v1h-1zM28 7h1v1h-1zM40 7h1v1h-1zM46 15h1v1h-1zM48 15h1v1h-1zM43 18h1v1h-1zM28 20h1v1h-1zM63 34h1v1h-1zM23 36h1v1h-1zM38 43h1v1h-1zM38 44h1v1h-1zM8 45h1v1h-1zM44 46h1v1h-1zM27 51h1v1h-1zM16 58h1v1h-1zM5 61h1v1h-1z"/><path fill="#483" d="M27 6h1v1h-1zM28 26h1v1h-1z"/><path fill="#3d1" d="M30 6h1v1h-1zM55 38h1v1h-1zM52 41h1v1h-1zM21 50h1v1h-1z"/><path fill="#bf5" d="M35 6h1v1h-1zM51 6h1v1h-1zM4 9h1v1h-1zM8 10h1v1h-1zM54 18h1v1h-1zM31 19h1v1h-1zM44 19h1v1h-1zM56 19h1v1h-1zM7 21h1v1h-1zM32 21h1v1h-1zM22 22h1v1h-1zM60 22h1v1h-1zM36 23h1v1h-1zM35 24h1v1h-1zM45 24h1v1h-1zM0 26h1v1h-1zM47 26h1v1h-1zM30 33h1v1h-1zM19 34h1v1h-1zM43 38h1v1h-1zM17 42h1v1h-1zM40 44h1v1h-1zM35 46h1v1h-1zM61 48h1v1h-1zM21 49h1v1h-1zM48 53h2v1h-2zM48 54h1v1h-1zM61 54h1v1h-1zM59 55h1v1h-1zM48 57h1v1h-1zM25 62h1v1h-1z"/><path fill="#9e5" d="M49 6h1v1h-1zM36 9h1v1h-1zM29 11h2v1h-2zM23 15h1v1h-1zM57 18h1v1h-1zM55 19h1v1h-1zM34 20h1v1h-1zM63 21h1v1h-1zM34 22h1v1h-1zM39 23h1v1h-1zM53 23h1v1h-1zM37 33h1v1h-1zM27 45h1v1h-1zM26 46h1v1h-1zM0 47h1v1h-1zM6 48h1v1h-1zM40 50h1v1h-1zM6 55h1v1h-1zM1 58h1v1h-1zM40 60h1v1h-1zM26 62h1v1h-1zM26 63h1v1h-1z"/><path fill="#ef7" d="M66 6h1v1h-1zM33 10h1v1h-1zM37 16h1v1h-1zM14 30h1v1h-1zM45 40h1v1h-1zM5 49h1v1h-1zM32 50h1v1h-1zM56 54h1v1h-1zM7 56h1v1h-1zM38 58h1v1h-1z"/><path fill="#ce9" d="M67 6h1v1h-1z"/><path fill="#152" d="M22 7h1v1h-1z"/><path fill="#ce3" d="M34 7h1v1h-1zM20 21h1v1h-1zM23 42h1v1h-1zM31 50h1v1h-1zM68 58h1v1h-1zM27 62h1v1h-1z"/><path fill="#6f1" d="M44 7h1v1h-1z"/><path fill="#cf8" d="M66 7h1v1h-1zM20 11h1v1h-1zM23 14h1v1h-1zM42 23h1v1h-1zM47 23h1v1h-1zM53 57h1v1h-1zM51 63h1v1h-1zM58 63h1v1h-1z"/><path fill="#bfa" d="M5 8h1v1h-1zM36 44h1v1h-1z"/><path fill="#bf9" d="M6 8h1v1h-1zM30 19h1v1h-1zM44 20h1v1h-1zM43 23h1v1h-1zM22 26h1v1h-1zM48 26h1v1h-1zM55 55h1v1h-1zM49 63h1v1h-1z"/><path fill="#161" d="M14 8h1v1h-1zM9 35h1v1h-1zM65 55h1v1h-1zM65 57h1v1h-1zM11 60h1v1h-1z"/><path fill="#9e7" d="M28 8h1v1h-1z"/><path fill="#ce4" d="M33 8h1v1h-1zM35 9h1v1h-1zM47 63h1v1h-1z"/><path fill="#cf9" d="M34 8h1v1h-1zM37 17h1v1h-1zM35 20h1v1h-1zM23 24h1v1h-1zM44 24h1v1h-1zM46 24h1v1h-1zM38 32h1v1h-1zM5 37h1v1h-1zM44 41h1v1h-1zM22 49h1v1h-1zM54 55h1v1h-1zM6 56h1v1h-1zM52 57h1v1h-1z"/><path fill="#8e2" d="M36 8h1v1h-1zM33 18h1v1h-1zM5 20h1v1h-1zM66 20h1v1h-1zM23 22h1v1h-1zM50 22h1v1h-1zM41 25h1v1h-1zM39 31h1v1h-1zM14 34h1v1h-1zM33 35h1v1h-1zM8 36h1v1h-1zM37 38h1v1h-1zM10 39h1v1h-1zM4 40h1v1h-1zM45 43h1v1h-1zM65 48h1v1h-1zM60 58h1v1h-1zM45 61h1v1h-1zM46 62h1v1h-1z"/><path fill="#492" d="M42 8h1v1h-1zM0 10h1v1h-1zM36 13h1v1h-1zM13 16h1v1h-1zM2 24h1v1h-1zM14 24h1v1h-1zM56 25h1v1h-1zM22 33h1v1h-1zM24 34h1v1h-1zM26 35h1v1h-1zM43 45h1v1h-1zM40 46h1v1h-1zM43 56h1v1h-1zM14 60h1v1h-1z"/><path fill="#be6" d="M52 8h1v1h-1zM45 20h1v1h-1zM67 33h1v1h-1zM42 38h1v1h-1zM61 39h1v1h-1zM40 41h1v1h-1zM11 51h1v1h-1zM55 56h1v1h-1zM58 58h1v1h-1z"/><path fill="#162" d="M59 8h1v1h-1zM6 25h1v1h-1z"/><path fill="#4d4" d="M61 8h1v1h-1zM22 10h1v1h-1zM56 10h1v1h-1zM4 11h1v1h-1zM16 15h1v1h-1zM25 15h1v1h-1zM42 15h1v1h-1zM28 16h1v1h-1zM66 16h1v1h-1zM15 18h1v1h-1zM18 21h1v1h-1zM66 22h1v1h-1zM50 26h1v1h-1zM68 30h1v1h-1zM62 32h1v1h-1zM3 35h1v1h-1zM36 39h1v1h-1zM46 43h1v1h-1zM63 43h2v1h-2zM42 60h1v1h-1z"/><path fill="#cf3" d="M5 9h1v1h-1zM21 11h1v1h-1zM7 12h1v1h-1zM60 63h1v1h-1zM63 63h1v1h-1z"/><path fill="#3e2" d="M19 9h1v1h-1zM28 14h1v1h-1zM50 52h1v1h-1z"/><path fill="#bf8" d="M31 9h1v1h-1zM40 9h1v1h-1zM35 10h1v1h-1zM30 12h1v1h-1zM54 15h1v1h-1zM20 28h1v1h-1zM33 49h1v1h-1zM6 57h2v1h-2zM56 63h1v1h-1z"/><path fill="#df5" d="M32 9h1v1h-1zM31 10h1v1h-1zM60 37h1v1h-1zM33 46h1v1h-1zM20 49h1v1h-1zM59 54h1v1h-1zM27 61h1v1h-1z"/><path fill="#cf5" d="M33 9h1v1h-1zM22 13h1v1h-1zM55 14h1v1h-1zM35 17h1v1h-1zM47 19h1v1h-1zM46 23h1v1h-1zM44 25h1v1h-1zM15 27h1v1h-1zM59 36h1v1h-1zM12 42h1v1h-1zM43 42h1v1h-1zM61 44h1v1h-1zM32 47h1v1h-1zM6 49h1v1h-1zM7 50h1v1h-1z"/><path fill="#af8" d="M34 9h1v1h-1zM51 19h1v1h-1zM30 20h1v1h-1zM23 23h1v1h-1zM13 29h1v1h-1zM7 37h1v1h-1z"/><path fill="#ae7" d="M41 9h1v1h-1zM33 44h1v1h-1zM48 61h1v1h-1z"/><path fill="#5d1" d="M60 9h1v1h-1zM3 23h1v1h-1zM16 27h1v1h-1zM26 41h1v1h-1z"/><path fill="#3c4" d="M61 9h1v1h-1zM64 30h1v1h-1z"/><path fill="#2b2" d="M69 9h1v1h-1zM22 34h1v1h-1z"/><path fill="#2a3" d="M2 10h1v1h-1zM14 46h1v1h-1zM39 46h1v1h-1zM15 58h1v1h-1z"/><path fill="#5b1" d="M5 10h1v1h-1z"/><path fill="#df4" d="M18 10h1v1h-1zM29 12h1v1h-1zM61 38h1v1h-1zM33 50h1v1h-1zM47 56h1v1h-1zM54 57h1v1h-1zM39 59h1v1h-1zM26 61h1v1h-1z"/><path fill="#be4" d="M19 10h1v1h-1zM39 10h1v1h-1zM59 11h1v1h-1zM43 25h1v1h-1zM22 30h1v1h-1zM8 31h1v1h-1zM30 31h1v1h-1zM6 43h1v1h-1z"/><path fill="#ce6" d="M34 10h1v1h-1zM4 51h1v1h-1zM10 51h1v1h-1z"/><path fill="#283" d="M3 11h1v1h-1zM63 28h1v1h-1zM59 34h1v1h-1zM64 51h1v1h-1z"/><path fill="#293" d="M15 11h1v1h-1zM11 24h1v1h-1zM63 30h1v1h-1zM12 36h1v1h-1zM7 41h1v1h-1z"/><path fill="#df9" d="M32 11h1v1h-1zM62 48h1v1h-1zM57 63h1v1h-1z"/><path fill="#ef6" d="M34 11h1v1h-1zM37 18h1v1h-1zM45 41h1v1h-1zM34 44h1v1h-1zM54 56h1v1h-1z"/><path fill="#9f2" d="M5 12h1v1h-1zM55 13h1v1h-1zM10 14h1v1h-1zM27 19h1v1h-1zM55 22h1v1h-1zM9 29h1v1h-1zM59 52h1v1h-1zM50 60h1v1h-1z"/><path fill="#6f6" d="M4 13h1v1h-1zM68 19h1v1h-1zM20 45h1v1h-1zM22 63h1v1h-1z"/><path fill="#6e1" d="M47 13h1v1h-1zM69 22h1v1h-1z"/><path fill="#130" d="M66 13h1v1h-1zM60 14h1v1h-1zM0 17h1v1h-1zM59 27h1v1h-1z"/><path fill="#2c2" d="M1 14h1v1h-1z"/><path fill="#5f2" d="M16 14h1v1h-1zM34 15h1v1h-1zM15 16h1v1h-1zM34 17h1v1h-1zM9 19h1v1h-1zM60 20h1v1h-1zM64 20h1v1h-1zM4 21h1v1h-1zM19 21h1v1h-1zM28 21h1v1h-1zM10 23h1v1h-1zM59 24h1v1h-1zM42 28h1v1h-1zM29 31h1v1h-1zM66 34h1v1h-1zM19 37h1v1h-1zM26 40h1v1h-1zM46 41h1v1h-1zM21 44h1v1h-1zM68 46h1v1h-1zM67 47h1v1h-1zM17 51h1v1h-1zM34 51h1v1h-1zM36 51h1v1h-1zM53 53h1v1h-1zM0 55h1v1h-1zM15 55h1v1h-1zM3 57h1v1h-1zM17 58h1v1h-1zM41 59h1v1h-1zM22 61h1v1h-1zM60 62h1v1h-1zM9 63h1v1h-1z"/><path fill="#df8" d="M22 14h1v1h-1zM33 14h1v1h-1zM44 22h1v1h-1zM35 23h1v1h-1zM60 36h1v1h-1zM32 45h1v1h-1zM57 57h1v1h-1zM49 61h1v1h-1z"/><path fill="#4f5" d="M51 14h1v1h-1zM40 22h1v1h-1z"/><path fill="#de6" d="M54 14h1v1h-1zM48 60h1v1h-1z"/><path fill="#fe8" d="M36 16h1v1h-1zM51 57h1v1h-1z"/><path fill="#de7" d="M47 17h1v1h-1zM5 59h1v1h-1z"/><path fill="#491" d="M62 17h1v1h-1zM3 25h1v1h-1zM57 25h1v1h-1zM7 40h1v1h-1zM52 60h1v1h-1z"/><path fill="#361" d="M2 18h1v1h-1zM55 25h1v1h-1zM65 25h1v1h-1zM10 26h1v1h-1zM0 36h1v1h-1zM53 50h1v1h-1zM43 55h1v1h-1zM0 62h1v1h-1z"/><path fill="#df6" d="M36 18h1v1h-1zM37 19h1v1h-1zM45 22h1v1h-1zM20 29h1v1h-1zM10 30h1v1h-1zM16 43h1v1h-1zM64 45h1v1h-1zM4 48h2v1h-2zM32 48h1v1h-1zM48 52h1v1h-1zM57 52h1v1h-1zM27 53h1v1h-1zM55 54h1v1h-1zM55 57h1v1h-1z"/><path fill="#5b3" d="M24 19h1v1h-1zM5 25h1v1h-1zM39 56h1v1h-1z"/><path fill="#ff6" d="M36 19h1v1h-1z"/><path fill="#3e3" d="M2 20h1v1h-1zM58 33h1v1h-1zM40 35h1v1h-1zM45 37h1v1h-1zM27 40h1v1h-1zM0 51h1v1h-1zM17 59h2v1h-2zM44 63h1v1h-1z"/><path fill="#3e4" d="M15 20h1v1h-1zM34 58h1v1h-1zM68 63h1v1h-1z"/><path fill="#9e2" d="M16 20h1v1h-1zM24 39h1v1h-1zM13 54h1v1h-1z"/><path fill="#9e6" d="M50 20h1v1h-1zM54 20h1v1h-1zM8 37h1v1h-1zM65 47h1v1h-1zM57 50h1v1h-1zM15 52h1v1h-1zM61 56h1v1h-1zM57 59h1v1h-1z"/><path fill="#af9" d="M6 22h1v1h-1zM24 52h1v1h-1zM47 55h1v1h-1zM40 62h1v1h-1z"/><path fill="#4c4" d="M14 22h1v1h-1zM55 49h1v1h-1zM62 59h1v1h-1z"/><path fill="#be8" d="M46 22h1v1h-1zM21 29h1v1h-1zM25 53h1v1h-1zM12 55h1v1h-1z"/><path fill="#2b3" d="M1 24h1v1h-1zM20 38h1v1h-1zM54 51h1v1h-1zM33 53h1v1h-1z"/><path fill="#5e1" d="M61 24h1v1h-1zM42 26h1v1h-1zM39 27h1v1h-1zM35 58h1v1h-1zM54 61h1v1h-1zM14 62h1v1h-1z"/><path fill="#493" d="M10 25h1v1h-1zM16 47h1v1h-1zM45 52h1v1h-1z"/><path fill="#ef5" d="M22 25h1v1h-1zM56 56h1v1h-1zM38 59h1v1h-1z"/><path fill="#efa" d="M23 26h1v1h-1zM21 28h1v1h-1z"/><path fill="#ce7" d="M23 27h1v1h-1z"/><path fill="#6d1" d="M56 28h1v1h-1zM54 37h1v1h-1zM15 39h1v1h-1z"/><path fill="#4a1" d="M66 28h1v1h-1zM3 55h1v1h-1zM37 61h1v1h-1z"/><path fill="#ce8" d="M15 29h1v1h-1zM24 46h1v1h-1z"/><path fill="#ee7" d="M21 30h1v1h-1zM7 36h1v1h-1zM57 55h1v1h-1z"/><path fill="#2b1" d="M10 32h1v1h-1z"/><path fill="#5c1" d="M58 32h1v1h-1zM54 39h1v1h-1zM24 58h1v1h-1z"/><path fill="#3e1" d="M63 33h1v1h-1z"/><path fill="#6c1" d="M34 34h1v1h-1z"/><path fill="#be3" d="M68 35h1v1h-1zM32 44h1v1h-1zM51 55h1v1h-1zM6 59h1v1h-1z"/><path fill="#ff9" d="M6 37h1v1h-1zM33 45h1v1h-1z"/><path fill="#db6" d="M52 44h1v1h-1zM52 45h1v1h-1z"/><path fill="#ec6" d="M53 44h1v1h-1z"/><path fill="#fe4" d="M54 44h1v1h-1zM54 45h1v1h-1z"/><path fill="#e94" d="M55 44h1v1h-1zM55 45h1v1h-1z"/><path fill="#d55" d="M56 44h1v1h-1zM56 45h1v1h-1z"/><path fill="#af2" d="M3 45h1v1h-1z"/><path fill="#de8" d="M24 45h1v1h-1z"/><path fill="#d86" d="M53 45h1v1h-1z"/><path fill="#624" d="M57 45h1v1h-1z"/><path fill="#9f8" d="M22 46h1v1h-1z"/><path fill="#efb" d="M20 47h1v1h-1zM20 48h1v1h-1z"/><path fill="#fff" d="M21 47h4v1h-4zM21 48h4v1h-4z"/><path fill="#a99" d="M25 47h1v1h-1zM25 48h1v1h-1z"/><path fill="#dfa" d="M23 49h1v1h-1z"/><path fill="#cea" d="M11 50h1v1h-1zM57 56h1v1h-1zM47 62h1v1h-1z"/><path fill="#7d2" d="M37 51h1v1h-1z"/><path fill="#ae9" d="M24 53h1v1h-1z"/><path fill="#6e6" d="M62 53h1v1h-1z"/><path fill="#ff8" d="M58 54h1v1h-1z"/><path fill="#231" d="M39 55h1v1h-1z"/><path fill="#4f1" d="M11 56h1v1h-1z"/><path fill="#8f7" d="M4 57h1v1h-1z"/><path fill="#ee6" d="M5 57h1v1h-1z"/><path fill="#ee5" d="M24 62h1v1h-1z"/></svg>
<div class="r" style="left:470px;top:239px;width:335px;height:1px;background:#ff0000;"></div>
<div class="r" style="left:820px;top:239px;width:294px;height:1px;background:#ff0000;"></div>
<div class="r" style="left:812px;top:87px;width:1px;height:145px;background:#ff0000;"></div>
<div class="r" style="left:812px;top:247px;width:1px;height:144px;background:#ff0000;"></div>
<div class="r" style="left:811px;top:238px;width:3px;height:3px;border:1px solid #ff0000;background:#000;"></div>
<div class="r" style="left:690px;top:234px;width:1px;height:11px;background:#ff0000;"></div>
<div class="r" style="left:687px;top:241px;width:43px;height:18px;background:rgba(16,32,8,0.72);"></div>
<div class="r" style="left:690px;top:234px;width:1px;height:11px;background:#ff0000;"></div>
<div class="t" style="left:691px;top:244.5px;font-family:'Liberation Mono',monospace;font-size:13px;line-height:15px;color:#ff1010;">1.0 m</div>
<svg class="r" style="left:451px;top:387px;" width="2" height="18" viewBox="0 0 2 18"><rect x="0" y="0" width="1.2" height="1.2" fill="#b8b8b8"/><rect x="0" y="3" width="1.2" height="1.2" fill="#b8b8b8"/><rect x="0" y="6" width="1.2" height="1.2" fill="#b8b8b8"/><rect x="0" y="9" width="1.2" height="1.2" fill="#b8b8b8"/><rect x="0" y="12" width="1.2" height="1.2" fill="#b8b8b8"/><rect x="0" y="15" width="1.2" height="1.2" fill="#b8b8b8"/></svg>
<svg class="r" style="left:1119.6px;top:387px;" width="2" height="18" viewBox="0 0 2 18"><rect x="0" y="0" width="1.2" height="1.2" fill="#b8b8b8"/><rect x="0" y="3" width="1.2" height="1.2" fill="#b8b8b8"/><rect x="0" y="6" width="1.2" height="1.2" fill="#b8b8b8"/><rect x="0" y="9" width="1.2" height="1.2" fill="#b8b8b8"/><rect x="0" y="12" width="1.2" height="1.2" fill="#b8b8b8"/><rect x="0" y="15" width="1.2" height="1.2" fill="#b8b8b8"/></svg>
<div class="r" style="left:456px;top:396px;width:13px;height:306px;background:#6666cc;border-radius:0 0 0 5px;"></div>
<div class="r" style="left:468px;top:396px;width:1px;height:306px;background:#5252ba;"></div>
<div class="r" style="left:469px;top:428px;width:646px;height:274px;background:#f0f0f0;border-right:1px solid #000;border-bottom:1px solid #000;border-radius:0 0 5px 0;"></div>
<div class="r" style="left:469px;top:396px;width:646px;height:32px;background:linear-gradient(#fbfbfb,#f3f3f3);"></div>
<div class="r" style="left:469px;top:427px;width:646px;height:1px;background:#c4c4c4;"></div>
<div class="r" style="left:469px;top:428px;width:646px;height:1px;background:#fafafa;"></div>
<svg class="r" style="left:456px;top:396px;" width="13" height="25" viewBox="0 0 13 25"><rect x="0.5" y="0.5" width="12" height="11.6" rx="2" fill="#f2f2f2" stroke="#a4a4a4" stroke-width="1"/><rect x="2.4" y="2.2" width="8.2" height="8.2" rx="1.6" fill="#f4f4f4" stroke="#5c5c5c" stroke-width="0.9"/><path d="M4.3 4.1l4.4 4.4M8.7 4.1l-4.4 4.4" stroke="#5c5c5c" stroke-width="1.2"/><rect x="0.5" y="13.3" width="12" height="11.4" rx="2" fill="#f2f2f2" stroke="#a4a4a4" stroke-width="1"/><rect x="2.4" y="15" width="8.2" height="8.2" rx="1.6" fill="#f4f4f4" stroke="#707070" stroke-width="0.9"/><rect x="5.4" y="16.8" width="3.4" height="3.2" fill="#f4f4f4" stroke="#909090" stroke-width="0.7"/><rect x="4.2" y="18.4" width="3.4" height="3.2" fill="#f4f4f4" stroke="#909090" stroke-width="0.7"/><path d="M8 18.6v2.6l1.6-1.3Z" fill="#909090"/></svg>
<div class="t" style="left:457px;top:594px;width:13px;height:0;font-size:11px;color:#fff;"><div style="position:absolute;left:0;top:0;transform-origin:0 0;transform:rotate(-90deg);white-space:nowrap;line-height:13px;letter-spacing:-0.06px;">SpectralLibrary #1</div></div>
<svg class="r" style="left:474px;top:404px;" width="5" height="18" viewBox="0 0 5 18"><rect x="0" y="0" width="1.2" height="1.2" fill="#c4c4c4"/><rect x="3" y="0" width="1.2" height="1.2" fill="#c4c4c4"/><rect x="0" y="3" width="1.2" height="1.2" fill="#c4c4c4"/><rect x="3" y="3" width="1.2" height="1.2" fill="#c4c4c4"/><rect x="0" y="6" width="1.2" height="1.2" fill="#c4c4c4"/><rect x="3" y="6" width="1.2" height="1.2" fill="#c4c4c4"/><rect x="0" y="9" width="1.2" height="1.2" fill="#c4c4c4"/><rect x="3" y="9" width="1.2" height="1.2" fill="#c4c4c4"/><rect x="0" y="12" width="1.2" height="1.2" fill="#c4c4c4"/><rect x="3" y="12" width="1.2" height="1.2" fill="#c4c4c4"/><rect x="0" y="15" width="1.2" height="1.2" fill="#c4c4c4"/><rect x="3" y="15" width="1.2" height="1.2" fill="#c4c4c4"/></svg>
<svg class="r" style="left:486px;top:403px;" width="15" height="15" viewBox="0 0 16 16"><rect x="0.6" y="0.6" width="14" height="14" rx="3" fill="#5e9c5e" stroke="#4c864c" stroke-width="0.7"/><path d="M7.6 2.8v9.6M2.8 7.6h9.6" stroke="#fff" stroke-width="2.6"/></svg>
<svg class="r" style="left:510px;top:410px;" width="8" height="5" viewBox="0 0 8 5"><path d="M0 0 H8 L4 4.5Z" fill="#505050"/></svg>
<svg class="r" style="left:525px;top:403px;" width="18" height="18" viewBox="0 0 18 18"><path d="M0.5 9.4V13.0A7.0 2.2 0 0 0 14.5 13.0V9.4Z" fill="#f4300c"/><path d="M0.5 6.2V9.4A7.0 2.2 0 0 0 14.5 9.4V6.2Z" fill="#6cd818"/><path d="M0.5 2.6V6.2A7.0 2.2 0 0 0 14.5 6.2V2.6Z" fill="#3c6cac"/><ellipse cx="7.5" cy="2.6" rx="7.0" ry="2.2" fill="#74a4dc" stroke="#4878b4" stroke-width="0.4"/><rect x="10.6" y="10.6" width="6.4" height="6.4" rx="1.4" fill="#5e9c5e" stroke="#fff" stroke-width="0.5"/><path d="M13.8 11.8v4M11.8 13.8h4" stroke="#fff" stroke-width="1.3"/></svg>
<svg class="r" style="left:549px;top:410px;" width="8" height="5" viewBox="0 0 8 5"><path d="M0 0 H8 L4 4.5Z" fill="#505050"/></svg>
<svg class="r" style="left:564px;top:403px;" width="18" height="18" viewBox="0 0 18 18"><path d="M0.5 9.4V13.0A7.0 2.2 0 0 0 14.5 13.0V9.4Z" fill="#f4300c"/><path d="M0.5 6.2V9.4A7.0 2.2 0 0 0 14.5 9.4V6.2Z" fill="#6cd818"/><path d="M0.5 2.6V6.2A7.0 2.2 0 0 0 14.5 6.2V2.6Z" fill="#3c6cac"/><ellipse cx="7.5" cy="2.6" rx="7.0" ry="2.2" fill="#74a4dc" stroke="#4878b4" stroke-width="0.4"/><rect x="10.6" y="10.6" width="6.6" height="6.6" rx="0.8" fill="#88a4d0" stroke="#6484b4" stroke-width="0.6"/><rect x="12" y="11" width="3.8" height="2.4" fill="#d8e4f4"/><rect x="12.2" y="14.6" width="3.4" height="2.4" fill="#e8eef8"/></svg>
<svg class="r" style="left:588px;top:410px;" width="8" height="5" viewBox="0 0 8 5"><path d="M0 0 H8 L4 4.5Z" fill="#505050"/></svg>
<div class="r" style="left:602px;top:405px;width:1px;height:15px;background:#d0d0d0;"></div>
<div class="r" style="left:606px;top:401px;width:124px;height:22px;background:linear-gradient(#fafafa,#ececec);border:1px solid #a8a8a8;border-radius:3px;"></div>
<div class="t" style="left:610.5px;top:406.14px;font-size:12px;line-height:14px;letter-spacing:-0.670px;">Nanometers [nm]</div>
<svg class="r" style="left:714.5px;top:410px;" width="8" height="5" viewBox="0 0 8 5"><path d="M0 0 H8 L4 4.5Z" fill="#505050"/></svg>
<svg class="r" style="left:735px;top:403px;" width="18" height="18" viewBox="0 0 18 18"><circle cx="3" cy="4.4" r="1.3" fill="none" stroke="#707070" stroke-width="0.7"/><circle cx="11.6" cy="1.4" r="1.1" fill="none" stroke="#707070" stroke-width="0.7"/><circle cx="1.8" cy="13" r="1.3" fill="none" stroke="#707070" stroke-width="0.7"/><path d="M7 7.4 L11.6 8.6 L12.4 13.4 L7.6 15.8 L5.4 12Z" fill="#e8c828"/><path d="M5 11 L9 12.6 L8.6 16.4 L4.2 14.4Z" fill="#e02c2c"/><path d="M6.2 8.6 L10 9.4 L9.4 12.6 L5.6 11.6Z" fill="#4c78c8"/><path d="M8 12.4 L12.6 10.4 L14.6 14 L10.4 16.6Z" fill="#c89858"/><path d="M12.4 11.4 L17.4 5.6" stroke="#d88c18" stroke-width="1.6"/></svg>
<svg class="r" style="left:763px;top:404px;" width="17" height="17" viewBox="0 0 17 17"><ellipse cx="9.6" cy="10" rx="6.4" ry="5.6" fill="#f8f8f8" stroke="#606060" stroke-width="0.8" stroke-dasharray="2 1.2"/><ellipse cx="9.6" cy="10" rx="4" ry="3.4" fill="#5c88c8"/><path d="M6.4 6.6 L14.6 14.6" stroke="#3c3c3c" stroke-width="3.6"/><path d="M6.8 7 L14.2 14.2" stroke="#e8c83c" stroke-width="2.2"/><path d="M1.2 3.6 C0.6 1.8 2.4 0.4 4 1 L3 2.8 L4.6 4 L6 2.6 C6.8 4.4 5.4 6.2 3.6 5.8 L6.4 8.4" fill="#f4f4f4" stroke="#606060" stroke-width="0.8"/></svg>
<svg class="r" style="left:799px;top:403px;" width="13" height="18" viewBox="0 0 13 18"><g transform="scale(0.76)"><path d="M11.6 1 L16 3.4 L5.4 21 L1 18.6 Z" fill="#f0dc28" stroke="#a89410" stroke-width="0.6"/><path d="M13.6 2.2 L3.2 19.8" stroke="#a89410" stroke-width="0.6"/><path d="M1 18.6 L5.4 21 L0.8 23.8 Z" fill="#ececec" stroke="#808080" stroke-width="0.6"/><path d="M0.8 23.8 L1 21.8 L2.4 22.8Z" fill="#303030"/><path d="M11.6 1 L16 3.4 L15.2 4.8 L10.8 2.4Z" fill="#f0f0f0" stroke="#a89410" stroke-width="0.5"/></g></svg>
<svg class="r" style="left:824px;top:403px;" width="17" height="17" viewBox="0 0 17 17"><rect x="0.4" y="1.6" width="15.6" height="14" fill="#e4e4dc"/><path d="M0.4 5.2h15.6M0.4 8.8h15.6M0.4 12.4h15.6" stroke="#f4f4f0" stroke-width="0.9"/><g transform="translate(5.2 0.2) scale(0.66)"><path d="M11.6 1 L16 3.4 L5.4 21 L1 18.6 Z" fill="#e4dcd8" stroke="#d0c8c4" stroke-width="0.6"/><path d="M13.6 2.2 L3.2 19.8" stroke="#d0c8c4" stroke-width="0.6"/><path d="M1 18.6 L5.4 21 L0.8 23.8 Z" fill="#ececec" stroke="#c8c8c8" stroke-width="0.6"/><path d="M0.8 23.8 L1 21.8 L2.4 22.8Z" fill="#c0c0c0"/><path d="M11.6 1 L16 3.4 L15.2 4.8 L10.8 2.4Z" fill="#f0f0f0" stroke="#d0c8c4" stroke-width="0.5"/></g></svg>
<svg class="r" style="left:851px;top:403px;" width="17" height="17" viewBox="0 0 17 17"><rect x="0.6" y="0.8" width="14.6" height="14.8" rx="1.2" fill="#dcdcdc" stroke="#d4d4d4" stroke-width="0.6"/><rect x="3" y="1.4" width="9.6" height="6" fill="#ececec"/><rect x="4" y="10" width="8" height="5.4" fill="#ececec"/><rect x="5" y="11" width="2" height="3.4" fill="#d4d4d8"/><g transform="translate(8.6 5.6) scale(0.5)"><path d="M11.6 1 L16 3.4 L5.4 21 L1 18.6 Z" fill="#e4dcd8" stroke="#d0c8c4" stroke-width="0.6"/><path d="M13.6 2.2 L3.2 19.8" stroke="#d0c8c4" stroke-width="0.6"/><path d="M1 18.6 L5.4 21 L0.8 23.8 Z" fill="#ececec" stroke="#c8c8c8" stroke-width="0.6"/><path d="M0.8 23.8 L1 21.8 L2.4 22.8Z" fill="#c0c0c0"/><path d="M11.6 1 L16 3.4 L15.2 4.8 L10.8 2.4Z" fill="#f0f0f0" stroke="#d0c8c4" stroke-width="0.5"/></g></svg>
<svg class="r" style="left:878px;top:403px;" width="17" height="17" viewBox="0 0 17 17"><path d="M2.65 8.75A5.4 5.4 0 0 1 12.26 4.68" fill="none" stroke="#3c84dc" stroke-width="3.3"/><path d="M14.69 1.98L9.34 6.80L15.09 7.81Z" fill="#3c84dc"/><path d="M13.35 7.25A5.4 5.4 0 0 1 3.74 11.32" fill="none" stroke="#3c84dc" stroke-width="3.3"/><path d="M1.31 14.02L6.66 9.20L0.91 8.19Z" fill="#3c84dc"/><path d="M3.4 6.4A4.9 4.9 0 0 1 9 3" fill="none" stroke="#8cbcf4" stroke-width="1"/></svg>
<div class="r" style="left:903px;top:406px;width:1px;height:13px;background:#d4d4d4;"></div>
<svg class="r" style="left:912px;top:404px;" width="17" height="17" viewBox="0 0 17 17"><rect x="0.5" y="0.5" width="14" height="12.6" fill="#e8e8e8" stroke="#dcdcdc" stroke-width="0.7"/><rect x="0.8" y="0.8" width="13.4" height="3" fill="#dcdcdc"/><path d="M0.5 6.6h14M0.5 9.8h14M5 3.8v9M10 3.8v9" stroke="#f4f4f4" stroke-width="0.8"/><rect x="8.6" y="8.6" width="7.8" height="7.8" rx="1.2" fill="#d8d8d0"/><path d="M10.4 10.4l4.2 4.2M14.6 10.4l-4.2 4.2" stroke="#f4f4f0" stroke-width="1.3"/></svg>
<svg class="r" style="left:939px;top:404px;" width="15" height="17" viewBox="0 0 15 17"><path d="M0.6 3.4h13.2v1.6H0.6Z" fill="#dcc8c8"/><path d="M3.6 0.8h7.2v2.6H3.6Z" fill="#e4d4d4"/><path d="M1.6 5h11.2l-0.8 11H2.4Z" fill="#e8dcdc" stroke="#dcc8c8" stroke-width="0.8"/><path d="M5 6.6v8M7.2 6.6v8M9.4 6.6v8" stroke="#d4bcbc" stroke-width="1"/></svg>
<svg class="r" style="left:966px;top:405px;" width="17" height="15" viewBox="0 0 17 15"><path d="M0.6 1.4 L11.4 8.6M0.8 6 L11.6 4.4" stroke="#d8d8d8" stroke-width="1.5"/><circle cx="13.4" cy="3.4" r="2.2" fill="none" stroke="#dcc8c8" stroke-width="1.2"/><circle cx="13.4" cy="10.6" r="2.4" fill="none" stroke="#dcc8c8" stroke-width="1.2"/></svg>
<svg class="r" style="left:994px;top:404px;" width="14" height="17" viewBox="0 0 14 17"><path d="M4.6 0.6h5.4l3 3v9H4.6Z" fill="#ececec" stroke="#d8d8d8" stroke-width="0.8"/><path d="M0.6 4.2h5.4l3 3v9H0.6Z" fill="#f0f0f0" stroke="#d4d4d4" stroke-width="0.8"/><path d="M2.2 9.4h4.6M2.2 11.4h4.6M2.2 13.4h4.6" stroke="#dcdcdc" stroke-width="0.7"/></svg>
<svg class="r" style="left:1021px;top:403px;" width="14" height="18" viewBox="0 0 14 18"><rect x="0.6" y="1.6" width="12.4" height="15.6" rx="1" fill="#e0e0dc" stroke="#d4d4d0" stroke-width="0.8"/><rect x="3.4" y="0.4" width="6.8" height="2.6" fill="#d0d0cc"/><rect x="2.4" y="4" width="8.8" height="11.6" fill="#f0f0f0"/><path d="M3.6 7h6M3.6 9.4h6M3.6 11.8h4" stroke="#dcdcdc" stroke-width="0.7"/></svg>
<div class="r" style="left:1045px;top:406px;width:1px;height:13px;background:#d4d4d4;"></div>
<div class="r" style="left:1059px;top:409.5px;width:11px;height:10.5px;background:#f4dc3c;border:1px solid #c8b018;border-radius:1.5px;"></div>
<div class="t" style="left:1055px;top:400px;font-family:'Liberation Serif',serif;font-size:16.5px;line-height:18px;color:#4a2864;">Ɛ</div>
<svg class="r" style="left:1103px;top:409px;" width="8" height="6" viewBox="0 0 8 6"><path d="M0.6 0.4 L3 3 L0.6 5.6M4.4 0.4 L6.8 3 L4.4 5.6" fill="none" stroke="#303030" stroke-width="1.1"/></svg>
<div class="r" style="left:469px;top:429px;width:642px;height:251px;background:#000000;"></div>
<svg class="r" style="left:0;top:0" width="1366" height="725" viewBox="0 0 1366 725"><path d="M521.5 429V642.5H1111" fill="none" stroke="#f0f0f0" stroke-width="1"/><path d="M522 639.2h3" stroke="#909090" stroke-width="1"/><path d="M522 625.4h6" stroke="#f0f0f0" stroke-width="1"/><path d="M522 611.6h3" stroke="#909090" stroke-width="1"/><path d="M522 597.8h3" stroke="#909090" stroke-width="1"/><path d="M522 584.0h3" stroke="#909090" stroke-width="1"/><path d="M522 570.2h3" stroke="#909090" stroke-width="1"/><path d="M522 556.4h6" stroke="#f0f0f0" stroke-width="1"/><path d="M522 542.6h3" stroke="#909090" stroke-width="1"/><path d="M522 528.8h3" stroke="#909090" stroke-width="1"/><path d="M522 515.0h3" stroke="#909090" stroke-width="1"/><path d="M522 501.2h3" stroke="#909090" stroke-width="1"/><path d="M522 487.4h6" stroke="#f0f0f0" stroke-width="1"/><path d="M522 473.6h3" stroke="#909090" stroke-width="1"/><path d="M522 459.8h3" stroke="#909090" stroke-width="1"/><path d="M522 446.0h3" stroke="#909090" stroke-width="1"/><path d="M522 432.2h3" stroke="#909090" stroke-width="1"/><path d="M549.6 642v-4" stroke="#c0c0c0" stroke-width="1"/><path d="M638.5 642v-4" stroke="#c0c0c0" stroke-width="1"/><path d="M727.5 642v-4" stroke="#c0c0c0" stroke-width="1"/><path d="M816.4 642v-4" stroke="#c0c0c0" stroke-width="1"/><path d="M905.3 642v-4" stroke="#c0c0c0" stroke-width="1"/><path d="M994.2 642v-4" stroke="#c0c0c0" stroke-width="1"/><path d="M1083.2 642v-4" stroke="#c0c0c0" stroke-width="1"/><path d="M553.5 429V642" stroke="#ffffff" stroke-width="2"/><path d="M548.2 618.7 L550.3 618.4 L553.4 619.6 L555.8 622.0 L557.9 621.7 L561.0 619.6 L565.5 620.5 L569.1 620.5 L573.1 619.9 L577.6 621.1 L580.7 619.3 L583.7 616.9 L588.3 616.2 L595.8 615.0 L601.9 614.7 L608.0 614.4 L615.6 615.0 L623.1 615.0 L629.2 614.1 L635.3 613.5 L639.8 612.9 L644.4 611.4 L648.9 609.3 L653.5 606.5 L658.0 603.8 L662.6 601.4 L667.1 598.7 L671.7 596.8 L676.2 595.6 L680.8 595.0 L685.3 594.1 L688.4 593.8 L691.4 594.4 L695.9 595.6 L702.0 597.1 L708.1 598.0 L717.2 599.0 L726.3 599.9 L735.4 601.1 L744.5 602.0 L753.6 602.3 L762.7 602.3 L770.3 603.5 L777.8 605.0 L785.4 606.8 L790.0 608.3 L799.0 608.3 L802.6 606.8 L806.1 604.0 L809.7 600.0 L813.3 595.0 L816.9 587.8 L820.5 578.9 L824.1 569.2 L827.7 559.1 L831.2 547.7 L834.8 535.8 L838.4 524.0 L842.0 512.5 L845.6 501.7 L849.2 492.8 L852.8 484.5 L856.4 478.4 L859.2 474.8 L861.7 473.0 L864.2 471.6 L866.0 469.5 L868.2 460.5 L869.6 459.4 L871.1 464.1 L874.3 483.1 L876.1 474.8 L877.9 467.7 L880.4 466.9 L883.3 465.9 L887.6 464.4 L892.2 462.3 L894.7 464.1 L897.6 463.4 L903.0 462.3 L908.4 461.6 L912.0 459.4 L915.5 456.9 L918.4 458.7 L920.9 462.3 L923.4 459.4 L926.3 458.7 L929.2 461.6 L931.7 462.3 L934.2 458.7 L937.1 455.8 L939.2 458.0 L940.7 458.7 L942.8 455.1 L944.2 454.4 L947.1 457.3 L949.6 456.9 L952.1 455.1 L955.0 455.8 L959.3 454.4 L964.0 453.3 L969.3 453.7 L974.7 453.3 L976.2 455.8 L977.2 459.4 L978.7 453.7 L980.1 450.8 L983.7 449.7 L987.3 447.2 L990.2 448.7 L992.7 452.2 L994.8 458.7 L997.0 465.2 L998.4 458.0 L999.8 452.2 L1002.3 455.8 L1005.2 460.5 L1008.1 458.0 L1010.6 456.9 L1012.4 459.4 L1014.2 460.5 L1016.0 454.4 L1017.8 449.7 L1019.6 455.8 L1021.4 460.5 L1022.4 455.1 L1023.5 450.8 L1024.2 465.9 L1024.9 483.8 L1026.0 496.4 L1026.7 501.7 L1028.2 502.5 L1029.6 501.7 L1030.3 483.8 L1031.4 467.7 L1032.8 467.3 L1033.9 469.5 L1035.7 480.2 L1037.5 492.8 L1039.3 487.4 L1041.1 483.8 L1043.2 496.4 L1045.4 508.9 L1047.5 492.8 L1050.1 476.6 L1052.6 485.6 L1055.4 494.6 L1057.2 486.7 L1059.0 478.4 L1061.2 483.8 L1063.3 489.2 L1065.1 483.8 L1066.9 480.2 L1068.7 483.8 L1070.5 487.4 L1072.3 484.5 L1074.1 483.1 L1075.5 486.7 L1077.0 489.2 L1078.4 486.0 L1079.8 483.8 L1080.5 488.1 L1081.3 491.0 L1082.3 483.8 L1083.4 474.8" fill="none" stroke="#00ff00" stroke-width="1" stroke-linejoin="round" shape-rendering="crispEdges"/><path d="M548.2 621.7 L550.3 622.3 L553.4 623.2 L557.9 623.5 L565.5 624.1 L568.5 623.2 L571.6 624.1 L580.7 624.1 L595.8 624.1 L611.0 624.4 L614.0 624.7 L617.1 624.1 L632.2 624.4 L635.3 625.0 L638.3 624.1 L653.5 624.1 L662.6 623.5 L665.6 624.1 L677.7 623.5 L689.9 623.2 L702.0 623.8 L708.1 623.2 L714.1 624.1 L720.2 623.2 L729.3 623.8 L738.4 623.2 L744.5 624.1 L753.6 623.2 L762.7 623.8 L771.8 623.5 L780.9 624.1 L786.9 623.5 L790.0 624.4 L800.8 624.4 L813.3 624.4 L818.7 621.9 L824.1 620.1 L829.5 618.3 L834.8 617.2 L840.2 615.8 L844.5 614.0 L849.2 612.2 L851.7 611.5 L854.6 610.4 L857.4 610.4 L859.9 609.3 L863.5 607.9 L867.1 610.1 L870.7 608.3 L874.3 612.2 L877.9 607.9 L883.3 606.5 L888.6 608.3 L894.0 606.5 L899.4 607.9 L904.8 605.8 L910.2 607.9 L915.5 605.8 L920.9 608.3 L924.5 605.8 L928.1 607.9 L931.7 605.8 L935.3 608.3 L938.9 604.7 L942.4 607.9 L946.0 604.3 L949.6 606.5 L953.2 603.6 L956.8 607.2 L960.4 604.7 L964.0 606.5 L967.6 602.9 L971.1 599.3 L974.0 605.8 L976.5 600.4 L980.1 606.5 L983.7 602.2 L987.3 605.0 L990.9 603.6 L994.5 607.6 L998.0 605.0 L1001.6 606.5 L1005.2 605.8 L1008.8 608.6 L1012.4 609.3 L1016.0 605.0 L1018.8 606.5 L1021.4 601.5 L1023.9 605.0 L1026.0 597.9 L1028.5 605.8 L1031.0 604.3 L1033.9 612.9 L1037.5 607.6 L1041.1 611.1 L1044.7 606.5 L1048.3 612.2 L1051.8 613.7 L1057.2 610.1 L1062.6 607.2 L1066.2 607.9 L1069.1 603.6 L1071.6 607.2 L1074.1 602.2 L1076.2 607.2 L1079.1 597.2 L1081.3 605.8 L1083.4 606.5" fill="none" stroke="#00ff00" stroke-width="1" stroke-linejoin="round" shape-rendering="crispEdges"/></svg>
<div class="t" style="left:510.75px;top:619.09px;font-size:11px;line-height:13px;letter-spacing:-0.369px;color:#f0f0f0;">0</div>
<div class="t" style="left:493.5px;top:550.09px;font-size:11px;line-height:13px;letter-spacing:-0.369px;color:#f0f0f0;">1000</div>
<div class="t" style="left:493.5px;top:481.09px;font-size:11px;line-height:13px;letter-spacing:-0.369px;color:#f0f0f0;">2000</div>
<div class="t" style="left:540.975px;top:644.19px;font-size:11px;line-height:13px;letter-spacing:-0.369px;color:#f0f0f0;">400</div>
<div class="t" style="left:629.905px;top:644.19px;font-size:11px;line-height:13px;letter-spacing:-0.369px;color:#f0f0f0;">500</div>
<div class="t" style="left:718.835px;top:644.19px;font-size:11px;line-height:13px;letter-spacing:-0.369px;color:#f0f0f0;">600</div>
<div class="t" style="left:807.7650000000001px;top:644.19px;font-size:11px;line-height:13px;letter-spacing:-0.369px;color:#f0f0f0;">700</div>
<div class="t" style="left:896.6949999999999px;top:644.19px;font-size:11px;line-height:13px;letter-spacing:-0.369px;color:#f0f0f0;">800</div>
<div class="t" style="left:985.625px;top:644.19px;font-size:11px;line-height:13px;letter-spacing:-0.369px;color:#f0f0f0;">900</div>
<div class="t" style="left:1071.68px;top:644.19px;font-size:11px;line-height:13px;letter-spacing:-0.369px;color:#f0f0f0;">1000</div>
<div class="t" style="left:771px;top:666.69px;font-size:11px;line-height:13px;letter-spacing:0.056px;color:#f0f0f0;">Wavelength [nm]</div>
<div class="t" style="left:976px;top:434.19px;font-size:11px;line-height:13px;letter-spacing:0.131px;color:#f0f0f0;">x:404.67895 y:-705.64995</div>
<div class="t" style="left:470px;top:582.5px;width:13px;height:0;font-size:11px;color:#f0f0f0;"><div style="position:absolute;left:0;top:0;transform-origin:0 0;transform:rotate(-90deg);white-space:nowrap;line-height:13px;letter-spacing:-0.05px;">Y (Spectral Value)</div></div>
<div class="t" style="left:471px;top:688.44px;font-size:12px;line-height:14px;letter-spacing:-0.140px;">2/0/2</div>
<svg class="r" style="left:1113px;top:548px;" width="2" height="18" viewBox="0 0 2 18"><rect x="0" y="0" width="1.2" height="1.2" fill="#b8b8b8"/><rect x="0" y="3" width="1.2" height="1.2" fill="#b8b8b8"/><rect x="0" y="6" width="1.2" height="1.2" fill="#b8b8b8"/><rect x="0" y="9" width="1.2" height="1.2" fill="#b8b8b8"/><rect x="0" y="12" width="1.2" height="1.2" fill="#b8b8b8"/><rect x="0" y="15" width="1.2" height="1.2" fill="#b8b8b8"/></svg>
<svg class="r" style="left:667px;top:393px;" width="18" height="2" viewBox="0 0 18 2"><rect x="0" y="0" width="1.2" height="1.2" fill="#b8b8b8"/><rect x="3" y="0" width="1.2" height="1.2" fill="#b8b8b8"/><rect x="6" y="0" width="1.2" height="1.2" fill="#b8b8b8"/><rect x="9" y="0" width="1.2" height="1.2" fill="#b8b8b8"/><rect x="12" y="0" width="1.2" height="1.2" fill="#b8b8b8"/><rect x="15" y="0" width="1.2" height="1.2" fill="#b8b8b8"/></svg>
<svg class="r" style="left:1103px;top:691px;" width="10" height="10" viewBox="0 0 10 10"><rect x="7" y="0" width="1.1" height="1.1" fill="#c0c0c0"/><rect x="4.6" y="2.4" width="1.1" height="1.1" fill="#c0c0c0"/><rect x="7" y="2.4" width="1.1" height="1.1" fill="#c0c0c0"/><rect x="2.2" y="4.8" width="1.1" height="1.1" fill="#c0c0c0"/><rect x="4.6" y="4.8" width="1.1" height="1.1" fill="#c0c0c0"/><rect x="7" y="4.8" width="1.1" height="1.1" fill="#c0c0c0"/><rect x="0" y="7.2" width="1.1" height="1.1" fill="#c0c0c0"/><rect x="2.2" y="7.2" width="1.1" height="1.1" fill="#c0c0c0"/><rect x="4.6" y="7.2" width="1.1" height="1.1" fill="#c0c0c0"/></svg>
<div class="t" style="left:1127px;top:87.04px;font-size:12px;line-height:14px;letter-spacing:-0.159px;">Processing Toolbox</div>
<svg class="r" style="left:1339px;top:88px;" width="11" height="11" viewBox="0 0 11 11"><rect x="0.5" y="0.5" width="10" height="10" rx="1.6" fill="#f4f4f4" stroke="#505050" stroke-width="0.9"/><rect x="4.2" y="2.6" width="4.2" height="3.8" fill="#f4f4f4" stroke="#505050" stroke-width="0.8"/><rect x="2.6" y="4.4" width="4.2" height="3.8" fill="#f4f4f4" stroke="#505050" stroke-width="0.8"/></svg>
<svg class="r" style="left:1353px;top:88px;" width="11" height="11" viewBox="0 0 11 11"><rect x="0.5" y="0.5" width="10" height="10" rx="1.6" fill="#f4f4f4" stroke="#505050" stroke-width="0.9"/><path d="M2.8 2.8l5.4 5.4M8.2 2.8l-5.4 5.4" stroke="#282828" stroke-width="1.7"/></svg>
<svg class="r" style="left:1131px;top:110px;" width="18" height="17" viewBox="0 0 18 17"><circle cx="5" cy="5" r="2.98" fill="#dc2020"/><path d="M6.44 5.00L9.80 5.00" stroke="#dc2020" stroke-width="2.02"/><path d="M6.02 6.02L8.39 8.39" stroke="#dc2020" stroke-width="2.02"/><path d="M5.00 6.44L5.00 9.80" stroke="#dc2020" stroke-width="2.02"/><path d="M3.98 6.02L1.61 8.39" stroke="#dc2020" stroke-width="2.02"/><path d="M3.56 5.00L0.20 5.00" stroke="#dc2020" stroke-width="2.02"/><path d="M3.98 3.98L1.61 1.61" stroke="#dc2020" stroke-width="2.02"/><path d="M5.00 3.56L5.00 0.20" stroke="#dc2020" stroke-width="2.02"/><path d="M6.02 3.98L8.39 1.61" stroke="#dc2020" stroke-width="2.02"/><circle cx="5" cy="5" r="1.06" fill="#f0f0f0"/><circle cx="11.6" cy="8.6" r="2.23" fill="#707070"/><path d="M12.68 8.60L15.20 8.60" stroke="#707070" stroke-width="1.51"/><path d="M12.36 9.36L14.15 11.15" stroke="#707070" stroke-width="1.51"/><path d="M11.60 9.68L11.60 12.20" stroke="#707070" stroke-width="1.51"/><path d="M10.84 9.36L9.05 11.15" stroke="#707070" stroke-width="1.51"/><path d="M10.52 8.60L8.00 8.60" stroke="#707070" stroke-width="1.51"/><path d="M10.84 7.84L9.05 6.05" stroke="#707070" stroke-width="1.51"/><path d="M11.60 7.52L11.60 5.00" stroke="#707070" stroke-width="1.51"/><path d="M12.36 7.84L14.15 6.05" stroke="#707070" stroke-width="1.51"/><circle cx="11.6" cy="8.6" r="0.79" fill="#f0f0f0"/><circle cx="6.6" cy="12.2" r="1.74" fill="#88a8e4"/><path d="M7.44 12.20L9.40 12.20" stroke="#88a8e4" stroke-width="1.18"/><path d="M7.19 12.79L8.58 14.18" stroke="#88a8e4" stroke-width="1.18"/><path d="M6.60 13.04L6.60 15.00" stroke="#88a8e4" stroke-width="1.18"/><path d="M6.01 12.79L4.62 14.18" stroke="#88a8e4" stroke-width="1.18"/><path d="M5.76 12.20L3.80 12.20" stroke="#88a8e4" stroke-width="1.18"/><path d="M6.01 11.61L4.62 10.22" stroke="#88a8e4" stroke-width="1.18"/><path d="M6.60 11.36L6.60 9.40" stroke="#88a8e4" stroke-width="1.18"/><path d="M7.19 11.61L8.58 10.22" stroke="#88a8e4" stroke-width="1.18"/><circle cx="6.6" cy="12.2" r="0.62" fill="#f0f0f0"/><path d="M12.4 13.6h5l-2.5 2.6Z" fill="#404040"/></svg>
<svg class="r" style="left:1157px;top:110px;" width="18" height="17" viewBox="0 0 18 17"><path d="M7.6 0.6 C4.6 0.6 4.2 1.8 4.2 3 V4.8 H8 V5.6 H2.6 C0.8 5.6 0.2 7.4 0.2 8.8 C0.2 10.4 0.8 12 2.6 12 H4 V9.8 C4 8.4 5 7.6 6.4 7.6 H10 C11.2 7.6 11.8 6.8 11.8 5.8 V3 C11.8 1.4 10.4 0.6 7.6 0.6Z" fill="#3c74ac"/><path d="M8 15.2 C11 15.2 11.4 14 11.4 12.8 V11 H7.6 V10.2 H13 C14.8 10.2 15.4 8.4 15.4 7 C15.4 5.4 14.8 3.8 13 3.8 H11.8 V6 C11.8 7.4 10.8 8.2 9.4 8.2 H5.8 C4.6 8.2 4 9 4 10 V12.8 C4 14.4 5.2 15.2 8 15.2Z" fill="#f8cc3c"/><circle cx="6" cy="2.6" r="0.7" fill="#fff"/><circle cx="9.6" cy="13.2" r="0.7" fill="#fff"/><path d="M11.4 14h5l-2.5 2.6Z" fill="#404040"/></svg>
<div class="r" style="left:1123px;top:134px;width:243px;height:22px;background:#ffffff;border:1px solid #a0a0a0;border-radius:3px;"></div>
<svg class="r" style="left:1131px;top:139px;" width="14" height="14" viewBox="0 0 14 14"><circle cx="5.2" cy="5.2" r="4.2" fill="none" stroke="#8c8c8c" stroke-width="1.3"/><path d="M8.2 8.4L12.4 12.6" stroke="#8c8c8c" stroke-width="1.6"/></svg>
<div class="t" style="left:1151px;top:139.64px;font-size:12px;line-height:14px;letter-spacing:-0.559px;color:#909090;">Search...</div>
<div class="r" style="left:1123px;top:156px;width:243px;height:548px;background:#ffffff;border:1px solid #a4a4a4;"></div>
<svg class="r" style="left:1132px;top:162.6px;" width="5" height="8" viewBox="0 0 5 8"><path d="M0 0 L4.5 4 L0 8Z" fill="#505050"/></svg>
<svg class="r" style="left:1147px;top:157.79999999999998px;" width="16" height="16" viewBox="0 0 16 16"><circle cx="8" cy="8" r="7" fill="#f4f4f4" stroke="#a0a0a0" stroke-width="1.1"/><path d="M8 3.4V8.2L11 10" fill="none" stroke="#a0a0a0" stroke-width="1.1"/></svg>
<div class="t" style="left:1169.3px;top:160.04px;font-size:12px;line-height:14px;letter-spacing:-0.236px;">Recently used</div>
<svg class="r" style="left:1132px;top:180.6px;" width="5" height="8" viewBox="0 0 5 8"><path d="M0 0 L4.5 4 L0 8Z" fill="#505050"/></svg>
<svg class="r" style="left:1147px;top:176.2px;" width="16" height="16" viewBox="0 0 16 16"><circle cx="7.9" cy="7.7" r="5.5" fill="none" stroke="url(#qg)" stroke-width="3"/><path d="M9.4 9.2 L13.4 12.9" stroke="#5e9c30" stroke-width="2.9" stroke-linecap="square"/><path d="M8.4 8.2 L11 10.6" stroke="#d8c048" stroke-width="2.2"/><circle cx="8" cy="7.8" r="1.5" fill="#f08424"/></svg>
<div class="t" style="left:1169.3px;top:178.04px;font-size:12px;line-height:14px;letter-spacing:-0.005px;">Cartography</div>
<svg class="r" style="left:1132px;top:198.6px;" width="5" height="8" viewBox="0 0 5 8"><path d="M0 0 L4.5 4 L0 8Z" fill="#505050"/></svg>
<svg class="r" style="left:1147px;top:194.2px;" width="16" height="16" viewBox="0 0 16 16"><circle cx="7.9" cy="7.7" r="5.5" fill="none" stroke="url(#qg)" stroke-width="3"/><path d="M9.4 9.2 L13.4 12.9" stroke="#5e9c30" stroke-width="2.9" stroke-linecap="square"/><path d="M8.4 8.2 L11 10.6" stroke="#d8c048" stroke-width="2.2"/><circle cx="8" cy="7.8" r="1.5" fill="#f08424"/></svg>
<div class="t" style="left:1169.3px;top:196.04px;font-size:12px;line-height:14px;letter-spacing:-0.423px;">Database</div>
<svg class="r" style="left:1132px;top:216.6px;" width="5" height="8" viewBox="0 0 5 8"><path d="M0 0 L4.5 4 L0 8Z" fill="#505050"/></svg>
<svg class="r" style="left:1147px;top:212.2px;" width="16" height="16" viewBox="0 0 16 16"><circle cx="7.9" cy="7.7" r="5.5" fill="none" stroke="url(#qg)" stroke-width="3"/><path d="M9.4 9.2 L13.4 12.9" stroke="#5e9c30" stroke-width="2.9" stroke-linecap="square"/><path d="M8.4 8.2 L11 10.6" stroke="#d8c048" stroke-width="2.2"/><circle cx="8" cy="7.8" r="1.5" fill="#f08424"/></svg>
<div class="t" style="left:1169.3px;top:214.04px;font-size:12px;line-height:14px;letter-spacing:-0.104px;">File tools</div>
<svg class="r" style="left:1132px;top:234.6px;" width="5" height="8" viewBox="0 0 5 8"><path d="M0 0 L4.5 4 L0 8Z" fill="#505050"/></svg>
<svg class="r" style="left:1147px;top:230.2px;" width="16" height="16" viewBox="0 0 16 16"><circle cx="7.9" cy="7.7" r="5.5" fill="none" stroke="url(#qg)" stroke-width="3"/><path d="M9.4 9.2 L13.4 12.9" stroke="#5e9c30" stroke-width="2.9" stroke-linecap="square"/><path d="M8.4 8.2 L11 10.6" stroke="#d8c048" stroke-width="2.2"/><circle cx="8" cy="7.8" r="1.5" fill="#f08424"/></svg>
<div class="t" style="left:1169.3px;top:232.04px;font-size:12px;line-height:14px;letter-spacing:0.148px;">Interpolation</div>
<svg class="r" style="left:1132px;top:252.60000000000002px;" width="5" height="8" viewBox="0 0 5 8"><path d="M0 0 L4.5 4 L0 8Z" fill="#505050"/></svg>
<svg class="r" style="left:1147px;top:248.20000000000002px;" width="16" height="16" viewBox="0 0 16 16"><circle cx="7.9" cy="7.7" r="5.5" fill="none" stroke="url(#qg)" stroke-width="3"/><path d="M9.4 9.2 L13.4 12.9" stroke="#5e9c30" stroke-width="2.9" stroke-linecap="square"/><path d="M8.4 8.2 L11 10.6" stroke="#d8c048" stroke-width="2.2"/><circle cx="8" cy="7.8" r="1.5" fill="#f08424"/></svg>
<div class="t" style="left:1169.3px;top:250.04px;font-size:12px;line-height:14px;letter-spacing:-0.156px;">Layer tools</div>
<svg class="r" style="left:1132px;top:270.6px;" width="5" height="8" viewBox="0 0 5 8"><path d="M0 0 L4.5 4 L0 8Z" fill="#505050"/></svg>
<svg class="r" style="left:1147px;top:266.20000000000005px;" width="16" height="16" viewBox="0 0 16 16"><circle cx="7.9" cy="7.7" r="5.5" fill="none" stroke="url(#qg)" stroke-width="3"/><path d="M9.4 9.2 L13.4 12.9" stroke="#5e9c30" stroke-width="2.9" stroke-linecap="square"/><path d="M8.4 8.2 L11 10.6" stroke="#d8c048" stroke-width="2.2"/><circle cx="8" cy="7.8" r="1.5" fill="#f08424"/></svg>
<div class="t" style="left:1169.3px;top:268.04px;font-size:12px;line-height:14px;letter-spacing:-0.087px;">Mesh</div>
<svg class="r" style="left:1132px;top:288.6px;" width="5" height="8" viewBox="0 0 5 8"><path d="M0 0 L4.5 4 L0 8Z" fill="#505050"/></svg>
<svg class="r" style="left:1147px;top:284.20000000000005px;" width="16" height="16" viewBox="0 0 16 16"><circle cx="7.9" cy="7.7" r="5.5" fill="none" stroke="url(#qg)" stroke-width="3"/><path d="M9.4 9.2 L13.4 12.9" stroke="#5e9c30" stroke-width="2.9" stroke-linecap="square"/><path d="M8.4 8.2 L11 10.6" stroke="#d8c048" stroke-width="2.2"/><circle cx="8" cy="7.8" r="1.5" fill="#f08424"/></svg>
<div class="t" style="left:1169.3px;top:286.04px;font-size:12px;line-height:14px;letter-spacing:-0.107px;">Network analysis</div>
<svg class="r" style="left:1132px;top:306.6px;" width="5" height="8" viewBox="0 0 5 8"><path d="M0 0 L4.5 4 L0 8Z" fill="#505050"/></svg>
<svg class="r" style="left:1147px;top:302.20000000000005px;" width="16" height="16" viewBox="0 0 16 16"><circle cx="7.9" cy="7.7" r="5.5" fill="none" stroke="url(#qg)" stroke-width="3"/><path d="M9.4 9.2 L13.4 12.9" stroke="#5e9c30" stroke-width="2.9" stroke-linecap="square"/><path d="M8.4 8.2 L11 10.6" stroke="#d8c048" stroke-width="2.2"/><circle cx="8" cy="7.8" r="1.5" fill="#f08424"/></svg>
<div class="t" style="left:1169.3px;top:304.04px;font-size:12px;line-height:14px;letter-spacing:-0.137px;">Plots</div>
<svg class="r" style="left:1132px;top:324.6px;" width="5" height="8" viewBox="0 0 5 8"><path d="M0 0 L4.5 4 L0 8Z" fill="#505050"/></svg>
<svg class="r" style="left:1147px;top:320.20000000000005px;" width="16" height="16" viewBox="0 0 16 16"><circle cx="7.9" cy="7.7" r="5.5" fill="none" stroke="url(#qg)" stroke-width="3"/><path d="M9.4 9.2 L13.4 12.9" stroke="#5e9c30" stroke-width="2.9" stroke-linecap="square"/><path d="M8.4 8.2 L11 10.6" stroke="#d8c048" stroke-width="2.2"/><circle cx="8" cy="7.8" r="1.5" fill="#f08424"/></svg>
<div class="t" style="left:1169.3px;top:322.04px;font-size:12px;line-height:14px;letter-spacing:-0.403px;">Raster analysis</div>
<svg class="r" style="left:1132px;top:342.6px;" width="5" height="8" viewBox="0 0 5 8"><path d="M0 0 L4.5 4 L0 8Z" fill="#505050"/></svg>
<svg class="r" style="left:1147px;top:338.20000000000005px;" width="16" height="16" viewBox="0 0 16 16"><circle cx="7.9" cy="7.7" r="5.5" fill="none" stroke="url(#qg)" stroke-width="3"/><path d="M9.4 9.2 L13.4 12.9" stroke="#5e9c30" stroke-width="2.9" stroke-linecap="square"/><path d="M8.4 8.2 L11 10.6" stroke="#d8c048" stroke-width="2.2"/><circle cx="8" cy="7.8" r="1.5" fill="#f08424"/></svg>
<div class="t" style="left:1169.3px;top:340.04px;font-size:12px;line-height:14px;letter-spacing:-0.226px;">Raster creation</div>
<svg class="r" style="left:1132px;top:360.6px;" width="5" height="8" viewBox="0 0 5 8"><path d="M0 0 L4.5 4 L0 8Z" fill="#505050"/></svg>
<svg class="r" style="left:1147px;top:356.20000000000005px;" width="16" height="16" viewBox="0 0 16 16"><circle cx="7.9" cy="7.7" r="5.5" fill="none" stroke="url(#qg)" stroke-width="3"/><path d="M9.4 9.2 L13.4 12.9" stroke="#5e9c30" stroke-width="2.9" stroke-linecap="square"/><path d="M8.4 8.2 L11 10.6" stroke="#d8c048" stroke-width="2.2"/><circle cx="8" cy="7.8" r="1.5" fill="#f08424"/></svg>
<div class="t" style="left:1169.3px;top:358.04px;font-size:12px;line-height:14px;letter-spacing:-0.279px;">Raster terrain analysis</div>
<svg class="r" style="left:1132px;top:378.6px;" width="5" height="8" viewBox="0 0 5 8"><path d="M0 0 L4.5 4 L0 8Z" fill="#505050"/></svg>
<svg class="r" style="left:1147px;top:374.20000000000005px;" width="16" height="16" viewBox="0 0 16 16"><circle cx="7.9" cy="7.7" r="5.5" fill="none" stroke="url(#qg)" stroke-width="3"/><path d="M9.4 9.2 L13.4 12.9" stroke="#5e9c30" stroke-width="2.9" stroke-linecap="square"/><path d="M8.4 8.2 L11 10.6" stroke="#d8c048" stroke-width="2.2"/><circle cx="8" cy="7.8" r="1.5" fill="#f08424"/></svg>
<div class="t" style="left:1169.3px;top:376.04px;font-size:12px;line-height:14px;letter-spacing:-0.254px;">Raster tools</div>
<svg class="r" style="left:1132px;top:396.6px;" width="5" height="8" viewBox="0 0 5 8"><path d="M0 0 L4.5 4 L0 8Z" fill="#505050"/></svg>
<svg class="r" style="left:1147px;top:392.20000000000005px;" width="16" height="16" viewBox="0 0 16 16"><circle cx="7.9" cy="7.7" r="5.5" fill="none" stroke="url(#qg)" stroke-width="3"/><path d="M9.4 9.2 L13.4 12.9" stroke="#5e9c30" stroke-width="2.9" stroke-linecap="square"/><path d="M8.4 8.2 L11 10.6" stroke="#d8c048" stroke-width="2.2"/><circle cx="8" cy="7.8" r="1.5" fill="#f08424"/></svg>
<div class="t" style="left:1169.3px;top:394.04px;font-size:12px;line-height:14px;letter-spacing:-0.248px;">Vector analysis</div>
<svg class="r" style="left:1132px;top:414.6px;" width="5" height="8" viewBox="0 0 5 8"><path d="M0 0 L4.5 4 L0 8Z" fill="#505050"/></svg>
<svg class="r" style="left:1147px;top:410.20000000000005px;" width="16" height="16" viewBox="0 0 16 16"><circle cx="7.9" cy="7.7" r="5.5" fill="none" stroke="url(#qg)" stroke-width="3"/><path d="M9.4 9.2 L13.4 12.9" stroke="#5e9c30" stroke-width="2.9" stroke-linecap="square"/><path d="M8.4 8.2 L11 10.6" stroke="#d8c048" stroke-width="2.2"/><circle cx="8" cy="7.8" r="1.5" fill="#f08424"/></svg>
<div class="t" style="left:1169.3px;top:412.04px;font-size:12px;line-height:14px;letter-spacing:-0.071px;">Vector creation</div>
<svg class="r" style="left:1132px;top:432.6px;" width="5" height="8" viewBox="0 0 5 8"><path d="M0 0 L4.5 4 L0 8Z" fill="#505050"/></svg>
<svg class="r" style="left:1147px;top:428.20000000000005px;" width="16" height="16" viewBox="0 0 16 16"><circle cx="7.9" cy="7.7" r="5.5" fill="none" stroke="url(#qg)" stroke-width="3"/><path d="M9.4 9.2 L13.4 12.9" stroke="#5e9c30" stroke-width="2.9" stroke-linecap="square"/><path d="M8.4 8.2 L11 10.6" stroke="#d8c048" stroke-width="2.2"/><circle cx="8" cy="7.8" r="1.5" fill="#f08424"/></svg>
<div class="t" style="left:1169.3px;top:430.04px;font-size:12px;line-height:14px;letter-spacing:-0.172px;">Vector general</div>
<svg class="r" style="left:1132px;top:450.6px;" width="5" height="8" viewBox="0 0 5 8"><path d="M0 0 L4.5 4 L0 8Z" fill="#505050"/></svg>
<svg class="r" style="left:1147px;top:446.20000000000005px;" width="16" height="16" viewBox="0 0 16 16"><circle cx="7.9" cy="7.7" r="5.5" fill="none" stroke="url(#qg)" stroke-width="3"/><path d="M9.4 9.2 L13.4 12.9" stroke="#5e9c30" stroke-width="2.9" stroke-linecap="square"/><path d="M8.4 8.2 L11 10.6" stroke="#d8c048" stroke-width="2.2"/><circle cx="8" cy="7.8" r="1.5" fill="#f08424"/></svg>
<div class="t" style="left:1169.3px;top:448.04px;font-size:12px;line-height:14px;letter-spacing:-0.026px;">Vector geometry</div>
<svg class="r" style="left:1132px;top:468.6px;" width="5" height="8" viewBox="0 0 5 8"><path d="M0 0 L4.5 4 L0 8Z" fill="#505050"/></svg>
<svg class="r" style="left:1147px;top:464.20000000000005px;" width="16" height="16" viewBox="0 0 16 16"><circle cx="7.9" cy="7.7" r="5.5" fill="none" stroke="url(#qg)" stroke-width="3"/><path d="M9.4 9.2 L13.4 12.9" stroke="#5e9c30" stroke-width="2.9" stroke-linecap="square"/><path d="M8.4 8.2 L11 10.6" stroke="#d8c048" stroke-width="2.2"/><circle cx="8" cy="7.8" r="1.5" fill="#f08424"/></svg>
<div class="t" style="left:1169.3px;top:466.04px;font-size:12px;line-height:14px;letter-spacing:-0.147px;">Vector overlay</div>
<svg class="r" style="left:1132px;top:486.6px;" width="5" height="8" viewBox="0 0 5 8"><path d="M0 0 L4.5 4 L0 8Z" fill="#505050"/></svg>
<svg class="r" style="left:1147px;top:482.20000000000005px;" width="16" height="16" viewBox="0 0 16 16"><circle cx="7.9" cy="7.7" r="5.5" fill="none" stroke="url(#qg)" stroke-width="3"/><path d="M9.4 9.2 L13.4 12.9" stroke="#5e9c30" stroke-width="2.9" stroke-linecap="square"/><path d="M8.4 8.2 L11 10.6" stroke="#d8c048" stroke-width="2.2"/><circle cx="8" cy="7.8" r="1.5" fill="#f08424"/></svg>
<div class="t" style="left:1169.3px;top:484.04px;font-size:12px;line-height:14px;letter-spacing:-0.171px;">Vector selection</div>
<svg class="r" style="left:1132px;top:504.6px;" width="5" height="8" viewBox="0 0 5 8"><path d="M0 0 L4.5 4 L0 8Z" fill="#505050"/></svg>
<svg class="r" style="left:1147px;top:500.20000000000005px;" width="16" height="16" viewBox="0 0 16 16"><circle cx="7.9" cy="7.7" r="5.5" fill="none" stroke="url(#qg)" stroke-width="3"/><path d="M9.4 9.2 L13.4 12.9" stroke="#5e9c30" stroke-width="2.9" stroke-linecap="square"/><path d="M8.4 8.2 L11 10.6" stroke="#d8c048" stroke-width="2.2"/><circle cx="8" cy="7.8" r="1.5" fill="#f08424"/></svg>
<div class="t" style="left:1169.3px;top:502.04px;font-size:12px;line-height:14px;letter-spacing:-0.116px;">Vector table</div>
<svg class="r" style="left:1132px;top:522.6px;" width="5" height="8" viewBox="0 0 5 8"><path d="M0 0 L4.5 4 L0 8Z" fill="#505050"/></svg>
<svg class="r" style="left:1147px;top:518.2px;" width="16" height="16" viewBox="0 0 16 16"><circle cx="7.9" cy="7.7" r="5.5" fill="none" stroke="url(#qg)" stroke-width="3"/><path d="M9.4 9.2 L13.4 12.9" stroke="#5e9c30" stroke-width="2.9" stroke-linecap="square"/><path d="M8.4 8.2 L11 10.6" stroke="#d8c048" stroke-width="2.2"/><circle cx="8" cy="7.8" r="1.5" fill="#f08424"/></svg>
<div class="t" style="left:1169.3px;top:520.04px;font-size:12px;line-height:14px;letter-spacing:-0.143px;">Vector tiles</div>
<svg class="r" style="left:1132px;top:540.6px;" width="5" height="8" viewBox="0 0 5 8"><path d="M0 0 L4.5 4 L0 8Z" fill="#505050"/></svg>
<svg class="r" style="left:1145.3px;top:536.1px;" width="18" height="18" viewBox="0 0 18 18"><path d="M9.4 0.9 L4.1 9.4 Q10.4 10.4 16.7 16.7 Q13.6 9.2 10.5 2.4 Z" fill="url(#lg1)"/><path d="M9.4 0.9 L4.1 9.4 Q10.4 10.4 16.7 16.7 Q13.6 9.2 10.5 2.4 Z" fill="url(#lg2)"/></svg>
<div class="t" style="left:1169.3px;top:538.04px;font-size:12px;line-height:14px;letter-spacing:-0.262px;">EnMAP-Box</div>
<svg class="r" style="left:1132px;top:558.6px;" width="5" height="8" viewBox="0 0 5 8"><path d="M0 0 L4.5 4 L0 8Z" fill="#505050"/></svg>
<svg class="r" style="left:1146px;top:553.6px;" width="17" height="18" viewBox="0 0 17 18"><circle cx="10.8" cy="8.4" r="5.2" fill="#58acec"/><path d="M7.4 5.6 C9 4.4 11.6 5 12.4 6.6 C11.6 8 9.6 8.6 8.4 7.6Z" fill="#8c5c34"/><path d="M8 8 C9 7.6 10.4 8 10.6 9.2 C9.6 9.8 8.4 9.4 8 8Z" fill="#4ca040"/><path d="M1.6 5 L8.4 1M4.2 1.6 L7 5.6" stroke="#202020" stroke-width="1.2"/><text x="1" y="15.6" font-size="6.6" font-weight="bold" fill="#000" textLength="15" lengthAdjust="spacingAndGlyphs">GDAL</text></svg>
<div class="t" style="left:1169.3px;top:556.04px;font-size:12px;line-height:14px;letter-spacing:-0.796px;">GDAL</div>
<svg class="r" style="left:1132px;top:576.6px;" width="5" height="8" viewBox="0 0 5 8"><path d="M0 0 L4.5 4 L0 8Z" fill="#505050"/></svg>
<svg class="r" style="left:1147px;top:571.6px;" width="16" height="17" viewBox="0 0 16 17"><path d="M8 0.8 L14.4 7.4 L8 14 L1.6 7.4Z" fill="#f8f8f8" stroke="#707070" stroke-width="0.8"/><path d="M8 12.6 C7.6 9 6.6 6.6 4.8 5M8 12.6 C8.2 8.6 9.2 6.2 11 4.6M8 12.6 V3.6M8 12.6 C7 10.6 5.8 9.6 4 9.2M8 12.6 C9 10.6 10.2 9.6 12 9.2" fill="none" stroke="#2c8c2c" stroke-width="1"/><path d="M2.6 15.2h10.8" stroke="#505050" stroke-width="1"/><path d="M4.6 13.6h6.8" stroke="#909090" stroke-width="0.8"/></svg>
<div class="t" style="left:1169.3px;top:574.04px;font-size:12px;line-height:14px;letter-spacing:-1.403px;">GRASS</div>
<svg class="r" style="left:1132px;top:594.6px;" width="5" height="8" viewBox="0 0 5 8"><path d="M0 0 L4.5 4 L0 8Z" fill="#505050"/></svg>
<svg class="r" style="left:1146px;top:590.6px;" width="17" height="16" viewBox="0 0 17 16"><path d="M13.6 3.4 A6.6 6.6 0 1 0 14.6 10.6" fill="none" stroke="#1c5ca4" stroke-width="1.9"/><path d="M4 5.4 L14.6 8.2 L4.6 11.6 L11.6 14M4 5.4 L12 2.4" fill="none" stroke="#1c5ca4" stroke-width="1.7"/><path d="M12 0.6 L15.8 3 L12.2 5.2Z" fill="#1c5ca4"/></svg>
<div class="t" style="left:1169.3px;top:592.04px;font-size:12px;line-height:14px;letter-spacing:-0.962px;">SAGA</div>
</body></html>
